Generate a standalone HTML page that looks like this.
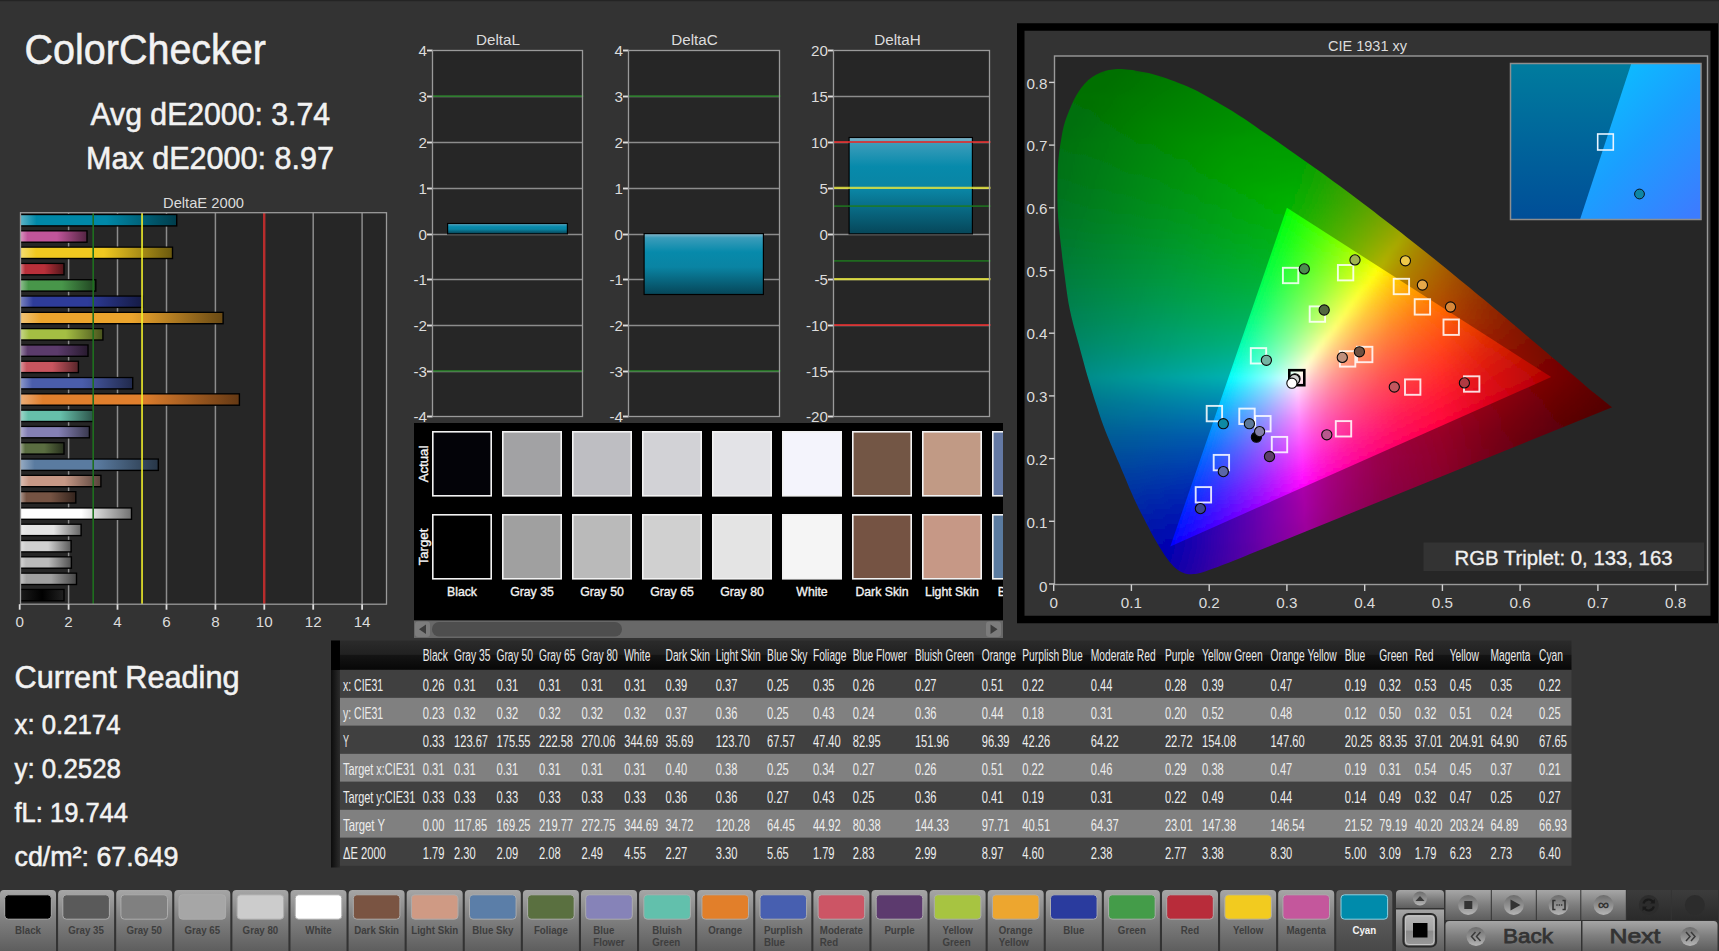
<!DOCTYPE html>
<html lang="en">
<head>
<meta charset="utf-8">
<title>ColorChecker</title>
<style>
html,body{margin:0;padding:0;background:#333333;overflow:hidden}
body{width:1719px;height:951px}
svg{display:block;font-family:'Liberation Sans', sans-serif}
</style>
</head>
<body>
<svg width="1719" height="951" viewBox="0 0 1719 951">
<defs>
<linearGradient id="bg0" x1="0" x2="1" y1="0" y2="0"><stop offset="0" stop-color="#1a1a1a"/><stop offset="0.5" stop-color="#000000"/><stop offset="1" stop-color="#202020"/></linearGradient>
<linearGradient id="bg1" x1="0" x2="1" y1="0" y2="0"><stop offset="0" stop-color="#c1c1c1"/><stop offset="0.1" stop-color="#a0a0a0"/><stop offset="0.55" stop-color="#a0a0a0"/><stop offset="1" stop-color="#484848"/></linearGradient>
<linearGradient id="bg2" x1="0" x2="1" y1="0" y2="0"><stop offset="0" stop-color="#d2d2d2"/><stop offset="0.1" stop-color="#bababa"/><stop offset="0.55" stop-color="#bababa"/><stop offset="1" stop-color="#545454"/></linearGradient>
<linearGradient id="bg3" x1="0" x2="1" y1="0" y2="0"><stop offset="0" stop-color="#e0e0e0"/><stop offset="0.1" stop-color="#d0d0d0"/><stop offset="0.55" stop-color="#d0d0d0"/><stop offset="1" stop-color="#5e5e5e"/></linearGradient>
<linearGradient id="bg4" x1="0" x2="1" y1="0" y2="0"><stop offset="0" stop-color="#ededed"/><stop offset="0.1" stop-color="#e4e4e4"/><stop offset="0.55" stop-color="#e4e4e4"/><stop offset="1" stop-color="#676767"/></linearGradient>
<linearGradient id="bg5" x1="0" x2="1" y1="0" y2="0"><stop offset="0" stop-color="#ffffff"/><stop offset="0.1" stop-color="#ffffff"/><stop offset="0.55" stop-color="#ffffff"/><stop offset="1" stop-color="#737373"/></linearGradient>
<linearGradient id="bg6" x1="0" x2="1" y1="0" y2="0"><stop offset="0" stop-color="#a58f85"/><stop offset="0.1" stop-color="#755343"/><stop offset="0.55" stop-color="#755343"/><stop offset="1" stop-color="#35251e"/></linearGradient>
<linearGradient id="bg7" x1="0" x2="1" y1="0" y2="0"><stop offset="0" stop-color="#dabcb0"/><stop offset="0.1" stop-color="#c69886"/><stop offset="0.55" stop-color="#c69886"/><stop offset="1" stop-color="#59443c"/></linearGradient>
<linearGradient id="bg8" x1="0" x2="1" y1="0" y2="0"><stop offset="0" stop-color="#94a9c1"/><stop offset="0.1" stop-color="#5a7ba0"/><stop offset="0.55" stop-color="#5a7ba0"/><stop offset="1" stop-color="#283748"/></linearGradient>
<linearGradient id="bg9" x1="0" x2="1" y1="0" y2="0"><stop offset="0" stop-color="#94a084"/><stop offset="0.1" stop-color="#5a6d41"/><stop offset="0.55" stop-color="#5a6d41"/><stop offset="1" stop-color="#28311d"/></linearGradient>
<linearGradient id="bg10" x1="0" x2="1" y1="0" y2="0"><stop offset="0" stop-color="#afacce"/><stop offset="0.1" stop-color="#8480b4"/><stop offset="0.55" stop-color="#8480b4"/><stop offset="1" stop-color="#3b3a51"/></linearGradient>
<linearGradient id="bg11" x1="0" x2="1" y1="0" y2="0"><stop offset="0" stop-color="#9cd5c8"/><stop offset="0.1" stop-color="#66bfaa"/><stop offset="0.55" stop-color="#66bfaa"/><stop offset="1" stop-color="#2e564c"/></linearGradient>
<linearGradient id="bg12" x1="0" x2="1" y1="0" y2="0"><stop offset="0" stop-color="#ebac76"/><stop offset="0.1" stop-color="#e07f2d"/><stop offset="0.55" stop-color="#e07f2d"/><stop offset="1" stop-color="#653914"/></linearGradient>
<linearGradient id="bg13" x1="0" x2="1" y1="0" y2="0"><stop offset="0" stop-color="#8996c8"/><stop offset="0.1" stop-color="#4a5dab"/><stop offset="0.55" stop-color="#4a5dab"/><stop offset="1" stop-color="#212a4d"/></linearGradient>
<linearGradient id="bg14" x1="0" x2="1" y1="0" y2="0"><stop offset="0" stop-color="#db9097"/><stop offset="0.1" stop-color="#c8555f"/><stop offset="0.55" stop-color="#c8555f"/><stop offset="1" stop-color="#5a262b"/></linearGradient>
<linearGradient id="bg15" x1="0" x2="1" y1="0" y2="0"><stop offset="0" stop-color="#94809f"/><stop offset="0.1" stop-color="#5b3b6b"/><stop offset="0.55" stop-color="#5b3b6b"/><stop offset="1" stop-color="#291b30"/></linearGradient>
<linearGradient id="bg16" x1="0" x2="1" y1="0" y2="0"><stop offset="0" stop-color="#c4d585"/><stop offset="0.1" stop-color="#a4be43"/><stop offset="0.55" stop-color="#a4be43"/><stop offset="1" stop-color="#4a551e"/></linearGradient>
<linearGradient id="bg17" x1="0" x2="1" y1="0" y2="0"><stop offset="0" stop-color="#f2c476"/><stop offset="0.1" stop-color="#eba42d"/><stop offset="0.55" stop-color="#eba42d"/><stop offset="1" stop-color="#6a4a14"/></linearGradient>
<linearGradient id="bg18" x1="0" x2="1" y1="0" y2="0"><stop offset="0" stop-color="#7780bd"/><stop offset="0.1" stop-color="#2e3c9a"/><stop offset="0.55" stop-color="#2e3c9a"/><stop offset="1" stop-color="#151b45"/></linearGradient>
<linearGradient id="bg19" x1="0" x2="1" y1="0" y2="0"><stop offset="0" stop-color="#88bb89"/><stop offset="0.1" stop-color="#48964a"/><stop offset="0.55" stop-color="#48964a"/><stop offset="1" stop-color="#204421"/></linearGradient>
<linearGradient id="bg20" x1="0" x2="1" y1="0" y2="0"><stop offset="0" stop-color="#d1787f"/><stop offset="0.1" stop-color="#b8303a"/><stop offset="0.55" stop-color="#b8303a"/><stop offset="1" stop-color="#53161a"/></linearGradient>
<linearGradient id="bg21" x1="0" x2="1" y1="0" y2="0"><stop offset="0" stop-color="#f5db6e"/><stop offset="0.1" stop-color="#f0c820"/><stop offset="0.55" stop-color="#f0c820"/><stop offset="1" stop-color="#6c5a0e"/></linearGradient>
<linearGradient id="bg22" x1="0" x2="1" y1="0" y2="0"><stop offset="0" stop-color="#d690bd"/><stop offset="0.1" stop-color="#c0559a"/><stop offset="0.55" stop-color="#c0559a"/><stop offset="1" stop-color="#562645"/></linearGradient>
<linearGradient id="bg23" x1="0" x2="1" y1="0" y2="0"><stop offset="0" stop-color="#59b2c6"/><stop offset="0.1" stop-color="#0088a8"/><stop offset="0.55" stop-color="#0088a8"/><stop offset="1" stop-color="#003d4c"/></linearGradient>
<linearGradient id="cyanbar" x1="0" x2="0" y1="0" y2="1"><stop offset="0" stop-color="#7fb4c8"/><stop offset="0.06" stop-color="#3a9cba"/><stop offset="0.3" stop-color="#078aab"/><stop offset="0.55" stop-color="#0a84a3"/><stop offset="1" stop-color="#06475a"/></linearGradient>
<clipPath id="hs"><path d="M1250.0 554.1 L1246.1 555.7 L1240.6 557.9 L1234.3 560.4 L1228.0 563.0 L1222.5 565.1 L1217.7 566.9 L1213.2 568.6 L1209.0 570.1 L1205.2 571.4 L1201.9 572.5 L1199.1 573.2 L1196.9 573.7 L1195.0 574.0 L1193.3 574.1 L1191.6 574.2 L1190.0 574.3 L1188.5 574.2 L1187.1 574.0 L1185.8 573.7 L1184.2 573.2 L1182.5 572.5 L1180.8 571.7 L1179.0 570.7 L1177.2 569.5 L1175.4 568.1 L1173.6 566.4 L1171.9 564.6 L1170.1 562.5 L1168.4 560.3 L1166.5 557.7 L1164.5 554.9 L1162.5 551.8 L1160.4 548.6 L1158.3 545.1 L1156.2 541.6 L1154.2 538.0 L1152.2 534.4 L1150.1 530.6 L1148.1 526.6 L1145.9 522.4 L1143.7 518.1 L1141.3 513.6 L1139.0 509.0 L1136.6 504.1 L1134.2 498.9 L1131.7 493.3 L1129.1 487.4 L1126.6 481.2 L1124.1 475.2 L1121.6 469.4 L1119.4 464.1 L1117.1 459.0 L1115.0 454.0 L1112.9 449.1 L1110.8 444.2 L1108.9 439.5 L1107.1 435.2 L1105.3 430.8 L1103.5 426.0 L1101.5 420.4 L1099.3 413.9 L1096.9 406.6 L1094.4 399.0 L1092.0 391.2 L1089.7 383.6 L1087.5 376.2 L1085.4 368.9 L1083.4 361.5 L1081.4 354.2 L1079.4 346.8 L1077.4 339.4 L1075.3 332.0 L1073.3 324.5 L1071.5 317.2 L1069.9 310.0 L1068.5 302.9 L1067.4 295.9 L1066.4 289.0 L1065.5 282.2 L1064.7 275.7 L1063.8 269.5 L1063.1 263.6 L1062.3 257.8 L1061.7 252.1 L1061.0 246.2 L1060.3 240.3 L1059.7 234.2 L1059.1 228.2 L1058.6 222.4 L1058.1 216.8 L1057.8 211.6 L1057.6 206.7 L1057.5 202.0 L1057.4 197.2 L1057.4 192.0 L1057.4 186.3 L1057.5 180.2 L1057.6 174.0 L1057.8 168.0 L1058.1 162.5 L1058.6 157.6 L1059.1 153.0 L1059.7 148.7 L1060.3 144.5 L1061.0 140.5 L1061.6 136.7 L1062.2 133.2 L1062.9 129.8 L1063.7 126.3 L1064.7 122.8 L1065.9 119.0 L1067.4 115.0 L1069.0 111.0 L1070.6 107.2 L1072.1 103.7 L1073.6 100.6 L1075.0 97.8 L1076.4 95.3 L1077.9 92.8 L1079.4 90.4 L1081.1 88.1 L1082.8 85.9 L1084.6 83.8 L1086.4 81.9 L1088.3 80.1 L1090.3 78.5 L1092.3 77.0 L1094.4 75.7 L1096.5 74.5 L1098.6 73.5 L1100.7 72.6 L1102.7 71.8 L1104.8 71.1 L1106.8 70.6 L1108.9 70.1 L1110.9 69.7 L1112.9 69.4 L1114.9 69.3 L1117.0 69.1 L1119.2 69.1 L1121.6 69.1 L1123.9 69.2 L1126.4 69.4 L1129.2 69.7 L1132.4 70.1 L1136.0 70.7 L1140.0 71.4 L1144.3 72.2 L1148.6 73.1 L1153.0 74.2 L1157.3 75.4 L1161.7 76.8 L1166.2 78.3 L1170.7 79.9 L1175.1 81.6 L1179.3 83.2 L1183.3 84.7 L1187.5 86.5 L1192.0 88.5 L1197.2 91.1 L1203.5 94.5 L1210.6 98.4 L1218.1 102.7 L1225.4 107.0 L1232.2 111.1 L1238.3 114.9 L1243.9 118.6 L1249.4 122.3 L1254.8 126.1 L1260.3 129.9 L1266.0 133.7 L1271.6 137.6 L1277.3 141.5 L1283.0 145.4 L1288.6 149.4 L1294.3 153.4 L1300.0 157.4 L1305.7 161.4 L1311.4 165.4 L1317.1 169.5 L1322.8 173.6 L1328.5 177.7 L1334.2 181.9 L1339.9 186.1 L1345.6 190.3 L1351.3 194.5 L1356.9 198.8 L1362.5 203.0 L1368.2 207.3 L1373.8 211.6 L1379.4 215.9 L1385.0 220.2 L1390.6 224.5 L1396.1 228.8 L1401.6 233.1 L1407.1 237.4 L1412.6 241.7 L1418.0 246.0 L1423.4 250.3 L1428.7 254.6 L1434.1 258.8 L1439.3 263.1 L1444.6 267.3 L1449.8 271.5 L1454.9 275.7 L1460.0 279.9 L1465.0 284.0 L1470.0 288.1 L1474.9 292.2 L1479.8 296.2 L1484.6 300.1 L1489.3 304.1 L1494.0 307.9 L1498.6 311.8 L1503.0 315.5 L1507.4 319.2 L1511.8 322.9 L1516.0 326.5 L1520.1 330.0 L1524.1 333.4 L1528.0 336.7 L1531.8 339.9 L1535.4 343.0 L1539.0 346.0 L1542.4 348.9 L1545.8 351.8 L1549.2 354.7 L1552.4 357.4 L1555.5 360.1 L1558.5 362.6 L1561.4 365.1 L1564.1 367.4 L1566.8 369.7 L1569.4 371.9 L1571.8 374.0 L1574.2 376.0 L1576.4 377.9 L1578.6 379.8 L1580.6 381.6 L1582.6 383.3 L1584.5 384.9 L1586.3 386.5 L1588.0 388.0 L1589.7 389.4 L1591.3 390.7 L1592.8 392.0 L1594.3 393.1 L1595.7 394.2 L1597.0 395.3 L1598.3 396.3 L1599.6 397.3 L1600.8 398.3 L1601.9 399.2 L1603.0 400.1 L1604.0 400.9 L1605.1 401.8 L1606.0 402.6 L1607.0 403.3 L1607.9 404.1 L1608.8 404.7 L1609.6 405.4 L1610.4 405.9 L1611.1 406.5 L1611.7 406.9 L1612.2 407.2 Z"/></clipPath>
<clipPath id="tri"><path d="M1551.2 377.1 L1286.9 207.8 L1170.3 546.4 Z"/></clipPath>
<filter id="vblur" x="-2%" y="-2%" width="104%" height="104%"><feGaussianBlur stdDeviation="0 2.6"/></filter>
<linearGradient id="ho0" gradientUnits="userSpaceOnUse" x1="1104.7" x2="1135.5" y1="0" y2="0"><stop offset="0.000" stop-color="#007000"/><stop offset="1.000" stop-color="#007100"/></linearGradient>
<linearGradient id="ho1" gradientUnits="userSpaceOnUse" x1="1104.7" x2="1135.5" y1="0" y2="0"><stop offset="0.000" stop-color="#007000"/><stop offset="1.000" stop-color="#007200"/></linearGradient>
<linearGradient id="ho2" gradientUnits="userSpaceOnUse" x1="1090.4" x2="1159.7" y1="0" y2="0"><stop offset="0.000" stop-color="#007000"/><stop offset="0.435" stop-color="#007000"/><stop offset="1.000" stop-color="#007800"/></linearGradient>
<linearGradient id="ho3" gradientUnits="userSpaceOnUse" x1="1082.5" x2="1175.4" y1="0" y2="0"><stop offset="0.000" stop-color="#007000"/><stop offset="0.333" stop-color="#007000"/><stop offset="1.000" stop-color="#007c00"/></linearGradient>
<linearGradient id="ho4" gradientUnits="userSpaceOnUse" x1="1077.3" x2="1188.7" y1="0" y2="0"><stop offset="0.000" stop-color="#007002"/><stop offset="0.270" stop-color="#007000"/><stop offset="1.000" stop-color="#007f00"/></linearGradient>
<linearGradient id="ho5" gradientUnits="userSpaceOnUse" x1="1073.4" x2="1200.2" y1="0" y2="0"><stop offset="0.000" stop-color="#007003"/><stop offset="0.238" stop-color="#007000"/><stop offset="1.000" stop-color="#008200"/></linearGradient>
<linearGradient id="ho6" gradientUnits="userSpaceOnUse" x1="1070.1" x2="1209.8" y1="0" y2="0"><stop offset="0.000" stop-color="#007005"/><stop offset="0.196" stop-color="#007001"/><stop offset="1.000" stop-color="#008500"/></linearGradient>
<linearGradient id="ho7" gradientUnits="userSpaceOnUse" x1="1067.3" x2="1218.8" y1="0" y2="0"><stop offset="0.000" stop-color="#007006"/><stop offset="0.300" stop-color="#007500"/><stop offset="1.000" stop-color="#008800"/></linearGradient>
<linearGradient id="ho8" gradientUnits="userSpaceOnUse" x1="1065.0" x2="1227.5" y1="0" y2="0"><stop offset="0.000" stop-color="#007007"/><stop offset="0.148" stop-color="#007005"/><stop offset="0.352" stop-color="#007800"/><stop offset="1.000" stop-color="#008a00"/></linearGradient>
<linearGradient id="ho9" gradientUnits="userSpaceOnUse" x1="1062.8" x2="1236.0" y1="0" y2="0"><stop offset="0.000" stop-color="#007009"/><stop offset="0.123" stop-color="#007006"/><stop offset="0.386" stop-color="#007a00"/><stop offset="1.000" stop-color="#008d00"/></linearGradient>
<linearGradient id="ho10" gradientUnits="userSpaceOnUse" x1="1060.7" x2="1244.0" y1="0" y2="0"><stop offset="0.000" stop-color="#00700a"/><stop offset="0.115" stop-color="#007008"/><stop offset="0.426" stop-color="#007d00"/><stop offset="1.000" stop-color="#008f00"/></linearGradient>
<linearGradient id="ho11" gradientUnits="userSpaceOnUse" x1="1058.9" x2="1251.6" y1="0" y2="0"><stop offset="0.000" stop-color="#00700b"/><stop offset="0.109" stop-color="#007109"/><stop offset="0.453" stop-color="#008000"/><stop offset="1.000" stop-color="#009100"/></linearGradient>
<linearGradient id="ho12" gradientUnits="userSpaceOnUse" x1="1057.3" x2="1259.0" y1="0" y2="0"><stop offset="0.000" stop-color="#00700c"/><stop offset="0.090" stop-color="#00700a"/><stop offset="0.478" stop-color="#008300"/><stop offset="1.000" stop-color="#009400"/></linearGradient>
<linearGradient id="ho13" gradientUnits="userSpaceOnUse" x1="1056.0" x2="1266.2" y1="0" y2="0"><stop offset="0.000" stop-color="#00700e"/><stop offset="0.071" stop-color="#00700c"/><stop offset="0.500" stop-color="#008600"/><stop offset="1.000" stop-color="#009600"/></linearGradient>
<linearGradient id="ho14" gradientUnits="userSpaceOnUse" x1="1055.1" x2="1273.6" y1="0" y2="0"><stop offset="0.000" stop-color="#00700f"/><stop offset="0.069" stop-color="#00710d"/><stop offset="0.514" stop-color="#008800"/><stop offset="1.000" stop-color="#009800"/></linearGradient>
<linearGradient id="ho15" gradientUnits="userSpaceOnUse" x1="1054.2" x2="1280.8" y1="0" y2="0"><stop offset="0.000" stop-color="#007010"/><stop offset="0.053" stop-color="#00700f"/><stop offset="0.533" stop-color="#008b00"/><stop offset="0.800" stop-color="#009600"/><stop offset="1.000" stop-color="#009a00"/></linearGradient>
<linearGradient id="ho16" gradientUnits="userSpaceOnUse" x1="1053.4" x2="1288.0" y1="0" y2="0"><stop offset="0.000" stop-color="#007011"/><stop offset="0.564" stop-color="#008e00"/><stop offset="0.808" stop-color="#009900"/><stop offset="1.000" stop-color="#009c00"/></linearGradient>
<linearGradient id="ho17" gradientUnits="userSpaceOnUse" x1="1052.6" x2="1295.2" y1="0" y2="0"><stop offset="0.000" stop-color="#007012"/><stop offset="0.325" stop-color="#00820b"/><stop offset="0.575" stop-color="#009100"/><stop offset="0.812" stop-color="#009b00"/><stop offset="1.000" stop-color="#009d00"/></linearGradient>
<linearGradient id="ho18" gradientUnits="userSpaceOnUse" x1="1052.0" x2="1302.4" y1="0" y2="0"><stop offset="0.000" stop-color="#007013"/><stop offset="0.337" stop-color="#00840b"/><stop offset="0.590" stop-color="#009300"/><stop offset="0.687" stop-color="#009800"/><stop offset="0.855" stop-color="#009e00"/><stop offset="1.000" stop-color="#009f00"/></linearGradient>
<linearGradient id="ho19" gradientUnits="userSpaceOnUse" x1="1051.4" x2="1309.5" y1="0" y2="0"><stop offset="0.000" stop-color="#007015"/><stop offset="0.337" stop-color="#00850d"/><stop offset="0.605" stop-color="#009600"/><stop offset="0.698" stop-color="#009b00"/><stop offset="0.977" stop-color="#00a000"/><stop offset="1.000" stop-color="#06a000"/></linearGradient>
<linearGradient id="ho20" gradientUnits="userSpaceOnUse" x1="1051.0" x2="1316.6" y1="0" y2="0"><stop offset="0.000" stop-color="#007016"/><stop offset="0.318" stop-color="#00850f"/><stop offset="0.670" stop-color="#009c00"/><stop offset="0.818" stop-color="#00a200"/><stop offset="0.943" stop-color="#00a200"/><stop offset="1.000" stop-color="#0ea100"/></linearGradient>
<linearGradient id="ho21" gradientUnits="userSpaceOnUse" x1="1050.8" x2="1323.6" y1="0" y2="0"><stop offset="0.000" stop-color="#007017"/><stop offset="0.344" stop-color="#00880f"/><stop offset="0.656" stop-color="#009d00"/><stop offset="0.911" stop-color="#00a400"/><stop offset="1.000" stop-color="#17a100"/></linearGradient>
<linearGradient id="ho22" gradientUnits="userSpaceOnUse" x1="1050.6" x2="1330.5" y1="0" y2="0"><stop offset="0.000" stop-color="#007018"/><stop offset="0.366" stop-color="#008b0f"/><stop offset="0.645" stop-color="#009f00"/><stop offset="0.882" stop-color="#00a600"/><stop offset="1.000" stop-color="#20a100"/></linearGradient>
<linearGradient id="ho23" gradientUnits="userSpaceOnUse" x1="1050.5" x2="1337.4" y1="0" y2="0"><stop offset="0.000" stop-color="#007019"/><stop offset="0.358" stop-color="#008c11"/><stop offset="0.642" stop-color="#00a001"/><stop offset="0.853" stop-color="#00a700"/><stop offset="1.000" stop-color="#29a100"/></linearGradient>
<linearGradient id="ho24" gradientUnits="userSpaceOnUse" x1="1050.5" x2="1344.2" y1="0" y2="0"><stop offset="0.000" stop-color="#00711b"/><stop offset="0.351" stop-color="#008c13"/><stop offset="0.639" stop-color="#00a203"/><stop offset="0.835" stop-color="#00a900"/><stop offset="1.000" stop-color="#32a100"/></linearGradient>
<linearGradient id="ho25" gradientUnits="userSpaceOnUse" x1="1050.4" x2="1351.0" y1="0" y2="0"><stop offset="0.000" stop-color="#00711c"/><stop offset="0.350" stop-color="#008d14"/><stop offset="0.640" stop-color="#00a404"/><stop offset="0.680" stop-color="#00a700"/><stop offset="0.810" stop-color="#00ab00"/><stop offset="1.000" stop-color="#3ca200"/></linearGradient>
<linearGradient id="ho26" gradientUnits="userSpaceOnUse" x1="1050.4" x2="1357.7" y1="0" y2="0"><stop offset="0.000" stop-color="#00711e"/><stop offset="0.343" stop-color="#008e16"/><stop offset="0.539" stop-color="#009e0c"/><stop offset="0.686" stop-color="#00a900"/><stop offset="0.784" stop-color="#00ad00"/><stop offset="1.000" stop-color="#46a200"/></linearGradient>
<linearGradient id="ho27" gradientUnits="userSpaceOnUse" x1="1050.4" x2="1364.3" y1="0" y2="0"><stop offset="0.000" stop-color="#00721f"/><stop offset="0.365" stop-color="#009117"/><stop offset="0.548" stop-color="#00a00d"/><stop offset="0.702" stop-color="#00ad00"/><stop offset="0.760" stop-color="#00af00"/><stop offset="1.000" stop-color="#50a200"/></linearGradient>
<linearGradient id="ho28" gradientUnits="userSpaceOnUse" x1="1050.5" x2="1370.9" y1="0" y2="0"><stop offset="0.000" stop-color="#007221"/><stop offset="0.387" stop-color="#009417"/><stop offset="0.745" stop-color="#00b000"/><stop offset="1.000" stop-color="#5ba200"/></linearGradient>
<linearGradient id="ho29" gradientUnits="userSpaceOnUse" x1="1050.6" x2="1377.5" y1="0" y2="0"><stop offset="0.000" stop-color="#007322"/><stop offset="0.407" stop-color="#009718"/><stop offset="0.574" stop-color="#00a50e"/><stop offset="0.722" stop-color="#00b200"/><stop offset="1.000" stop-color="#66a200"/></linearGradient>
<linearGradient id="ho30" gradientUnits="userSpaceOnUse" x1="1050.7" x2="1384.1" y1="0" y2="0"><stop offset="0.000" stop-color="#007324"/><stop offset="0.396" stop-color="#00971a"/><stop offset="0.568" stop-color="#00a610"/><stop offset="0.703" stop-color="#00b203"/><stop offset="0.730" stop-color="#0cb200"/><stop offset="1.000" stop-color="#72a300"/></linearGradient>
<linearGradient id="ho31" gradientUnits="userSpaceOnUse" x1="1051.0" x2="1390.6" y1="0" y2="0"><stop offset="0.000" stop-color="#007425"/><stop offset="0.381" stop-color="#00971d"/><stop offset="0.681" stop-color="#00b207"/><stop offset="0.735" stop-color="#16b200"/><stop offset="1.000" stop-color="#7ea300"/></linearGradient>
<linearGradient id="ho32" gradientUnits="userSpaceOnUse" x1="1051.3" x2="1397.1" y1="0" y2="0"><stop offset="0.000" stop-color="#007427"/><stop offset="0.374" stop-color="#00971f"/><stop offset="0.670" stop-color="#01b20a"/><stop offset="0.748" stop-color="#24b200"/><stop offset="1.000" stop-color="#8ca300"/></linearGradient>
<linearGradient id="ho33" gradientUnits="userSpaceOnUse" x1="1051.7" x2="1403.5" y1="0" y2="0"><stop offset="0.000" stop-color="#007529"/><stop offset="0.359" stop-color="#009722"/><stop offset="0.650" stop-color="#00b20e"/><stop offset="0.752" stop-color="#2fb200"/><stop offset="1.000" stop-color="#9aa300"/></linearGradient>
<linearGradient id="ho34" gradientUnits="userSpaceOnUse" x1="1052.2" x2="1409.9" y1="0" y2="0"><stop offset="0.000" stop-color="#00762a"/><stop offset="0.345" stop-color="#009724"/><stop offset="0.630" stop-color="#00b211"/><stop offset="0.765" stop-color="#3eb200"/><stop offset="0.983" stop-color="#a1a500"/><stop offset="1.000" stop-color="#a49f00"/></linearGradient>
<linearGradient id="ho35" gradientUnits="userSpaceOnUse" x1="1052.7" x2="1416.3" y1="0" y2="0"><stop offset="0.000" stop-color="#00762c"/><stop offset="0.339" stop-color="#009727"/><stop offset="0.612" stop-color="#00b215"/><stop offset="0.769" stop-color="#4ab200"/><stop offset="0.959" stop-color="#a4a600"/><stop offset="1.000" stop-color="#a49100"/></linearGradient>
<linearGradient id="ho36" gradientUnits="userSpaceOnUse" x1="1053.2" x2="1422.6" y1="0" y2="0"><stop offset="0.000" stop-color="#00772e"/><stop offset="0.333" stop-color="#009829"/><stop offset="0.602" stop-color="#00b218"/><stop offset="0.780" stop-color="#5bb200"/><stop offset="0.935" stop-color="#a8a800"/><stop offset="1.000" stop-color="#a48500"/></linearGradient>
<linearGradient id="ho37" gradientUnits="userSpaceOnUse" x1="1053.8" x2="1428.9" y1="0" y2="0"><stop offset="0.000" stop-color="#007730"/><stop offset="0.320" stop-color="#00982c"/><stop offset="0.584" stop-color="#00b21c"/><stop offset="0.784" stop-color="#68b200"/><stop offset="0.904" stop-color="#a7ab00"/><stop offset="0.912" stop-color="#aaa900"/><stop offset="0.952" stop-color="#a89100"/><stop offset="1.000" stop-color="#a47b00"/></linearGradient>
<linearGradient id="ho38" gradientUnits="userSpaceOnUse" x1="1054.3" x2="1435.2" y1="0" y2="0"><stop offset="0.000" stop-color="#007832"/><stop offset="0.310" stop-color="#00982f"/><stop offset="0.571" stop-color="#00b21f"/><stop offset="0.794" stop-color="#7ab200"/><stop offset="0.881" stop-color="#aaad00"/><stop offset="0.944" stop-color="#a88900"/><stop offset="1.000" stop-color="#a57100"/></linearGradient>
<linearGradient id="ho39" gradientUnits="userSpaceOnUse" x1="1054.9" x2="1441.4" y1="0" y2="0"><stop offset="0.000" stop-color="#007934"/><stop offset="0.305" stop-color="#009832"/><stop offset="0.555" stop-color="#00b223"/><stop offset="0.695" stop-color="#4db212"/><stop offset="0.797" stop-color="#89b200"/><stop offset="0.859" stop-color="#adae00"/><stop offset="0.930" stop-color="#aa8500"/><stop offset="1.000" stop-color="#a56800"/></linearGradient>
<linearGradient id="ho40" gradientUnits="userSpaceOnUse" x1="1055.5" x2="1447.6" y1="0" y2="0"><stop offset="0.000" stop-color="#007936"/><stop offset="0.292" stop-color="#009835"/><stop offset="0.538" stop-color="#00b227"/><stop offset="0.692" stop-color="#56b214"/><stop offset="0.808" stop-color="#9eb200"/><stop offset="0.838" stop-color="#b0b000"/><stop offset="0.908" stop-color="#ab8500"/><stop offset="1.000" stop-color="#a35e00"/></linearGradient>
<linearGradient id="ho41" gradientUnits="userSpaceOnUse" x1="1056.1" x2="1453.8" y1="0" y2="0"><stop offset="0.000" stop-color="#007a39"/><stop offset="0.288" stop-color="#009937"/><stop offset="0.530" stop-color="#01b22b"/><stop offset="0.705" stop-color="#69b214"/><stop offset="0.811" stop-color="#afb200"/><stop offset="0.818" stop-color="#b2b000"/><stop offset="0.856" stop-color="#af9600"/><stop offset="0.894" stop-color="#ad8100"/><stop offset="0.970" stop-color="#a86200"/><stop offset="1.000" stop-color="#a05500"/></linearGradient>
<linearGradient id="ho42" gradientUnits="userSpaceOnUse" x1="1056.8" x2="1459.9" y1="0" y2="0"><stop offset="0.000" stop-color="#007b3b"/><stop offset="0.284" stop-color="#00993a"/><stop offset="0.515" stop-color="#00b22f"/><stop offset="0.679" stop-color="#64b21a"/><stop offset="0.791" stop-color="#b1b206"/><stop offset="0.821" stop-color="#b29f00"/><stop offset="0.881" stop-color="#ae7d00"/><stop offset="0.955" stop-color="#a95f00"/><stop offset="1.000" stop-color="#9d4d00"/></linearGradient>
<linearGradient id="ho43" gradientUnits="userSpaceOnUse" x1="1057.4" x2="1466.0" y1="0" y2="0"><stop offset="0.000" stop-color="#007b3d"/><stop offset="0.272" stop-color="#00993e"/><stop offset="0.500" stop-color="#00b233"/><stop offset="0.654" stop-color="#60b220"/><stop offset="0.765" stop-color="#adb20e"/><stop offset="0.772" stop-color="#b2b20c"/><stop offset="0.824" stop-color="#b29100"/><stop offset="0.875" stop-color="#af7600"/><stop offset="0.941" stop-color="#aa5c00"/><stop offset="1.000" stop-color="#9b4600"/></linearGradient>
<linearGradient id="ho44" gradientUnits="userSpaceOnUse" x1="1058.1" x2="1472.1" y1="0" y2="0"><stop offset="0.000" stop-color="#007c40"/><stop offset="0.268" stop-color="#009a41"/><stop offset="0.493" stop-color="#01b237"/><stop offset="0.645" stop-color="#65b224"/><stop offset="0.746" stop-color="#afb213"/><stop offset="0.754" stop-color="#b2b012"/><stop offset="0.790" stop-color="#b29709"/><stop offset="0.833" stop-color="#b28000"/><stop offset="0.928" stop-color="#ac5900"/><stop offset="1.000" stop-color="#983f00"/></linearGradient>
<linearGradient id="ho45" gradientUnits="userSpaceOnUse" x1="1058.8" x2="1478.2" y1="0" y2="0"><stop offset="0.000" stop-color="#007d42"/><stop offset="0.259" stop-color="#009a44"/><stop offset="0.475" stop-color="#00b23c"/><stop offset="0.619" stop-color="#5eb22b"/><stop offset="0.727" stop-color="#afb219"/><stop offset="0.734" stop-color="#b2b018"/><stop offset="0.784" stop-color="#b28e0b"/><stop offset="0.835" stop-color="#b27501"/><stop offset="0.914" stop-color="#ad5600"/><stop offset="1.000" stop-color="#953800"/></linearGradient>
<linearGradient id="ho46" gradientUnits="userSpaceOnUse" x1="1059.4" x2="1484.3" y1="0" y2="0"><stop offset="0.000" stop-color="#007d45"/><stop offset="0.255" stop-color="#009a48"/><stop offset="0.468" stop-color="#01b240"/><stop offset="0.617" stop-color="#69b22e"/><stop offset="0.709" stop-color="#b1b21f"/><stop offset="0.752" stop-color="#b29413"/><stop offset="0.787" stop-color="#b2800b"/><stop offset="0.844" stop-color="#b26800"/><stop offset="0.901" stop-color="#ae5300"/><stop offset="1.000" stop-color="#933300"/></linearGradient>
<linearGradient id="ho47" gradientUnits="userSpaceOnUse" x1="1060.2" x2="1490.3" y1="0" y2="0"><stop offset="0.000" stop-color="#007e48"/><stop offset="0.245" stop-color="#009a4b"/><stop offset="0.455" stop-color="#00b245"/><stop offset="0.594" stop-color="#64b235"/><stop offset="0.685" stop-color="#adb227"/><stop offset="0.692" stop-color="#b2b225"/><stop offset="0.734" stop-color="#b29318"/><stop offset="0.776" stop-color="#b27b0e"/><stop offset="0.846" stop-color="#b25e01"/><stop offset="0.888" stop-color="#b05000"/><stop offset="1.000" stop-color="#902d00"/></linearGradient>
<linearGradient id="ho48" gradientUnits="userSpaceOnUse" x1="1060.9" x2="1496.4" y1="0" y2="0"><stop offset="0.000" stop-color="#007e4b"/><stop offset="0.241" stop-color="#009b4f"/><stop offset="0.441" stop-color="#00b24a"/><stop offset="0.572" stop-color="#5fb23b"/><stop offset="0.669" stop-color="#afb22d"/><stop offset="0.676" stop-color="#b2b02b"/><stop offset="0.717" stop-color="#b2911d"/><stop offset="0.759" stop-color="#b27912"/><stop offset="0.855" stop-color="#b25400"/><stop offset="0.876" stop-color="#b14d00"/><stop offset="0.931" stop-color="#a13a00"/><stop offset="1.000" stop-color="#8d2800"/></linearGradient>
<linearGradient id="ho49" gradientUnits="userSpaceOnUse" x1="1061.8" x2="1502.4" y1="0" y2="0"><stop offset="0.000" stop-color="#007f4e"/><stop offset="0.233" stop-color="#009b53"/><stop offset="0.432" stop-color="#00b24f"/><stop offset="0.562" stop-color="#63b241"/><stop offset="0.651" stop-color="#afb233"/><stop offset="0.658" stop-color="#b2b031"/><stop offset="0.705" stop-color="#b28b20"/><stop offset="0.747" stop-color="#b27516"/><stop offset="0.801" stop-color="#b25e0a"/><stop offset="0.863" stop-color="#b24b00"/><stop offset="0.925" stop-color="#a03600"/><stop offset="1.000" stop-color="#8b2400"/></linearGradient>
<linearGradient id="ho50" gradientUnits="userSpaceOnUse" x1="1062.7" x2="1508.4" y1="0" y2="0"><stop offset="0.000" stop-color="#008051"/><stop offset="0.230" stop-color="#009b57"/><stop offset="0.419" stop-color="#00b254"/><stop offset="0.541" stop-color="#5db247"/><stop offset="0.635" stop-color="#b1b23a"/><stop offset="0.696" stop-color="#b28523"/><stop offset="0.764" stop-color="#b26412"/><stop offset="0.851" stop-color="#b24703"/><stop offset="0.926" stop-color="#9d3000"/><stop offset="1.000" stop-color="#881f00"/></linearGradient>
<linearGradient id="ho51" gradientUnits="userSpaceOnUse" x1="1063.8" x2="1514.3" y1="0" y2="0"><stop offset="0.000" stop-color="#008154"/><stop offset="0.227" stop-color="#009c5b"/><stop offset="0.413" stop-color="#01b25a"/><stop offset="0.533" stop-color="#64b24d"/><stop offset="0.613" stop-color="#adb242"/><stop offset="0.620" stop-color="#b2b140"/><stop offset="0.660" stop-color="#b2902f"/><stop offset="0.713" stop-color="#b2711e"/><stop offset="0.773" stop-color="#b25811"/><stop offset="0.840" stop-color="#b24405"/><stop offset="0.873" stop-color="#ab3900"/><stop offset="1.000" stop-color="#851c00"/></linearGradient>
<linearGradient id="ho52" gradientUnits="userSpaceOnUse" x1="1065.0" x2="1520.2" y1="0" y2="0"><stop offset="0.000" stop-color="#008157"/><stop offset="0.219" stop-color="#009c5f"/><stop offset="0.397" stop-color="#00b25f"/><stop offset="0.404" stop-color="#03b25f"/><stop offset="0.510" stop-color="#5cb254"/><stop offset="0.596" stop-color="#adb249"/><stop offset="0.603" stop-color="#b2b148"/><stop offset="0.636" stop-color="#b29438"/><stop offset="0.669" stop-color="#b27e2b"/><stop offset="0.742" stop-color="#b25b17"/><stop offset="0.828" stop-color="#b24008"/><stop offset="0.881" stop-color="#a63100"/><stop offset="1.000" stop-color="#831800"/></linearGradient>
<linearGradient id="ho53" gradientUnits="userSpaceOnUse" x1="1066.2" x2="1526.1" y1="0" y2="0"><stop offset="0.000" stop-color="#00825b"/><stop offset="0.216" stop-color="#009d64"/><stop offset="0.392" stop-color="#01b265"/><stop offset="0.510" stop-color="#69b259"/><stop offset="0.582" stop-color="#afb250"/><stop offset="0.588" stop-color="#b2af4e"/><stop offset="0.614" stop-color="#b29740"/><stop offset="0.647" stop-color="#b28032"/><stop offset="0.725" stop-color="#b2591b"/><stop offset="0.817" stop-color="#b23d0a"/><stop offset="0.882" stop-color="#a32b00"/><stop offset="1.000" stop-color="#801500"/></linearGradient>
<linearGradient id="ho54" gradientUnits="userSpaceOnUse" x1="1067.6" x2="1532.0" y1="0" y2="0"><stop offset="0.000" stop-color="#00835e"/><stop offset="0.208" stop-color="#009d69"/><stop offset="0.377" stop-color="#00b26b"/><stop offset="0.383" stop-color="#03b26b"/><stop offset="0.481" stop-color="#5ab262"/><stop offset="0.565" stop-color="#afb258"/><stop offset="0.571" stop-color="#b2af55"/><stop offset="0.604" stop-color="#b29143"/><stop offset="0.636" stop-color="#b27a35"/><stop offset="0.714" stop-color="#b2551e"/><stop offset="0.812" stop-color="#b1380b"/><stop offset="0.890" stop-color="#9e2400"/><stop offset="1.000" stop-color="#7d1100"/></linearGradient>
<linearGradient id="ho55" gradientUnits="userSpaceOnUse" x1="1068.9" x2="1537.9" y1="0" y2="0"><stop offset="0.000" stop-color="#008462"/><stop offset="0.205" stop-color="#009e6e"/><stop offset="0.372" stop-color="#02b272"/><stop offset="0.481" stop-color="#68b268"/><stop offset="0.551" stop-color="#b2b260"/><stop offset="0.583" stop-color="#b2944c"/><stop offset="0.615" stop-color="#b27c3c"/><stop offset="0.654" stop-color="#b2662e"/><stop offset="0.705" stop-color="#b25120"/><stop offset="0.801" stop-color="#b1350d"/><stop offset="0.891" stop-color="#9b1f00"/><stop offset="1.000" stop-color="#7b0f00"/></linearGradient>
<linearGradient id="ho56" gradientUnits="userSpaceOnUse" x1="1070.3" x2="1543.8" y1="0" y2="0"><stop offset="0.000" stop-color="#008566"/><stop offset="0.357" stop-color="#00b278"/><stop offset="0.459" stop-color="#5fb270"/><stop offset="0.535" stop-color="#b2b269"/><stop offset="0.567" stop-color="#b29353"/><stop offset="0.605" stop-color="#b27740"/><stop offset="0.643" stop-color="#b26231"/><stop offset="0.694" stop-color="#b24d22"/><stop offset="0.790" stop-color="#b2320f"/><stop offset="0.898" stop-color="#971a00"/><stop offset="1.000" stop-color="#780c00"/></linearGradient>
<linearGradient id="ho57" gradientUnits="userSpaceOnUse" x1="1071.7" x2="1549.7" y1="0" y2="0"><stop offset="0.000" stop-color="#00866b"/><stop offset="0.346" stop-color="#00b27f"/><stop offset="0.352" stop-color="#02b27f"/><stop offset="0.434" stop-color="#54b279"/><stop offset="0.522" stop-color="#b2b06f"/><stop offset="0.553" stop-color="#b29058"/><stop offset="0.591" stop-color="#b27444"/><stop offset="0.629" stop-color="#b25f35"/><stop offset="0.679" stop-color="#b24b26"/><stop offset="0.780" stop-color="#b12f11"/><stop offset="0.906" stop-color="#921500"/><stop offset="1.000" stop-color="#750900"/></linearGradient>
<linearGradient id="ho58" gradientUnits="userSpaceOnUse" x1="1073.1" x2="1555.5" y1="0" y2="0"><stop offset="0.000" stop-color="#00866f"/><stop offset="0.337" stop-color="#00b286"/><stop offset="0.425" stop-color="#57b281"/><stop offset="0.506" stop-color="#b2b079"/><stop offset="0.537" stop-color="#b28f60"/><stop offset="0.575" stop-color="#b2734a"/><stop offset="0.619" stop-color="#b25b38"/><stop offset="0.669" stop-color="#b24729"/><stop offset="0.769" stop-color="#b22c13"/><stop offset="0.906" stop-color="#8f1100"/><stop offset="1.000" stop-color="#730700"/></linearGradient>
<linearGradient id="ho59" gradientUnits="userSpaceOnUse" x1="1074.4" x2="1561.4" y1="0" y2="0"><stop offset="0.000" stop-color="#008774"/><stop offset="0.327" stop-color="#00b28e"/><stop offset="0.333" stop-color="#03b28e"/><stop offset="0.414" stop-color="#58b289"/><stop offset="0.488" stop-color="#b0b284"/><stop offset="0.494" stop-color="#b2ad80"/><stop offset="0.525" stop-color="#b28c66"/><stop offset="0.562" stop-color="#b2704f"/><stop offset="0.605" stop-color="#b2593c"/><stop offset="0.660" stop-color="#b2432a"/><stop offset="0.759" stop-color="#b22915"/><stop offset="0.833" stop-color="#9f1909"/><stop offset="0.914" stop-color="#8a0d00"/><stop offset="1.000" stop-color="#700500"/></linearGradient>
<linearGradient id="ho60" gradientUnits="userSpaceOnUse" x1="1075.8" x2="1567.2" y1="0" y2="0"><stop offset="0.000" stop-color="#008879"/><stop offset="0.319" stop-color="#00b296"/><stop offset="0.405" stop-color="#5cb292"/><stop offset="0.472" stop-color="#b0b28f"/><stop offset="0.479" stop-color="#b2ad8a"/><stop offset="0.509" stop-color="#b28c6e"/><stop offset="0.552" stop-color="#b26b52"/><stop offset="0.595" stop-color="#b2543f"/><stop offset="0.650" stop-color="#b23f2d"/><stop offset="0.748" stop-color="#b22617"/><stop offset="0.822" stop-color="#9f170b"/><stop offset="0.914" stop-color="#880a00"/><stop offset="1.000" stop-color="#6f0200"/></linearGradient>
<linearGradient id="ho61" gradientUnits="userSpaceOnUse" x1="1077.1" x2="1573.1" y1="0" y2="0"><stop offset="0.000" stop-color="#00897e"/><stop offset="0.309" stop-color="#00b29e"/><stop offset="0.315" stop-color="#03b29e"/><stop offset="0.388" stop-color="#57b29c"/><stop offset="0.461" stop-color="#b2b198"/><stop offset="0.491" stop-color="#b28e79"/><stop offset="0.527" stop-color="#b2705e"/><stop offset="0.576" stop-color="#b25545"/><stop offset="0.630" stop-color="#b23f32"/><stop offset="0.739" stop-color="#b22319"/><stop offset="0.812" stop-color="#9f140c"/><stop offset="0.891" stop-color="#8b0a03"/><stop offset="1.000" stop-color="#6d0000"/></linearGradient>
<linearGradient id="ho62" gradientUnits="userSpaceOnUse" x1="1078.5" x2="1579.0" y1="0" y2="0"><stop offset="0.000" stop-color="#008a83"/><stop offset="0.301" stop-color="#00b2a7"/><stop offset="0.380" stop-color="#5bb2a6"/><stop offset="0.446" stop-color="#b2b2a3"/><stop offset="0.476" stop-color="#b28d81"/><stop offset="0.518" stop-color="#b26b61"/><stop offset="0.566" stop-color="#b25048"/><stop offset="0.620" stop-color="#b23b34"/><stop offset="0.729" stop-color="#b2201b"/><stop offset="0.880" stop-color="#8b0804"/><stop offset="0.928" stop-color="#7e0300"/><stop offset="1.000" stop-color="#6a0000"/></linearGradient>
<linearGradient id="ho63" gradientUnits="userSpaceOnUse" x1="1079.9" x2="1584.8" y1="0" y2="0"><stop offset="0.000" stop-color="#008b89"/><stop offset="0.292" stop-color="#00b2b0"/><stop offset="0.298" stop-color="#04b2b0"/><stop offset="0.363" stop-color="#55b2b0"/><stop offset="0.429" stop-color="#aeb2af"/><stop offset="0.435" stop-color="#b2adab"/><stop offset="0.464" stop-color="#b28987"/><stop offset="0.506" stop-color="#b16765"/><stop offset="0.554" stop-color="#b14d4b"/><stop offset="0.613" stop-color="#b03635"/><stop offset="0.720" stop-color="#b01d1c"/><stop offset="0.869" stop-color="#890606"/><stop offset="0.935" stop-color="#780000"/><stop offset="1.000" stop-color="#660000"/></linearGradient>
<linearGradient id="ho64" gradientUnits="userSpaceOnUse" x1="1081.4" x2="1590.6" y1="0" y2="0"><stop offset="0.000" stop-color="#00888b"/><stop offset="0.284" stop-color="#00abb2"/><stop offset="0.355" stop-color="#55aab2"/><stop offset="0.420" stop-color="#ada8b2"/><stop offset="0.426" stop-color="#b1a5ae"/><stop offset="0.456" stop-color="#b1828a"/><stop offset="0.497" stop-color="#b06168"/><stop offset="0.544" stop-color="#af484d"/><stop offset="0.604" stop-color="#ae3237"/><stop offset="0.710" stop-color="#ae1a1e"/><stop offset="0.787" stop-color="#9a0c10"/><stop offset="0.876" stop-color="#830205"/><stop offset="1.000" stop-color="#620000"/></linearGradient>
<linearGradient id="ho65" gradientUnits="userSpaceOnUse" x1="1082.8" x2="1596.4" y1="0" y2="0"><stop offset="0.000" stop-color="#00848c"/><stop offset="0.275" stop-color="#00a2b2"/><stop offset="0.351" stop-color="#59a0b2"/><stop offset="0.415" stop-color="#ae9db1"/><stop offset="0.421" stop-color="#b198ac"/><stop offset="0.450" stop-color="#b07889"/><stop offset="0.491" stop-color="#af5a68"/><stop offset="0.544" stop-color="#ae404b"/><stop offset="0.602" stop-color="#ac2c36"/><stop offset="0.702" stop-color="#ac171f"/><stop offset="0.778" stop-color="#980a11"/><stop offset="0.871" stop-color="#800006"/><stop offset="0.942" stop-color="#6c0000"/><stop offset="1.000" stop-color="#5e0000"/></linearGradient>
<linearGradient id="ho66" gradientUnits="userSpaceOnUse" x1="1084.4" x2="1602.5" y1="0" y2="0"><stop offset="0.000" stop-color="#00808d"/><stop offset="0.267" stop-color="#009ab2"/><stop offset="0.343" stop-color="#5897b2"/><stop offset="0.413" stop-color="#b190af"/><stop offset="0.448" stop-color="#af6c86"/><stop offset="0.488" stop-color="#ae5166"/><stop offset="0.535" stop-color="#ac3b4d"/><stop offset="0.593" stop-color="#aa2837"/><stop offset="0.692" stop-color="#aa1420"/><stop offset="0.837" stop-color="#840009"/><stop offset="0.913" stop-color="#6e0002"/><stop offset="1.000" stop-color="#5a0000"/></linearGradient>
<linearGradient id="ho67" gradientUnits="userSpaceOnUse" x1="1085.9" x2="1608.8" y1="0" y2="0"><stop offset="0.000" stop-color="#007b8e"/><stop offset="0.259" stop-color="#0092b2"/><stop offset="0.356" stop-color="#718cb2"/><stop offset="0.402" stop-color="#ac87b0"/><stop offset="0.408" stop-color="#b084ac"/><stop offset="0.443" stop-color="#ae6385"/><stop offset="0.483" stop-color="#ac4a66"/><stop offset="0.529" stop-color="#aa354d"/><stop offset="0.586" stop-color="#a82438"/><stop offset="0.684" stop-color="#a71021"/><stop offset="0.805" stop-color="#89000c"/><stop offset="0.902" stop-color="#6b0003"/><stop offset="1.000" stop-color="#560000"/></linearGradient>
<linearGradient id="ho68" gradientUnits="userSpaceOnUse" x1="1087.5" x2="1615.0" y1="0" y2="0"><stop offset="0.000" stop-color="#00778f"/><stop offset="0.251" stop-color="#008ab2"/><stop offset="0.331" stop-color="#5c85b2"/><stop offset="0.400" stop-color="#b07caf"/><stop offset="0.434" stop-color="#ae5d87"/><stop offset="0.474" stop-color="#ab4468"/><stop offset="0.526" stop-color="#a82f4c"/><stop offset="0.583" stop-color="#a61f37"/><stop offset="0.674" stop-color="#a60e22"/><stop offset="0.777" stop-color="#8b000f"/><stop offset="0.891" stop-color="#690004"/><stop offset="1.000" stop-color="#520000"/></linearGradient>
<linearGradient id="ho69" gradientUnits="userSpaceOnUse" x1="1089.1" x2="1618.4" y1="0" y2="0"><stop offset="0.000" stop-color="#007390"/><stop offset="0.244" stop-color="#0083b2"/><stop offset="0.347" stop-color="#747ab2"/><stop offset="0.398" stop-color="#af71ac"/><stop offset="0.432" stop-color="#ad5586"/><stop offset="0.472" stop-color="#aa3e67"/><stop offset="0.523" stop-color="#a72a4c"/><stop offset="0.580" stop-color="#a41b38"/><stop offset="0.670" stop-color="#a30b23"/><stop offset="0.750" stop-color="#8f0013"/><stop offset="0.824" stop-color="#78000a"/><stop offset="0.886" stop-color="#660004"/><stop offset="1.000" stop-color="#500000"/></linearGradient>
<linearGradient id="ho70" gradientUnits="userSpaceOnUse" x1="1090.7" x2="1614.4" y1="0" y2="0"><stop offset="0.000" stop-color="#007091"/><stop offset="0.241" stop-color="#017cb2"/><stop offset="0.345" stop-color="#7272b2"/><stop offset="0.397" stop-color="#ae6aaf"/><stop offset="0.402" stop-color="#ae65a8"/><stop offset="0.437" stop-color="#ac4c83"/><stop offset="0.477" stop-color="#a93766"/><stop offset="0.523" stop-color="#a5264e"/><stop offset="0.580" stop-color="#a21839"/><stop offset="0.672" stop-color="#a20824"/><stop offset="0.730" stop-color="#930018"/><stop offset="0.822" stop-color="#78000b"/><stop offset="0.897" stop-color="#630005"/><stop offset="1.000" stop-color="#4f0000"/></linearGradient>
<linearGradient id="ho71" gradientUnits="userSpaceOnUse" x1="1092.4" x2="1602.1" y1="0" y2="0"><stop offset="0.000" stop-color="#006c92"/><stop offset="0.237" stop-color="#0075b2"/><stop offset="0.243" stop-color="#0375b2"/><stop offset="0.349" stop-color="#716ab2"/><stop offset="0.402" stop-color="#aa61ae"/><stop offset="0.408" stop-color="#ae5fab"/><stop offset="0.438" stop-color="#ab4a8b"/><stop offset="0.479" stop-color="#a8356b"/><stop offset="0.527" stop-color="#a42452"/><stop offset="0.580" stop-color="#a0173d"/><stop offset="0.686" stop-color="#a00525"/><stop offset="0.728" stop-color="#96001d"/><stop offset="0.822" stop-color="#7a000e"/><stop offset="0.917" stop-color="#610005"/><stop offset="1.000" stop-color="#510001"/></linearGradient>
<linearGradient id="ho72" gradientUnits="userSpaceOnUse" x1="1094.1" x2="1589.8" y1="0" y2="0"><stop offset="0.000" stop-color="#006892"/><stop offset="0.242" stop-color="#026eb2"/><stop offset="0.358" stop-color="#7462b2"/><stop offset="0.412" stop-color="#ab59ae"/><stop offset="0.418" stop-color="#ad55a9"/><stop offset="0.455" stop-color="#aa3f85"/><stop offset="0.491" stop-color="#a72f6b"/><stop offset="0.539" stop-color="#a31f52"/><stop offset="0.594" stop-color="#9e133e"/><stop offset="0.703" stop-color="#9e0226"/><stop offset="0.836" stop-color="#79000f"/><stop offset="0.939" stop-color="#5e0006"/><stop offset="1.000" stop-color="#540003"/></linearGradient>
<linearGradient id="ho73" gradientUnits="userSpaceOnUse" x1="1095.8" x2="1577.5" y1="0" y2="0"><stop offset="0.000" stop-color="#006493"/><stop offset="0.238" stop-color="#0068b2"/><stop offset="0.362" stop-color="#735bb2"/><stop offset="0.425" stop-color="#ad4fab"/><stop offset="0.462" stop-color="#a93a86"/><stop offset="0.500" stop-color="#a62a6c"/><stop offset="0.550" stop-color="#a11c53"/><stop offset="0.606" stop-color="#9c103e"/><stop offset="0.719" stop-color="#9c0027"/><stop offset="0.844" stop-color="#7a0011"/><stop offset="1.000" stop-color="#560004"/></linearGradient>
<linearGradient id="ho74" gradientUnits="userSpaceOnUse" x1="1097.7" x2="1565.1" y1="0" y2="0"><stop offset="0.000" stop-color="#006094"/><stop offset="0.239" stop-color="#0062b2"/><stop offset="0.368" stop-color="#7254b2"/><stop offset="0.432" stop-color="#ac49ac"/><stop offset="0.471" stop-color="#a93588"/><stop offset="0.510" stop-color="#a5266e"/><stop offset="0.561" stop-color="#a01854"/><stop offset="0.619" stop-color="#9a0c3f"/><stop offset="0.710" stop-color="#9a002c"/><stop offset="0.735" stop-color="#980027"/><stop offset="0.852" stop-color="#7a0013"/><stop offset="1.000" stop-color="#580006"/></linearGradient>
<linearGradient id="ho75" gradientUnits="userSpaceOnUse" x1="1099.7" x2="1552.8" y1="0" y2="0"><stop offset="0.000" stop-color="#005c95"/><stop offset="0.238" stop-color="#005cb2"/><stop offset="0.377" stop-color="#754db2"/><stop offset="0.444" stop-color="#ac41ab"/><stop offset="0.483" stop-color="#a82e87"/><stop offset="0.523" stop-color="#a4216d"/><stop offset="0.576" stop-color="#9f1454"/><stop offset="0.636" stop-color="#990940"/><stop offset="0.702" stop-color="#990032"/><stop offset="0.755" stop-color="#960028"/><stop offset="0.868" stop-color="#7a0015"/><stop offset="1.000" stop-color="#5b0008"/></linearGradient>
<linearGradient id="ho76" gradientUnits="userSpaceOnUse" x1="1101.7" x2="1540.5" y1="0" y2="0"><stop offset="0.000" stop-color="#005996"/><stop offset="0.240" stop-color="#0157b2"/><stop offset="0.384" stop-color="#7446b2"/><stop offset="0.452" stop-color="#ab3aac"/><stop offset="0.493" stop-color="#a82989"/><stop offset="0.534" stop-color="#a41d6f"/><stop offset="0.582" stop-color="#a01159"/><stop offset="0.644" stop-color="#9a0743"/><stop offset="0.692" stop-color="#990038"/><stop offset="0.774" stop-color="#940029"/><stop offset="0.877" stop-color="#7c0017"/><stop offset="1.000" stop-color="#60000b"/></linearGradient>
<linearGradient id="ho77" gradientUnits="userSpaceOnUse" x1="1103.8" x2="1528.2" y1="0" y2="0"><stop offset="0.000" stop-color="#005597"/><stop offset="0.234" stop-color="#0052b2"/><stop offset="0.397" stop-color="#793fb2"/><stop offset="0.461" stop-color="#a934ac"/><stop offset="0.468" stop-color="#ac32a8"/><stop offset="0.504" stop-color="#a8248b"/><stop offset="0.546" stop-color="#a41871"/><stop offset="0.596" stop-color="#a00e5a"/><stop offset="0.652" stop-color="#9b0547"/><stop offset="0.688" stop-color="#99003e"/><stop offset="0.801" stop-color="#920028"/><stop offset="0.894" stop-color="#7c0019"/><stop offset="1.000" stop-color="#65000e"/></linearGradient>
<linearGradient id="ho78" gradientUnits="userSpaceOnUse" x1="1105.9" x2="1515.8" y1="0" y2="0"><stop offset="0.000" stop-color="#005198"/><stop offset="0.235" stop-color="#004cb2"/><stop offset="0.404" stop-color="#7839b2"/><stop offset="0.478" stop-color="#ac2caa"/><stop offset="0.515" stop-color="#a9208d"/><stop offset="0.559" stop-color="#a51473"/><stop offset="0.610" stop-color="#a00a5c"/><stop offset="0.662" stop-color="#9b024b"/><stop offset="0.728" stop-color="#96003a"/><stop offset="0.824" stop-color="#900029"/><stop offset="1.000" stop-color="#6a0011"/></linearGradient>
<linearGradient id="ho79" gradientUnits="userSpaceOnUse" x1="1108.0" x2="1503.5" y1="0" y2="0"><stop offset="0.000" stop-color="#004d99"/><stop offset="0.237" stop-color="#0147b2"/><stop offset="0.412" stop-color="#7833b2"/><stop offset="0.489" stop-color="#ac26ac"/><stop offset="0.534" stop-color="#a8198a"/><stop offset="0.580" stop-color="#a40e71"/><stop offset="0.664" stop-color="#9d0151"/><stop offset="0.695" stop-color="#990047"/><stop offset="0.847" stop-color="#8f002a"/><stop offset="1.000" stop-color="#6f0014"/></linearGradient>
<linearGradient id="ho80" gradientUnits="userSpaceOnUse" x1="1110.2" x2="1491.2" y1="0" y2="0"><stop offset="0.000" stop-color="#004a9b"/><stop offset="0.230" stop-color="#0043b2"/><stop offset="0.421" stop-color="#772db2"/><stop offset="0.500" stop-color="#aa20ac"/><stop offset="0.508" stop-color="#ab1ea8"/><stop offset="0.548" stop-color="#a8148c"/><stop offset="0.595" stop-color="#a40a73"/><stop offset="0.659" stop-color="#9f005a"/><stop offset="0.706" stop-color="#98004a"/><stop offset="0.778" stop-color="#93003a"/><stop offset="0.873" stop-color="#8e002a"/><stop offset="1.000" stop-color="#740018"/></linearGradient>
<linearGradient id="ho81" gradientUnits="userSpaceOnUse" x1="1112.4" x2="1478.8" y1="0" y2="0"><stop offset="0.000" stop-color="#00469c"/><stop offset="0.230" stop-color="#003eb2"/><stop offset="0.434" stop-color="#7a27b2"/><stop offset="0.516" stop-color="#ab1aac"/><stop offset="0.557" stop-color="#a91090"/><stop offset="0.598" stop-color="#a5087a"/><stop offset="0.648" stop-color="#a10066"/><stop offset="0.713" stop-color="#99004f"/><stop offset="0.787" stop-color="#92003d"/><stop offset="0.902" stop-color="#8c002b"/><stop offset="1.000" stop-color="#79001c"/></linearGradient>
<linearGradient id="ho82" gradientUnits="userSpaceOnUse" x1="1114.5" x2="1466.5" y1="0" y2="0"><stop offset="0.000" stop-color="#00429d"/><stop offset="0.231" stop-color="#0039b2"/><stop offset="0.444" stop-color="#7922b2"/><stop offset="0.530" stop-color="#aa14ac"/><stop offset="0.538" stop-color="#ab12a8"/><stop offset="0.615" stop-color="#a5047c"/><stop offset="0.641" stop-color="#a30071"/><stop offset="0.726" stop-color="#990052"/><stop offset="0.803" stop-color="#91003f"/><stop offset="0.932" stop-color="#8b002c"/><stop offset="1.000" stop-color="#7e0021"/></linearGradient>
<linearGradient id="ho83" gradientUnits="userSpaceOnUse" x1="1116.6" x2="1454.2" y1="0" y2="0"><stop offset="0.000" stop-color="#003e9e"/><stop offset="0.232" stop-color="#0135b2"/><stop offset="0.455" stop-color="#791cb2"/><stop offset="0.554" stop-color="#ab0daa"/><stop offset="0.625" stop-color="#a60082"/><stop offset="0.643" stop-color="#a40079"/><stop offset="0.741" stop-color="#980055"/><stop offset="0.830" stop-color="#900040"/><stop offset="0.964" stop-color="#8a002c"/><stop offset="1.000" stop-color="#830027"/></linearGradient>
<linearGradient id="ho84" gradientUnits="userSpaceOnUse" x1="1118.7" x2="1441.9" y1="0" y2="0"><stop offset="0.000" stop-color="#003b9f"/><stop offset="0.224" stop-color="#0031b2"/><stop offset="0.467" stop-color="#7817b2"/><stop offset="0.570" stop-color="#ac08ab"/><stop offset="0.607" stop-color="#a90196"/><stop offset="0.654" stop-color="#a4007e"/><stop offset="0.757" stop-color="#980058"/><stop offset="0.841" stop-color="#8f0044"/><stop offset="1.000" stop-color="#88002d"/></linearGradient>
<linearGradient id="ho85" gradientUnits="userSpaceOnUse" x1="1120.8" x2="1429.5" y1="0" y2="0"><stop offset="0.000" stop-color="#0037a0"/><stop offset="0.225" stop-color="#002cb2"/><stop offset="0.490" stop-color="#7d11b2"/><stop offset="0.588" stop-color="#aa02ac"/><stop offset="0.676" stop-color="#a2007e"/><stop offset="0.765" stop-color="#99005f"/><stop offset="0.863" stop-color="#8e0046"/><stop offset="1.000" stop-color="#880032"/></linearGradient>
<linearGradient id="ho86" gradientUnits="userSpaceOnUse" x1="1122.9" x2="1417.2" y1="0" y2="0"><stop offset="0.000" stop-color="#0033a1"/><stop offset="0.224" stop-color="#0028b2"/><stop offset="0.500" stop-color="#7a0cb2"/><stop offset="0.582" stop-color="#9d00ad"/><stop offset="0.612" stop-color="#aa00aa"/><stop offset="0.694" stop-color="#a20081"/><stop offset="0.786" stop-color="#980061"/><stop offset="0.898" stop-color="#8d0046"/><stop offset="1.000" stop-color="#880037"/></linearGradient>
<linearGradient id="ho87" gradientUnits="userSpaceOnUse" x1="1125.0" x2="1404.9" y1="0" y2="0"><stop offset="0.000" stop-color="#002fa2"/><stop offset="0.226" stop-color="#0124b2"/><stop offset="0.527" stop-color="#7e05b2"/><stop offset="0.570" stop-color="#8f00af"/><stop offset="0.634" stop-color="#a700a9"/><stop offset="0.720" stop-color="#a00082"/><stop offset="0.796" stop-color="#990068"/><stop offset="0.903" stop-color="#8e004d"/><stop offset="1.000" stop-color="#89003d"/></linearGradient>
<linearGradient id="ho88" gradientUnits="userSpaceOnUse" x1="1127.3" x2="1392.6" y1="0" y2="0"><stop offset="0.000" stop-color="#002ca3"/><stop offset="0.216" stop-color="#0021b2"/><stop offset="0.545" stop-color="#7d00b2"/><stop offset="0.670" stop-color="#a700a5"/><stop offset="0.739" stop-color="#a00086"/><stop offset="0.818" stop-color="#99006b"/><stop offset="0.909" stop-color="#900054"/><stop offset="1.000" stop-color="#890043"/></linearGradient>
<linearGradient id="ho89" gradientUnits="userSpaceOnUse" x1="1129.6" x2="1380.2" y1="0" y2="0"><stop offset="0.000" stop-color="#0028a4"/><stop offset="0.217" stop-color="#001db2"/><stop offset="0.518" stop-color="#6b00b2"/><stop offset="0.699" stop-color="#a500a4"/><stop offset="0.759" stop-color="#a0008b"/><stop offset="0.831" stop-color="#990072"/><stop offset="1.000" stop-color="#8a004b"/></linearGradient>
<linearGradient id="ho90" gradientUnits="userSpaceOnUse" x1="1132.1" x2="1367.9" y1="0" y2="0"><stop offset="0.000" stop-color="#0024a5"/><stop offset="0.218" stop-color="#0219b2"/><stop offset="0.500" stop-color="#5e00b2"/><stop offset="0.590" stop-color="#7b00af"/><stop offset="0.731" stop-color="#a300a4"/><stop offset="0.859" stop-color="#990076"/><stop offset="1.000" stop-color="#8d0054"/></linearGradient>
<linearGradient id="ho91" gradientUnits="userSpaceOnUse" x1="1134.6" x2="1355.6" y1="0" y2="0"><stop offset="0.000" stop-color="#0020a6"/><stop offset="0.205" stop-color="#0016b2"/><stop offset="0.466" stop-color="#4e00b2"/><stop offset="0.630" stop-color="#7e00ad"/><stop offset="0.767" stop-color="#a100a2"/><stop offset="0.877" stop-color="#9a007d"/><stop offset="1.000" stop-color="#90005f"/></linearGradient>
<linearGradient id="ho92" gradientUnits="userSpaceOnUse" x1="1137.2" x2="1343.2" y1="0" y2="0"><stop offset="0.000" stop-color="#001ca7"/><stop offset="0.206" stop-color="#0112b2"/><stop offset="0.441" stop-color="#4200b2"/><stop offset="0.662" stop-color="#7c00ac"/><stop offset="0.809" stop-color="#9f00a1"/><stop offset="0.912" stop-color="#990081"/><stop offset="1.000" stop-color="#93006b"/></linearGradient>
<linearGradient id="ho93" gradientUnits="userSpaceOnUse" x1="1139.8" x2="1330.9" y1="0" y2="0"><stop offset="0.000" stop-color="#0018a8"/><stop offset="0.190" stop-color="#000fb2"/><stop offset="0.397" stop-color="#3300b2"/><stop offset="0.683" stop-color="#7800ab"/><stop offset="0.873" stop-color="#9e009d"/><stop offset="1.000" stop-color="#960079"/></linearGradient>
<linearGradient id="ho94" gradientUnits="userSpaceOnUse" x1="1142.4" x2="1318.6" y1="0" y2="0"><stop offset="0.000" stop-color="#0014aa"/><stop offset="0.190" stop-color="#010bb2"/><stop offset="0.345" stop-color="#2500b2"/><stop offset="0.741" stop-color="#7a00a9"/><stop offset="0.931" stop-color="#9d009c"/><stop offset="1.000" stop-color="#990089"/></linearGradient>
<linearGradient id="ho95" gradientUnits="userSpaceOnUse" x1="1145.0" x2="1306.3" y1="0" y2="0"><stop offset="0.000" stop-color="#0010ab"/><stop offset="0.170" stop-color="#0008b2"/><stop offset="0.189" stop-color="#0307b2"/><stop offset="0.302" stop-color="#1b00b2"/><stop offset="0.774" stop-color="#7600a8"/><stop offset="1.000" stop-color="#9c009b"/></linearGradient>
<linearGradient id="ho96" gradientUnits="userSpaceOnUse" x1="1147.8" x2="1293.9" y1="0" y2="0"><stop offset="0.000" stop-color="#000bac"/><stop offset="0.167" stop-color="#0004b2"/><stop offset="0.229" stop-color="#0d00b2"/><stop offset="0.833" stop-color="#7500a7"/><stop offset="1.000" stop-color="#8e009e"/></linearGradient>
<linearGradient id="ho97" gradientUnits="userSpaceOnUse" x1="1150.7" x2="1281.6" y1="0" y2="0"><stop offset="0.000" stop-color="#0007ad"/><stop offset="0.163" stop-color="#0300b2"/><stop offset="1.000" stop-color="#8000a1"/></linearGradient>
<linearGradient id="ho98" gradientUnits="userSpaceOnUse" x1="1153.8" x2="1269.3" y1="0" y2="0"><stop offset="0.000" stop-color="#0002ae"/><stop offset="0.132" stop-color="#0100b1"/><stop offset="1.000" stop-color="#7300a4"/></linearGradient>
<linearGradient id="ho99" gradientUnits="userSpaceOnUse" x1="1157.0" x2="1257.0" y1="0" y2="0"><stop offset="0.000" stop-color="#0000ad"/><stop offset="0.091" stop-color="#0000af"/><stop offset="1.000" stop-color="#6500a4"/></linearGradient>
<linearGradient id="ho100" gradientUnits="userSpaceOnUse" x1="1160.5" x2="1244.6" y1="0" y2="0"><stop offset="0.000" stop-color="#0000ad"/><stop offset="0.071" stop-color="#0200ad"/><stop offset="1.000" stop-color="#5700a4"/></linearGradient>
<linearGradient id="ho101" gradientUnits="userSpaceOnUse" x1="1164.5" x2="1232.1" y1="0" y2="0"><stop offset="0.000" stop-color="#0200ab"/><stop offset="1.000" stop-color="#4a00a4"/></linearGradient>
<linearGradient id="ho102" gradientUnits="userSpaceOnUse" x1="1169.7" x2="1218.8" y1="0" y2="0"><stop offset="0.000" stop-color="#0a00aa"/><stop offset="1.000" stop-color="#3d00a4"/></linearGradient>
<linearGradient id="ho103" gradientUnits="userSpaceOnUse" x1="1178.9" x2="1203.5" y1="0" y2="0"><stop offset="0.000" stop-color="#1500a8"/><stop offset="1.000" stop-color="#2e00a5"/></linearGradient>
<linearGradient id="ho104" gradientUnits="userSpaceOnUse" x1="1178.9" x2="1203.5" y1="0" y2="0"><stop offset="0.000" stop-color="#1700a6"/><stop offset="1.000" stop-color="#2f00a3"/></linearGradient>
<linearGradient id="ho105" gradientUnits="userSpaceOnUse" x1="1178.9" x2="1203.5" y1="0" y2="0"><stop offset="0.000" stop-color="#1700a6"/><stop offset="1.000" stop-color="#2f00a3"/></linearGradient>
<linearGradient id="hi0" gradientUnits="userSpaceOnUse" x1="1279.7" x2="1294.7" y1="0" y2="0"><stop offset="0.000" stop-color="#00ff00"/><stop offset="0.500" stop-color="#00ff00"/><stop offset="1.000" stop-color="#0bff00"/></linearGradient>
<linearGradient id="hi1" gradientUnits="userSpaceOnUse" x1="1279.7" x2="1294.7" y1="0" y2="0"><stop offset="0.000" stop-color="#00ff02"/><stop offset="0.500" stop-color="#00ff00"/><stop offset="1.000" stop-color="#0eff00"/></linearGradient>
<linearGradient id="hi2" gradientUnits="userSpaceOnUse" x1="1278.5" x2="1300.2" y1="0" y2="0"><stop offset="0.000" stop-color="#00ff06"/><stop offset="0.429" stop-color="#04ff01"/><stop offset="1.000" stop-color="#1aff00"/></linearGradient>
<linearGradient id="hi3" gradientUnits="userSpaceOnUse" x1="1277.2" x2="1306.4" y1="0" y2="0"><stop offset="0.000" stop-color="#00ff0a"/><stop offset="0.222" stop-color="#00ff07"/><stop offset="0.667" stop-color="#17ff00"/><stop offset="1.000" stop-color="#28ff00"/></linearGradient>
<linearGradient id="hi4" gradientUnits="userSpaceOnUse" x1="1275.8" x2="1312.7" y1="0" y2="0"><stop offset="0.000" stop-color="#00ff0e"/><stop offset="0.250" stop-color="#04ff0a"/><stop offset="0.750" stop-color="#26ff00"/><stop offset="1.000" stop-color="#36ff00"/></linearGradient>
<linearGradient id="hi5" gradientUnits="userSpaceOnUse" x1="1274.4" x2="1318.9" y1="0" y2="0"><stop offset="0.000" stop-color="#00ff12"/><stop offset="0.214" stop-color="#04ff0e"/><stop offset="0.786" stop-color="#33ff00"/><stop offset="1.000" stop-color="#44ff00"/></linearGradient>
<linearGradient id="hi6" gradientUnits="userSpaceOnUse" x1="1273.0" x2="1325.1" y1="0" y2="0"><stop offset="0.000" stop-color="#00ff16"/><stop offset="0.176" stop-color="#04ff12"/><stop offset="0.824" stop-color="#42ff00"/><stop offset="1.000" stop-color="#53ff00"/></linearGradient>
<linearGradient id="hi7" gradientUnits="userSpaceOnUse" x1="1271.7" x2="1331.4" y1="0" y2="0"><stop offset="0.000" stop-color="#00ff1a"/><stop offset="0.158" stop-color="#04ff16"/><stop offset="0.842" stop-color="#50ff00"/><stop offset="1.000" stop-color="#62ff00"/></linearGradient>
<linearGradient id="hi8" gradientUnits="userSpaceOnUse" x1="1270.3" x2="1337.6" y1="0" y2="0"><stop offset="0.000" stop-color="#00ff1e"/><stop offset="0.136" stop-color="#04ff1a"/><stop offset="0.864" stop-color="#60ff00"/><stop offset="1.000" stop-color="#72ff00"/></linearGradient>
<linearGradient id="hi9" gradientUnits="userSpaceOnUse" x1="1268.9" x2="1343.9" y1="0" y2="0"><stop offset="0.000" stop-color="#00ff22"/><stop offset="0.125" stop-color="#04ff1e"/><stop offset="0.875" stop-color="#70ff00"/><stop offset="1.000" stop-color="#82ff00"/></linearGradient>
<linearGradient id="hi10" gradientUnits="userSpaceOnUse" x1="1267.5" x2="1350.1" y1="0" y2="0"><stop offset="0.000" stop-color="#00ff26"/><stop offset="0.111" stop-color="#04ff22"/><stop offset="0.889" stop-color="#81ff00"/><stop offset="1.000" stop-color="#94ff00"/></linearGradient>
<linearGradient id="hi11" gradientUnits="userSpaceOnUse" x1="1266.1" x2="1356.4" y1="0" y2="0"><stop offset="0.000" stop-color="#00ff2a"/><stop offset="0.100" stop-color="#03ff26"/><stop offset="0.900" stop-color="#93ff00"/><stop offset="1.000" stop-color="#a6ff00"/></linearGradient>
<linearGradient id="hi12" gradientUnits="userSpaceOnUse" x1="1264.8" x2="1362.6" y1="0" y2="0"><stop offset="0.000" stop-color="#00ff2e"/><stop offset="0.094" stop-color="#04ff2a"/><stop offset="0.906" stop-color="#a5ff00"/><stop offset="1.000" stop-color="#b9ff00"/></linearGradient>
<linearGradient id="hi13" gradientUnits="userSpaceOnUse" x1="1263.4" x2="1368.9" y1="0" y2="0"><stop offset="0.000" stop-color="#00ff32"/><stop offset="0.086" stop-color="#04ff2e"/><stop offset="0.543" stop-color="#65ff18"/><stop offset="0.914" stop-color="#b8ff00"/><stop offset="1.000" stop-color="#cdff00"/></linearGradient>
<linearGradient id="hi14" gradientUnits="userSpaceOnUse" x1="1262.0" x2="1375.1" y1="0" y2="0"><stop offset="0.000" stop-color="#00ff36"/><stop offset="0.081" stop-color="#04ff33"/><stop offset="0.649" stop-color="#88ff14"/><stop offset="0.919" stop-color="#cdff00"/><stop offset="1.000" stop-color="#e2ff00"/></linearGradient>
<linearGradient id="hi15" gradientUnits="userSpaceOnUse" x1="1260.6" x2="1381.4" y1="0" y2="0"><stop offset="0.000" stop-color="#00ff3b"/><stop offset="0.075" stop-color="#04ff37"/><stop offset="0.625" stop-color="#8fff18"/><stop offset="0.925" stop-color="#e2ff00"/><stop offset="1.000" stop-color="#f9ff00"/></linearGradient>
<linearGradient id="hi16" gradientUnits="userSpaceOnUse" x1="1259.3" x2="1387.6" y1="0" y2="0"><stop offset="0.000" stop-color="#00ff3f"/><stop offset="0.071" stop-color="#04ff3c"/><stop offset="0.595" stop-color="#93ff1c"/><stop offset="0.929" stop-color="#f9ff00"/><stop offset="0.952" stop-color="#fffd00"/><stop offset="1.000" stop-color="#ffee00"/></linearGradient>
<linearGradient id="hi17" gradientUnits="userSpaceOnUse" x1="1257.9" x2="1393.8" y1="0" y2="0"><stop offset="0.000" stop-color="#00ff44"/><stop offset="0.067" stop-color="#04ff40"/><stop offset="0.556" stop-color="#93ff22"/><stop offset="0.867" stop-color="#faff07"/><stop offset="0.889" stop-color="#fffc05"/><stop offset="1.000" stop-color="#ffda00"/></linearGradient>
<linearGradient id="hi18" gradientUnits="userSpaceOnUse" x1="1256.5" x2="1400.1" y1="0" y2="0"><stop offset="0.000" stop-color="#00ff49"/><stop offset="0.064" stop-color="#04ff45"/><stop offset="0.511" stop-color="#90ff28"/><stop offset="0.809" stop-color="#f9ff0e"/><stop offset="0.830" stop-color="#fffd0c"/><stop offset="0.936" stop-color="#ffd900"/><stop offset="1.000" stop-color="#ffc700"/></linearGradient>
<linearGradient id="hi19" gradientUnits="userSpaceOnUse" x1="1255.1" x2="1406.3" y1="0" y2="0"><stop offset="0.000" stop-color="#00ff4d"/><stop offset="0.060" stop-color="#04ff4a"/><stop offset="0.480" stop-color="#91ff2e"/><stop offset="0.760" stop-color="#faff15"/><stop offset="0.780" stop-color="#fffb13"/><stop offset="0.920" stop-color="#ffcc02"/><stop offset="1.000" stop-color="#ffb700"/></linearGradient>
<linearGradient id="hi20" gradientUnits="userSpaceOnUse" x1="1253.7" x2="1412.6" y1="0" y2="0"><stop offset="0.000" stop-color="#00ff52"/><stop offset="0.058" stop-color="#04ff4f"/><stop offset="0.442" stop-color="#8eff35"/><stop offset="0.731" stop-color="#fffc1a"/><stop offset="0.846" stop-color="#ffd10b"/><stop offset="0.942" stop-color="#ffb600"/><stop offset="1.000" stop-color="#ffa800"/></linearGradient>
<linearGradient id="hi21" gradientUnits="userSpaceOnUse" x1="1252.4" x2="1418.8" y1="0" y2="0"><stop offset="0.000" stop-color="#00ff57"/><stop offset="0.055" stop-color="#04ff54"/><stop offset="0.436" stop-color="#96ff39"/><stop offset="0.673" stop-color="#fbff23"/><stop offset="0.691" stop-color="#fffb20"/><stop offset="0.836" stop-color="#ffc40c"/><stop offset="0.945" stop-color="#ffa700"/><stop offset="1.000" stop-color="#ff9a00"/></linearGradient>
<linearGradient id="hi22" gradientUnits="userSpaceOnUse" x1="1251.0" x2="1425.1" y1="0" y2="0"><stop offset="0.000" stop-color="#00ff5c"/><stop offset="0.052" stop-color="#04ff59"/><stop offset="0.414" stop-color="#97ff3f"/><stop offset="0.638" stop-color="#fdff2a"/><stop offset="0.724" stop-color="#ffdb1b"/><stop offset="0.810" stop-color="#ffbd10"/><stop offset="0.931" stop-color="#ff9d01"/><stop offset="1.000" stop-color="#ff8e00"/></linearGradient>
<linearGradient id="hi23" gradientUnits="userSpaceOnUse" x1="1249.6" x2="1431.3" y1="0" y2="0"><stop offset="0.000" stop-color="#00ff62"/><stop offset="0.050" stop-color="#04ff5e"/><stop offset="0.383" stop-color="#93ff46"/><stop offset="0.600" stop-color="#fcff31"/><stop offset="0.700" stop-color="#ffd51f"/><stop offset="0.783" stop-color="#ffb713"/><stop offset="0.933" stop-color="#ff9001"/><stop offset="1.000" stop-color="#ff8200"/></linearGradient>
<linearGradient id="hi24" gradientUnits="userSpaceOnUse" x1="1248.2" x2="1437.6" y1="0" y2="0"><stop offset="0.000" stop-color="#00ff67"/><stop offset="0.048" stop-color="#04ff64"/><stop offset="0.365" stop-color="#94ff4c"/><stop offset="0.571" stop-color="#feff38"/><stop offset="0.667" stop-color="#ffd325"/><stop offset="0.762" stop-color="#ffb116"/><stop offset="0.937" stop-color="#ff8401"/><stop offset="1.000" stop-color="#ff7800"/></linearGradient>
<linearGradient id="hi25" gradientUnits="userSpaceOnUse" x1="1246.9" x2="1443.8" y1="0" y2="0"><stop offset="0.000" stop-color="#00ff6d"/><stop offset="0.046" stop-color="#04ff6a"/><stop offset="0.338" stop-color="#91ff53"/><stop offset="0.538" stop-color="#fdff40"/><stop offset="0.646" stop-color="#ffcc29"/><stop offset="0.738" stop-color="#ffab1a"/><stop offset="0.938" stop-color="#ff7901"/><stop offset="1.000" stop-color="#fe6d00"/></linearGradient>
<linearGradient id="hi26" gradientUnits="userSpaceOnUse" x1="1245.5" x2="1450.1" y1="0" y2="0"><stop offset="0.000" stop-color="#00ff72"/><stop offset="0.044" stop-color="#04ff6f"/><stop offset="0.324" stop-color="#92ff5a"/><stop offset="0.515" stop-color="#ffff47"/><stop offset="0.603" stop-color="#ffd031"/><stop offset="0.706" stop-color="#ffa91f"/><stop offset="0.809" stop-color="#ff8c11"/><stop offset="0.941" stop-color="#ff6f01"/><stop offset="1.000" stop-color="#f96200"/></linearGradient>
<linearGradient id="hi27" gradientUnits="userSpaceOnUse" x1="1244.1" x2="1456.3" y1="0" y2="0"><stop offset="0.000" stop-color="#00ff78"/><stop offset="0.043" stop-color="#04ff75"/><stop offset="0.314" stop-color="#96ff60"/><stop offset="0.486" stop-color="#fdff4f"/><stop offset="0.586" stop-color="#ffca35"/><stop offset="0.686" stop-color="#ffa422"/><stop offset="0.800" stop-color="#ff8312"/><stop offset="0.929" stop-color="#ff6803"/><stop offset="1.000" stop-color="#f55800"/></linearGradient>
<linearGradient id="hi28" gradientUnits="userSpaceOnUse" x1="1242.7" x2="1462.5" y1="0" y2="0"><stop offset="0.000" stop-color="#00ff7e"/><stop offset="0.041" stop-color="#04ff7b"/><stop offset="0.288" stop-color="#8fff68"/><stop offset="0.466" stop-color="#fffe56"/><stop offset="0.562" stop-color="#ffc83b"/><stop offset="0.671" stop-color="#ff9d25"/><stop offset="0.781" stop-color="#ff7e14"/><stop offset="0.904" stop-color="#ff6406"/><stop offset="1.000" stop-color="#f04f00"/></linearGradient>
<linearGradient id="hi29" gradientUnits="userSpaceOnUse" x1="1241.3" x2="1468.8" y1="0" y2="0"><stop offset="0.000" stop-color="#00ff84"/><stop offset="0.027" stop-color="#00ff83"/><stop offset="0.040" stop-color="#05ff82"/><stop offset="0.280" stop-color="#93ff6f"/><stop offset="0.440" stop-color="#feff5f"/><stop offset="0.533" stop-color="#ffc842"/><stop offset="0.653" stop-color="#ff9828"/><stop offset="0.760" stop-color="#ff7a17"/><stop offset="0.880" stop-color="#ff6009"/><stop offset="1.000" stop-color="#eb4700"/></linearGradient>
<linearGradient id="hi30" gradientUnits="userSpaceOnUse" x1="1240.0" x2="1475.0" y1="0" y2="0"><stop offset="0.000" stop-color="#00ff8b"/><stop offset="0.038" stop-color="#04ff88"/><stop offset="0.256" stop-color="#8cff78"/><stop offset="0.423" stop-color="#fffd66"/><stop offset="0.474" stop-color="#ffdb53"/><stop offset="0.526" stop-color="#ffbf44"/><stop offset="0.641" stop-color="#ff912a"/><stop offset="0.744" stop-color="#ff741a"/><stop offset="0.859" stop-color="#ff5c0b"/><stop offset="0.949" stop-color="#f04801"/><stop offset="1.000" stop-color="#e73f00"/></linearGradient>
<linearGradient id="hi31" gradientUnits="userSpaceOnUse" x1="1238.6" x2="1481.3" y1="0" y2="0"><stop offset="0.000" stop-color="#00ff91"/><stop offset="0.025" stop-color="#00ff90"/><stop offset="0.037" stop-color="#05ff8f"/><stop offset="0.250" stop-color="#90ff7f"/><stop offset="0.400" stop-color="#ffff70"/><stop offset="0.450" stop-color="#ffdc5c"/><stop offset="0.500" stop-color="#ffbf4b"/><stop offset="0.625" stop-color="#ff8c2e"/><stop offset="0.725" stop-color="#ff701d"/><stop offset="0.838" stop-color="#ff580e"/><stop offset="0.950" stop-color="#eb4001"/><stop offset="1.000" stop-color="#e23700"/></linearGradient>
<linearGradient id="hi32" gradientUnits="userSpaceOnUse" x1="1237.2" x2="1487.5" y1="0" y2="0"><stop offset="0.000" stop-color="#00ff98"/><stop offset="0.024" stop-color="#00ff97"/><stop offset="0.036" stop-color="#05ff96"/><stop offset="0.229" stop-color="#89ff88"/><stop offset="0.386" stop-color="#fffc77"/><stop offset="0.434" stop-color="#ffd962"/><stop offset="0.482" stop-color="#ffbd51"/><stop offset="0.602" stop-color="#ff8a32"/><stop offset="0.699" stop-color="#ff6e21"/><stop offset="0.819" stop-color="#ff5410"/><stop offset="0.952" stop-color="#e63901"/><stop offset="1.000" stop-color="#dd3100"/></linearGradient>
<linearGradient id="hi33" gradientUnits="userSpaceOnUse" x1="1235.8" x2="1493.8" y1="0" y2="0"><stop offset="0.000" stop-color="#00ff9f"/><stop offset="0.024" stop-color="#00ff9e"/><stop offset="0.035" stop-color="#05ff9d"/><stop offset="0.235" stop-color="#96ff8e"/><stop offset="0.365" stop-color="#fffe82"/><stop offset="0.412" stop-color="#ffda6b"/><stop offset="0.459" stop-color="#ffbd59"/><stop offset="0.518" stop-color="#ffa047"/><stop offset="0.588" stop-color="#ff8535"/><stop offset="0.682" stop-color="#ff6a23"/><stop offset="0.800" stop-color="#ff5013"/><stop offset="0.953" stop-color="#e23201"/><stop offset="1.000" stop-color="#d92b00"/></linearGradient>
<linearGradient id="hi34" gradientUnits="userSpaceOnUse" x1="1234.5" x2="1500.0" y1="0" y2="0"><stop offset="0.000" stop-color="#00ffa6"/><stop offset="0.023" stop-color="#00ffa5"/><stop offset="0.034" stop-color="#05ffa4"/><stop offset="0.205" stop-color="#86ff98"/><stop offset="0.341" stop-color="#f9ff8d"/><stop offset="0.352" stop-color="#fffb89"/><stop offset="0.398" stop-color="#ffd771"/><stop offset="0.455" stop-color="#ffb45a"/><stop offset="0.511" stop-color="#ff9948"/><stop offset="0.580" stop-color="#ff7f37"/><stop offset="0.670" stop-color="#ff6526"/><stop offset="0.784" stop-color="#ff4c15"/><stop offset="0.955" stop-color="#dd2b01"/><stop offset="1.000" stop-color="#d42500"/></linearGradient>
<linearGradient id="hi35" gradientUnits="userSpaceOnUse" x1="1233.1" x2="1506.3" y1="0" y2="0"><stop offset="0.000" stop-color="#00ffae"/><stop offset="0.022" stop-color="#00ffac"/><stop offset="0.033" stop-color="#05ffac"/><stop offset="0.209" stop-color="#91ffa0"/><stop offset="0.330" stop-color="#fdff96"/><stop offset="0.385" stop-color="#ffd378"/><stop offset="0.429" stop-color="#ffb764"/><stop offset="0.495" stop-color="#ff964d"/><stop offset="0.560" stop-color="#ff7d3c"/><stop offset="0.659" stop-color="#ff6028"/><stop offset="0.769" stop-color="#fe4817"/><stop offset="0.923" stop-color="#df2a04"/><stop offset="1.000" stop-color="#d02000"/></linearGradient>
<linearGradient id="hi36" gradientUnits="userSpaceOnUse" x1="1231.7" x2="1512.5" y1="0" y2="0"><stop offset="0.000" stop-color="#00ffb5"/><stop offset="0.022" stop-color="#00ffb4"/><stop offset="0.032" stop-color="#05ffb4"/><stop offset="0.204" stop-color="#95ffa9"/><stop offset="0.312" stop-color="#faffa0"/><stop offset="0.323" stop-color="#fffa9c"/><stop offset="0.366" stop-color="#ffd481"/><stop offset="0.419" stop-color="#ffb168"/><stop offset="0.484" stop-color="#ff9151"/><stop offset="0.559" stop-color="#ff743c"/><stop offset="0.645" stop-color="#ff5c2a"/><stop offset="0.753" stop-color="#ff4519"/><stop offset="0.903" stop-color="#df2806"/><stop offset="1.000" stop-color="#cb1b00"/></linearGradient>
<linearGradient id="hi37" gradientUnits="userSpaceOnUse" x1="1230.3" x2="1518.8" y1="0" y2="0"><stop offset="0.000" stop-color="#00ffbd"/><stop offset="0.021" stop-color="#00ffbc"/><stop offset="0.031" stop-color="#05ffbc"/><stop offset="0.198" stop-color="#97ffb2"/><stop offset="0.302" stop-color="#feffaa"/><stop offset="0.354" stop-color="#ffd188"/><stop offset="0.406" stop-color="#ffae6d"/><stop offset="0.469" stop-color="#ff8e56"/><stop offset="0.542" stop-color="#ff7240"/><stop offset="0.635" stop-color="#ff572c"/><stop offset="0.740" stop-color="#fe411b"/><stop offset="0.865" stop-color="#e3280a"/><stop offset="1.000" stop-color="#c61600"/></linearGradient>
<linearGradient id="hi38" gradientUnits="userSpaceOnUse" x1="1228.9" x2="1525.0" y1="0" y2="0"><stop offset="0.000" stop-color="#00ffc6"/><stop offset="0.020" stop-color="#00ffc5"/><stop offset="0.031" stop-color="#05ffc4"/><stop offset="0.184" stop-color="#91ffbc"/><stop offset="0.286" stop-color="#faffb5"/><stop offset="0.296" stop-color="#fff8b0"/><stop offset="0.347" stop-color="#ffca8c"/><stop offset="0.398" stop-color="#ffa871"/><stop offset="0.459" stop-color="#ff8959"/><stop offset="0.531" stop-color="#ff6d43"/><stop offset="0.622" stop-color="#ff532f"/><stop offset="0.724" stop-color="#fe3d1d"/><stop offset="0.847" stop-color="#e3260c"/><stop offset="1.000" stop-color="#c21200"/></linearGradient>
<linearGradient id="hi39" gradientUnits="userSpaceOnUse" x1="1227.6" x2="1531.2" y1="0" y2="0"><stop offset="0.000" stop-color="#00ffce"/><stop offset="0.020" stop-color="#00ffce"/><stop offset="0.030" stop-color="#05ffcd"/><stop offset="0.178" stop-color="#94ffc6"/><stop offset="0.277" stop-color="#ffffc0"/><stop offset="0.327" stop-color="#ffce99"/><stop offset="0.376" stop-color="#ffaa7c"/><stop offset="0.436" stop-color="#ff8a61"/><stop offset="0.515" stop-color="#ff6b48"/><stop offset="0.604" stop-color="#ff5132"/><stop offset="0.713" stop-color="#fe391f"/><stop offset="0.842" stop-color="#e1210c"/><stop offset="1.000" stop-color="#bd0e00"/></linearGradient>
<linearGradient id="hi40" gradientUnits="userSpaceOnUse" x1="1226.2" x2="1537.5" y1="0" y2="0"><stop offset="0.000" stop-color="#00ffd7"/><stop offset="0.019" stop-color="#00ffd7"/><stop offset="0.029" stop-color="#05ffd6"/><stop offset="0.165" stop-color="#8effd1"/><stop offset="0.262" stop-color="#fbffcc"/><stop offset="0.272" stop-color="#fff7c5"/><stop offset="0.320" stop-color="#ffc79d"/><stop offset="0.369" stop-color="#ffa47f"/><stop offset="0.437" stop-color="#ff8161"/><stop offset="0.515" stop-color="#ff6348"/><stop offset="0.602" stop-color="#ff4b33"/><stop offset="0.699" stop-color="#fe3621"/><stop offset="0.835" stop-color="#df1d0d"/><stop offset="1.000" stop-color="#b80b00"/></linearGradient>
<linearGradient id="hi41" gradientUnits="userSpaceOnUse" x1="1224.8" x2="1543.7" y1="0" y2="0"><stop offset="0.000" stop-color="#00ffe1"/><stop offset="0.019" stop-color="#00ffe0"/><stop offset="0.028" stop-color="#05ffe0"/><stop offset="0.160" stop-color="#90ffdc"/><stop offset="0.255" stop-color="#fffed7"/><stop offset="0.302" stop-color="#ffcbab"/><stop offset="0.358" stop-color="#ffa185"/><stop offset="0.425" stop-color="#ff7d66"/><stop offset="0.500" stop-color="#ff604c"/><stop offset="0.585" stop-color="#ff4836"/><stop offset="0.679" stop-color="#ff3425"/><stop offset="0.840" stop-color="#da180c"/><stop offset="1.000" stop-color="#b40700"/></linearGradient>
<linearGradient id="hi42" gradientUnits="userSpaceOnUse" x1="1223.4" x2="1550.0" y1="0" y2="0"><stop offset="0.000" stop-color="#00ffea"/><stop offset="0.019" stop-color="#00ffea"/><stop offset="0.028" stop-color="#06ffea"/><stop offset="0.157" stop-color="#95ffe7"/><stop offset="0.241" stop-color="#fcffe5"/><stop offset="0.250" stop-color="#fff6dc"/><stop offset="0.296" stop-color="#ffc5af"/><stop offset="0.352" stop-color="#ff9b89"/><stop offset="0.417" stop-color="#ff7869"/><stop offset="0.491" stop-color="#ff5c4f"/><stop offset="0.574" stop-color="#ff4539"/><stop offset="0.676" stop-color="#fe2f25"/><stop offset="0.833" stop-color="#d7140d"/><stop offset="1.000" stop-color="#af0400"/></linearGradient>
<linearGradient id="hi43" gradientUnits="userSpaceOnUse" x1="1222.1" x2="1556.2" y1="0" y2="0"><stop offset="0.000" stop-color="#00fff4"/><stop offset="0.018" stop-color="#00fff4"/><stop offset="0.027" stop-color="#06fff4"/><stop offset="0.144" stop-color="#8dfff3"/><stop offset="0.234" stop-color="#fffdef"/><stop offset="0.279" stop-color="#ffc9be"/><stop offset="0.333" stop-color="#ff9d94"/><stop offset="0.396" stop-color="#ff7972"/><stop offset="0.477" stop-color="#ff5953"/><stop offset="0.559" stop-color="#ff423d"/><stop offset="0.658" stop-color="#ff2d28"/><stop offset="0.820" stop-color="#d7120e"/><stop offset="1.000" stop-color="#aa0100"/></linearGradient>
<linearGradient id="hi44" gradientUnits="userSpaceOnUse" x1="1220.7" x2="1556.6" y1="0" y2="0"><stop offset="0.000" stop-color="#00ffff"/><stop offset="0.018" stop-color="#00ffff"/><stop offset="0.027" stop-color="#06ffff"/><stop offset="0.144" stop-color="#91ffff"/><stop offset="0.225" stop-color="#fdffff"/><stop offset="0.234" stop-color="#fff4f4"/><stop offset="0.279" stop-color="#ffc1c2"/><stop offset="0.333" stop-color="#ff9798"/><stop offset="0.396" stop-color="#ff7475"/><stop offset="0.477" stop-color="#ff5555"/><stop offset="0.559" stop-color="#ff3e3f"/><stop offset="0.658" stop-color="#ff2a2a"/><stop offset="0.820" stop-color="#d70f10"/><stop offset="1.000" stop-color="#aa0000"/></linearGradient>
<linearGradient id="hi45" gradientUnits="userSpaceOnUse" x1="1219.3" x2="1552.1" y1="0" y2="0"><stop offset="0.000" stop-color="#00f5ff"/><stop offset="0.018" stop-color="#00f5ff"/><stop offset="0.027" stop-color="#06f4ff"/><stop offset="0.145" stop-color="#8df3ff"/><stop offset="0.227" stop-color="#f6f1ff"/><stop offset="0.236" stop-color="#ffedfb"/><stop offset="0.282" stop-color="#ffbcc8"/><stop offset="0.336" stop-color="#ff929c"/><stop offset="0.400" stop-color="#ff7079"/><stop offset="0.482" stop-color="#ff5159"/><stop offset="0.573" stop-color="#ff3940"/><stop offset="0.673" stop-color="#fe262b"/><stop offset="0.836" stop-color="#d60c11"/><stop offset="1.000" stop-color="#ad0001"/></linearGradient>
<linearGradient id="hi46" gradientUnits="userSpaceOnUse" x1="1217.9" x2="1543.1" y1="0" y2="0"><stop offset="0.000" stop-color="#00ebff"/><stop offset="0.019" stop-color="#00eaff"/><stop offset="0.028" stop-color="#06eaff"/><stop offset="0.157" stop-color="#94e7ff"/><stop offset="0.241" stop-color="#fbe4ff"/><stop offset="0.250" stop-color="#ffddf7"/><stop offset="0.296" stop-color="#ffafc6"/><stop offset="0.352" stop-color="#ff899c"/><stop offset="0.417" stop-color="#ff697a"/><stop offset="0.491" stop-color="#ff4f5d"/><stop offset="0.583" stop-color="#ff3743"/><stop offset="0.694" stop-color="#fe222d"/><stop offset="0.852" stop-color="#d80b13"/><stop offset="1.000" stop-color="#b40005"/></linearGradient>
<linearGradient id="hi47" gradientUnits="userSpaceOnUse" x1="1216.5" x2="1534.1" y1="0" y2="0"><stop offset="0.000" stop-color="#00e1ff"/><stop offset="0.019" stop-color="#00e0ff"/><stop offset="0.029" stop-color="#06e0ff"/><stop offset="0.162" stop-color="#91dbff"/><stop offset="0.257" stop-color="#ffd5fc"/><stop offset="0.305" stop-color="#ffa9ca"/><stop offset="0.362" stop-color="#ff83a0"/><stop offset="0.429" stop-color="#ff647d"/><stop offset="0.505" stop-color="#ff4a60"/><stop offset="0.600" stop-color="#ff3346"/><stop offset="0.714" stop-color="#fe1f2f"/><stop offset="0.867" stop-color="#da0916"/><stop offset="1.000" stop-color="#bb0008"/></linearGradient>
<linearGradient id="hi48" gradientUnits="userSpaceOnUse" x1="1215.2" x2="1525.1" y1="0" y2="0"><stop offset="0.000" stop-color="#00d8ff"/><stop offset="0.019" stop-color="#00d7ff"/><stop offset="0.029" stop-color="#05d7ff"/><stop offset="0.165" stop-color="#8dd1ff"/><stop offset="0.262" stop-color="#faccff"/><stop offset="0.272" stop-color="#ffc6f9"/><stop offset="0.320" stop-color="#ff9dc9"/><stop offset="0.369" stop-color="#ff80a6"/><stop offset="0.437" stop-color="#ff6182"/><stop offset="0.515" stop-color="#ff4864"/><stop offset="0.612" stop-color="#ff3149"/><stop offset="0.738" stop-color="#fe1b30"/><stop offset="0.883" stop-color="#dc0818"/><stop offset="1.000" stop-color="#c1000c"/></linearGradient>
<linearGradient id="hi49" gradientUnits="userSpaceOnUse" x1="1213.8" x2="1516.1" y1="0" y2="0"><stop offset="0.000" stop-color="#00cfff"/><stop offset="0.020" stop-color="#00ceff"/><stop offset="0.030" stop-color="#05cdff"/><stop offset="0.170" stop-color="#8bc6ff"/><stop offset="0.280" stop-color="#ffbefd"/><stop offset="0.330" stop-color="#ff97cd"/><stop offset="0.380" stop-color="#ff7aa9"/><stop offset="0.440" stop-color="#ff6089"/><stop offset="0.520" stop-color="#ff466a"/><stop offset="0.630" stop-color="#ff2d4c"/><stop offset="0.760" stop-color="#fe1832"/><stop offset="0.910" stop-color="#dc051a"/><stop offset="1.000" stop-color="#c80010"/></linearGradient>
<linearGradient id="hi50" gradientUnits="userSpaceOnUse" x1="1212.4" x2="1507.1" y1="0" y2="0"><stop offset="0.000" stop-color="#00c6ff"/><stop offset="0.020" stop-color="#00c5ff"/><stop offset="0.031" stop-color="#05c5ff"/><stop offset="0.184" stop-color="#91bcff"/><stop offset="0.286" stop-color="#f9b5ff"/><stop offset="0.296" stop-color="#ffb0fa"/><stop offset="0.347" stop-color="#ff8ccb"/><stop offset="0.398" stop-color="#ff71a9"/><stop offset="0.459" stop-color="#ff598a"/><stop offset="0.541" stop-color="#ff416b"/><stop offset="0.643" stop-color="#ff2b4f"/><stop offset="0.776" stop-color="#ff1636"/><stop offset="0.959" stop-color="#d80019"/><stop offset="1.000" stop-color="#cf0014"/></linearGradient>
<linearGradient id="hi51" gradientUnits="userSpaceOnUse" x1="1211.0" x2="1498.1" y1="0" y2="0"><stop offset="0.000" stop-color="#00beff"/><stop offset="0.021" stop-color="#00bdff"/><stop offset="0.032" stop-color="#05bcff"/><stop offset="0.189" stop-color="#8fb2ff"/><stop offset="0.305" stop-color="#ffa9fe"/><stop offset="0.358" stop-color="#ff86cf"/><stop offset="0.411" stop-color="#ff6cac"/><stop offset="0.474" stop-color="#ff548d"/><stop offset="0.547" stop-color="#ff3f71"/><stop offset="0.663" stop-color="#ff2752"/><stop offset="0.800" stop-color="#ff1338"/><stop offset="0.958" stop-color="#df001e"/><stop offset="1.000" stop-color="#d60019"/></linearGradient>
<linearGradient id="hi52" gradientUnits="userSpaceOnUse" x1="1209.7" x2="1489.1" y1="0" y2="0"><stop offset="0.000" stop-color="#00b6ff"/><stop offset="0.022" stop-color="#00b4ff"/><stop offset="0.032" stop-color="#05b4ff"/><stop offset="0.194" stop-color="#8ba9ff"/><stop offset="0.312" stop-color="#f8a0ff"/><stop offset="0.323" stop-color="#ff9cfb"/><stop offset="0.366" stop-color="#ff81d6"/><stop offset="0.419" stop-color="#ff68b2"/><stop offset="0.484" stop-color="#ff5192"/><stop offset="0.559" stop-color="#ff3c75"/><stop offset="0.677" stop-color="#ff2455"/><stop offset="0.828" stop-color="#ff0f39"/><stop offset="0.957" stop-color="#e50024"/><stop offset="1.000" stop-color="#dc001e"/></linearGradient>
<linearGradient id="hi53" gradientUnits="userSpaceOnUse" x1="1208.3" x2="1480.1" y1="0" y2="0"><stop offset="0.000" stop-color="#00aeff"/><stop offset="0.022" stop-color="#00adff"/><stop offset="0.033" stop-color="#05acff"/><stop offset="0.211" stop-color="#92a0ff"/><stop offset="0.333" stop-color="#ff95ff"/><stop offset="0.378" stop-color="#ff7bd9"/><stop offset="0.433" stop-color="#ff62b5"/><stop offset="0.500" stop-color="#ff4c95"/><stop offset="0.567" stop-color="#ff3a7c"/><stop offset="0.700" stop-color="#ff2057"/><stop offset="0.856" stop-color="#ff0c3b"/><stop offset="0.956" stop-color="#ec002a"/><stop offset="1.000" stop-color="#e30024"/></linearGradient>
<linearGradient id="hi54" gradientUnits="userSpaceOnUse" x1="1206.9" x2="1471.1" y1="0" y2="0"><stop offset="0.000" stop-color="#00a6ff"/><stop offset="0.023" stop-color="#00a5ff"/><stop offset="0.034" stop-color="#05a4ff"/><stop offset="0.216" stop-color="#8e97ff"/><stop offset="0.352" stop-color="#ff89fc"/><stop offset="0.398" stop-color="#ff71d8"/><stop offset="0.455" stop-color="#ff5ab5"/><stop offset="0.523" stop-color="#ff4595"/><stop offset="0.591" stop-color="#ff357c"/><stop offset="0.727" stop-color="#ff1c59"/><stop offset="0.886" stop-color="#ff083c"/><stop offset="1.000" stop-color="#ea002a"/></linearGradient>
<linearGradient id="hi55" gradientUnits="userSpaceOnUse" x1="1205.5" x2="1462.1" y1="0" y2="0"><stop offset="0.000" stop-color="#009fff"/><stop offset="0.024" stop-color="#009eff"/><stop offset="0.035" stop-color="#059dff"/><stop offset="0.235" stop-color="#958eff"/><stop offset="0.365" stop-color="#fe82ff"/><stop offset="0.412" stop-color="#ff6bdb"/><stop offset="0.471" stop-color="#ff55b8"/><stop offset="0.529" stop-color="#ff439d"/><stop offset="0.600" stop-color="#ff3383"/><stop offset="0.741" stop-color="#ff1a5d"/><stop offset="0.918" stop-color="#ff043e"/><stop offset="1.000" stop-color="#f00030"/></linearGradient>
<linearGradient id="hi56" gradientUnits="userSpaceOnUse" x1="1204.2" x2="1453.1" y1="0" y2="0"><stop offset="0.000" stop-color="#0098ff"/><stop offset="0.024" stop-color="#0097ff"/><stop offset="0.037" stop-color="#0596ff"/><stop offset="0.244" stop-color="#9386ff"/><stop offset="0.378" stop-color="#fb79ff"/><stop offset="0.390" stop-color="#ff75f9"/><stop offset="0.439" stop-color="#ff60d7"/><stop offset="0.488" stop-color="#ff4fbb"/><stop offset="0.549" stop-color="#ff3e9f"/><stop offset="0.622" stop-color="#ff2e85"/><stop offset="0.780" stop-color="#ff155d"/><stop offset="0.951" stop-color="#ff0040"/><stop offset="1.000" stop-color="#f70037"/></linearGradient>
<linearGradient id="hi57" gradientUnits="userSpaceOnUse" x1="1202.8" x2="1444.1" y1="0" y2="0"><stop offset="0.000" stop-color="#0091ff"/><stop offset="0.025" stop-color="#0090ff"/><stop offset="0.038" stop-color="#058fff"/><stop offset="0.262" stop-color="#987dff"/><stop offset="0.400" stop-color="#fd70ff"/><stop offset="0.463" stop-color="#ff57d5"/><stop offset="0.513" stop-color="#ff48bb"/><stop offset="0.637" stop-color="#ff2b8a"/><stop offset="0.800" stop-color="#ff1261"/><stop offset="0.950" stop-color="#ff0047"/><stop offset="1.000" stop-color="#fe003f"/></linearGradient>
<linearGradient id="hi58" gradientUnits="userSpaceOnUse" x1="1201.4" x2="1435.1" y1="0" y2="0"><stop offset="0.000" stop-color="#008bff"/><stop offset="0.026" stop-color="#0089ff"/><stop offset="0.039" stop-color="#0588ff"/><stop offset="0.247" stop-color="#8578ff"/><stop offset="0.416" stop-color="#fa67ff"/><stop offset="0.429" stop-color="#ff64fa"/><stop offset="0.481" stop-color="#ff51d8"/><stop offset="0.532" stop-color="#ff42bd"/><stop offset="0.649" stop-color="#ff2990"/><stop offset="0.805" stop-color="#ff1168"/><stop offset="0.948" stop-color="#ff004e"/><stop offset="1.000" stop-color="#ff0046"/></linearGradient>
<linearGradient id="hi59" gradientUnits="userSpaceOnUse" x1="1200.0" x2="1426.1" y1="0" y2="0"><stop offset="0.000" stop-color="#0084ff"/><stop offset="0.040" stop-color="#0482ff"/><stop offset="0.280" stop-color="#926fff"/><stop offset="0.440" stop-color="#fc5eff"/><stop offset="0.547" stop-color="#ff3ec3"/><stop offset="0.667" stop-color="#ff2595"/><stop offset="0.813" stop-color="#ff106e"/><stop offset="0.947" stop-color="#ff0056"/><stop offset="1.000" stop-color="#ff004d"/></linearGradient>
<linearGradient id="hi60" gradientUnits="userSpaceOnUse" x1="1198.6" x2="1417.1" y1="0" y2="0"><stop offset="0.000" stop-color="#007eff"/><stop offset="0.028" stop-color="#007cff"/><stop offset="0.042" stop-color="#057bff"/><stop offset="0.278" stop-color="#8969ff"/><stop offset="0.458" stop-color="#fa57ff"/><stop offset="0.472" stop-color="#ff54fb"/><stop offset="0.569" stop-color="#ff39c6"/><stop offset="0.681" stop-color="#ff239b"/><stop offset="0.819" stop-color="#ff0f76"/><stop offset="0.944" stop-color="#ff005e"/><stop offset="1.000" stop-color="#ff0055"/></linearGradient>
<linearGradient id="hi61" gradientUnits="userSpaceOnUse" x1="1197.3" x2="1408.1" y1="0" y2="0"><stop offset="0.000" stop-color="#0078ff"/><stop offset="0.043" stop-color="#0475ff"/><stop offset="0.314" stop-color="#9560ff"/><stop offset="0.486" stop-color="#fc4eff"/><stop offset="0.600" stop-color="#ff32c5"/><stop offset="0.700" stop-color="#ff1fa0"/><stop offset="0.843" stop-color="#ff0c7b"/><stop offset="0.943" stop-color="#ff0067"/><stop offset="1.000" stop-color="#ff005d"/></linearGradient>
<linearGradient id="hi62" gradientUnits="userSpaceOnUse" x1="1195.9" x2="1399.1" y1="0" y2="0"><stop offset="0.000" stop-color="#0072ff"/><stop offset="0.045" stop-color="#046fff"/><stop offset="0.313" stop-color="#8c5aff"/><stop offset="0.522" stop-color="#ff44fc"/><stop offset="0.612" stop-color="#ff2fce"/><stop offset="0.716" stop-color="#ff1da7"/><stop offset="0.821" stop-color="#ff0e8a"/><stop offset="0.940" stop-color="#ff0070"/><stop offset="1.000" stop-color="#ff0066"/></linearGradient>
<linearGradient id="hi63" gradientUnits="userSpaceOnUse" x1="1194.5" x2="1390.1" y1="0" y2="0"><stop offset="0.000" stop-color="#006cff"/><stop offset="0.046" stop-color="#0469ff"/><stop offset="0.323" stop-color="#8854ff"/><stop offset="0.538" stop-color="#fb3fff"/><stop offset="0.554" stop-color="#ff3cfa"/><stop offset="0.646" stop-color="#ff28ce"/><stop offset="0.738" stop-color="#ff19ac"/><stop offset="0.938" stop-color="#ff007a"/><stop offset="1.000" stop-color="#ff006f"/></linearGradient>
<linearGradient id="hi64" gradientUnits="userSpaceOnUse" x1="1193.1" x2="1381.1" y1="0" y2="0"><stop offset="0.000" stop-color="#0067ff"/><stop offset="0.048" stop-color="#0464ff"/><stop offset="0.355" stop-color="#8f4cff"/><stop offset="0.581" stop-color="#ff35fd"/><stop offset="0.661" stop-color="#ff25d6"/><stop offset="0.758" stop-color="#ff16b3"/><stop offset="0.935" stop-color="#ff0086"/><stop offset="1.000" stop-color="#ff0079"/></linearGradient>
<linearGradient id="hi65" gradientUnits="userSpaceOnUse" x1="1191.8" x2="1372.1" y1="0" y2="0"><stop offset="0.000" stop-color="#0061ff"/><stop offset="0.050" stop-color="#045eff"/><stop offset="0.367" stop-color="#8b47ff"/><stop offset="0.600" stop-color="#fa30ff"/><stop offset="0.617" stop-color="#ff2efb"/><stop offset="0.700" stop-color="#ff1fd6"/><stop offset="0.783" stop-color="#ff13b9"/><stop offset="0.933" stop-color="#ff0091"/><stop offset="1.000" stop-color="#ff0084"/></linearGradient>
<linearGradient id="hi66" gradientUnits="userSpaceOnUse" x1="1190.4" x2="1363.1" y1="0" y2="0"><stop offset="0.000" stop-color="#005cff"/><stop offset="0.053" stop-color="#0459ff"/><stop offset="0.404" stop-color="#913fff"/><stop offset="0.649" stop-color="#ff27fd"/><stop offset="0.719" stop-color="#ff1bdf"/><stop offset="0.807" stop-color="#ff0fc0"/><stop offset="0.930" stop-color="#ff019f"/><stop offset="1.000" stop-color="#ff008f"/></linearGradient>
<linearGradient id="hi67" gradientUnits="userSpaceOnUse" x1="1189.0" x2="1354.1" y1="0" y2="0"><stop offset="0.000" stop-color="#0057ff"/><stop offset="0.055" stop-color="#0454ff"/><stop offset="0.418" stop-color="#8d3aff"/><stop offset="0.691" stop-color="#ff20fc"/><stop offset="0.836" stop-color="#ff0bc6"/><stop offset="0.927" stop-color="#ff00ad"/><stop offset="1.000" stop-color="#ff009c"/></linearGradient>
<linearGradient id="hi68" gradientUnits="userSpaceOnUse" x1="1187.6" x2="1345.1" y1="0" y2="0"><stop offset="0.000" stop-color="#0052ff"/><stop offset="0.058" stop-color="#044eff"/><stop offset="0.462" stop-color="#9432ff"/><stop offset="0.731" stop-color="#ff19fe"/><stop offset="0.827" stop-color="#ff0cda"/><stop offset="0.923" stop-color="#ff01bd"/><stop offset="1.000" stop-color="#ff00aa"/></linearGradient>
<linearGradient id="hi69" gradientUnits="userSpaceOnUse" x1="1186.2" x2="1336.1" y1="0" y2="0"><stop offset="0.000" stop-color="#004dff"/><stop offset="0.061" stop-color="#0449ff"/><stop offset="0.490" stop-color="#932cff"/><stop offset="0.776" stop-color="#ff12ff"/><stop offset="0.918" stop-color="#ff01ce"/><stop offset="1.000" stop-color="#ff00b9"/></linearGradient>
<linearGradient id="hi70" gradientUnits="userSpaceOnUse" x1="1184.9" x2="1327.1" y1="0" y2="0"><stop offset="0.000" stop-color="#0048ff"/><stop offset="0.064" stop-color="#0445ff"/><stop offset="0.532" stop-color="#9626ff"/><stop offset="0.830" stop-color="#ff0bff"/><stop offset="0.915" stop-color="#ff01e2"/><stop offset="1.000" stop-color="#ff00c9"/></linearGradient>
<linearGradient id="hi71" gradientUnits="userSpaceOnUse" x1="1183.5" x2="1318.1" y1="0" y2="0"><stop offset="0.000" stop-color="#0043ff"/><stop offset="0.068" stop-color="#0440ff"/><stop offset="0.568" stop-color="#9620ff"/><stop offset="0.886" stop-color="#fe04ff"/><stop offset="1.000" stop-color="#ff00dc"/></linearGradient>
<linearGradient id="hi72" gradientUnits="userSpaceOnUse" x1="1182.1" x2="1309.1" y1="0" y2="0"><stop offset="0.000" stop-color="#003fff"/><stop offset="0.071" stop-color="#043bff"/><stop offset="0.595" stop-color="#921bff"/><stop offset="0.952" stop-color="#fe00ff"/><stop offset="1.000" stop-color="#ff00f1"/></linearGradient>
<linearGradient id="hi73" gradientUnits="userSpaceOnUse" x1="1180.7" x2="1300.1" y1="0" y2="0"><stop offset="0.000" stop-color="#003aff"/><stop offset="0.077" stop-color="#0437ff"/><stop offset="0.641" stop-color="#9216ff"/><stop offset="0.897" stop-color="#d801ff"/><stop offset="1.000" stop-color="#f600ff"/></linearGradient>
<linearGradient id="hi74" gradientUnits="userSpaceOnUse" x1="1179.4" x2="1291.1" y1="0" y2="0"><stop offset="0.000" stop-color="#0036ff"/><stop offset="0.081" stop-color="#0432ff"/><stop offset="0.541" stop-color="#6d1aff"/><stop offset="0.892" stop-color="#c301ff"/><stop offset="1.000" stop-color="#e000ff"/></linearGradient>
<linearGradient id="hi75" gradientUnits="userSpaceOnUse" x1="1178.0" x2="1282.1" y1="0" y2="0"><stop offset="0.000" stop-color="#0031ff"/><stop offset="0.088" stop-color="#042eff"/><stop offset="0.559" stop-color="#6716ff"/><stop offset="0.882" stop-color="#af01ff"/><stop offset="1.000" stop-color="#cb00ff"/></linearGradient>
<linearGradient id="hi76" gradientUnits="userSpaceOnUse" x1="1176.6" x2="1273.1" y1="0" y2="0"><stop offset="0.000" stop-color="#002dff"/><stop offset="0.094" stop-color="#0429ff"/><stop offset="0.875" stop-color="#9c01ff"/><stop offset="1.000" stop-color="#b700ff"/></linearGradient>
<linearGradient id="hi77" gradientUnits="userSpaceOnUse" x1="1175.2" x2="1264.1" y1="0" y2="0"><stop offset="0.000" stop-color="#0029ff"/><stop offset="0.103" stop-color="#0425ff"/><stop offset="0.862" stop-color="#8a01ff"/><stop offset="1.000" stop-color="#a400ff"/></linearGradient>
<linearGradient id="hi78" gradientUnits="userSpaceOnUse" x1="1173.8" x2="1255.1" y1="0" y2="0"><stop offset="0.000" stop-color="#0025ff"/><stop offset="0.111" stop-color="#0321ff"/><stop offset="0.852" stop-color="#7900ff"/><stop offset="1.000" stop-color="#9100ff"/></linearGradient>
<linearGradient id="hi79" gradientUnits="userSpaceOnUse" x1="1172.5" x2="1246.1" y1="0" y2="0"><stop offset="0.000" stop-color="#0021ff"/><stop offset="0.125" stop-color="#041dff"/><stop offset="0.833" stop-color="#6801ff"/><stop offset="1.000" stop-color="#8000ff"/></linearGradient>
<linearGradient id="hi80" gradientUnits="userSpaceOnUse" x1="1171.1" x2="1237.1" y1="0" y2="0"><stop offset="0.000" stop-color="#001dff"/><stop offset="0.136" stop-color="#0319ff"/><stop offset="0.818" stop-color="#5900ff"/><stop offset="1.000" stop-color="#7000ff"/></linearGradient>
<linearGradient id="hi81" gradientUnits="userSpaceOnUse" x1="1169.7" x2="1228.1" y1="0" y2="0"><stop offset="0.000" stop-color="#0019ff"/><stop offset="0.158" stop-color="#0415ff"/><stop offset="0.789" stop-color="#4901ff"/><stop offset="1.000" stop-color="#6000ff"/></linearGradient>
<linearGradient id="hi82" gradientUnits="userSpaceOnUse" x1="1168.3" x2="1219.1" y1="0" y2="0"><stop offset="0.000" stop-color="#0015ff"/><stop offset="0.187" stop-color="#0410ff"/><stop offset="0.750" stop-color="#3a01ff"/><stop offset="1.000" stop-color="#5100ff"/></linearGradient>
<linearGradient id="hi83" gradientUnits="userSpaceOnUse" x1="1167.0" x2="1210.1" y1="0" y2="0"><stop offset="0.000" stop-color="#0011ff"/><stop offset="0.214" stop-color="#040dff"/><stop offset="0.714" stop-color="#2c01ff"/><stop offset="1.000" stop-color="#4200ff"/></linearGradient>
<linearGradient id="hi84" gradientUnits="userSpaceOnUse" x1="1165.6" x2="1201.1" y1="0" y2="0"><stop offset="0.000" stop-color="#000dff"/><stop offset="0.182" stop-color="#000aff"/><stop offset="0.273" stop-color="#0508ff"/><stop offset="0.636" stop-color="#1d01ff"/><stop offset="1.000" stop-color="#3400ff"/></linearGradient>
<linearGradient id="hi85" gradientUnits="userSpaceOnUse" x1="1164.2" x2="1192.1" y1="0" y2="0"><stop offset="0.000" stop-color="#0009ff"/><stop offset="0.333" stop-color="#0404ff"/><stop offset="1.000" stop-color="#2600ff"/></linearGradient>
<linearGradient id="hi86" gradientUnits="userSpaceOnUse" x1="1163.5" x2="1183.1" y1="0" y2="0"><stop offset="0.000" stop-color="#0005ff"/><stop offset="0.333" stop-color="#0001ff"/><stop offset="1.000" stop-color="#1800ff"/></linearGradient>
<linearGradient id="hi87" gradientUnits="userSpaceOnUse" x1="1163.5" x2="1178.4" y1="0" y2="0"><stop offset="0.000" stop-color="#0000ff"/><stop offset="0.500" stop-color="#0400ff"/><stop offset="1.000" stop-color="#1200ff"/></linearGradient>
<linearGradient id="hi88" gradientUnits="userSpaceOnUse" x1="1163.5" x2="1178.4" y1="0" y2="0"><stop offset="0.000" stop-color="#0000ff"/><stop offset="0.250" stop-color="#0000ff"/><stop offset="1.000" stop-color="#1400ff"/></linearGradient>
<linearGradient id="insd" x1="0" x2="0" y1="0" y2="1"><stop offset="0" stop-color="#007c9e"/><stop offset="1" stop-color="#004e98"/></linearGradient>
<linearGradient id="insb" x1="0.1" x2="0.9" y1="0" y2="1"><stop offset="0" stop-color="#08c6ff"/><stop offset="0.5" stop-color="#1a9fff"/><stop offset="1" stop-color="#3c7cff"/></linearGradient>
<linearGradient id="thead" x1="0" x2="0" y1="0" y2="1"><stop offset="0" stop-color="#2b2b2b"/><stop offset="0.47" stop-color="#212121"/><stop offset="0.5" stop-color="#141414"/><stop offset="1" stop-color="#070707"/></linearGradient>
<linearGradient id="tstrip" x1="0" x2="1" y1="0" y2="0"><stop offset="0" stop-color="#0c0c0c"/><stop offset="1" stop-color="#2c2c2c"/></linearGradient>
<linearGradient id="btn" x1="0" x2="0" y1="0" y2="1"><stop offset="0" stop-color="#a6a6a6"/><stop offset="0.5" stop-color="#7e7e7e"/><stop offset="1" stop-color="#5e5e5e"/></linearGradient>
<linearGradient id="btnsel" x1="0" x2="0" y1="0" y2="1"><stop offset="0" stop-color="#6a6a6a"/><stop offset="1" stop-color="#484848"/></linearGradient>
<linearGradient id="btndark" x1="0" x2="0" y1="0" y2="1"><stop offset="0" stop-color="#3c3c3c"/><stop offset="1" stop-color="#2a2a2a"/></linearGradient>
<linearGradient id="knob" x1="0" x2="0" y1="0" y2="1"><stop offset="0" stop-color="#6c6c6c"/><stop offset="0.55" stop-color="#929292"/><stop offset="1" stop-color="#b6b6b6"/></linearGradient>
<linearGradient id="sqic" x1="0" x2="0" y1="0" y2="1"><stop offset="0" stop-color="#b8b8b8"/><stop offset="0.5" stop-color="#a4a4a4"/><stop offset="0.52" stop-color="#8a8a8a"/><stop offset="1" stop-color="#9a9a9a"/></linearGradient>
</defs>
<rect x="0" y="0" width="1719" height="951" fill="#333333" />
<rect x="0" y="0" width="1719" height="1.2" fill="#242424" />
<g id="titles">
<text x="24.5" y="63.5" font-size="42.5" fill="#f2f2f2" textLength="241.5" lengthAdjust="spacingAndGlyphs" stroke="#f2f2f2" stroke-width="0.55">ColorChecker</text>
<text x="90.5" y="124.5" font-size="31" fill="#f2f2f2" textLength="239.5" lengthAdjust="spacingAndGlyphs" stroke="#f2f2f2" stroke-width="0.55">Avg dE2000: 3.74</text>
<text x="86" y="168.5" font-size="31" fill="#f2f2f2" textLength="248" lengthAdjust="spacingAndGlyphs" stroke="#f2f2f2" stroke-width="0.55">Max dE2000: 8.97</text>
</g>
<g id="deltaE">
<text x="203.5" y="207.5" font-size="15" fill="#dcdcdc" text-anchor="middle" textLength="81" lengthAdjust="spacingAndGlyphs" >DeltaE 2000</text>
<rect x="20.5" y="212.7" width="366.0" height="391.50000000000006" fill="#262626" />
<line x1="68.6" y1="212.7" x2="68.6" y2="604.2" stroke="#8c8c8c" stroke-width="1.5" />
<line x1="117.5" y1="212.7" x2="117.5" y2="604.2" stroke="#8c8c8c" stroke-width="1.5" />
<line x1="166.5" y1="212.7" x2="166.5" y2="604.2" stroke="#8c8c8c" stroke-width="1.5" />
<line x1="215.4" y1="212.7" x2="215.4" y2="604.2" stroke="#8c8c8c" stroke-width="1.5" />
<line x1="264.3" y1="212.7" x2="264.3" y2="604.2" stroke="#8c8c8c" stroke-width="1.5" />
<line x1="313.2" y1="212.7" x2="313.2" y2="604.2" stroke="#8c8c8c" stroke-width="1.5" />
<line x1="362.1" y1="212.7" x2="362.1" y2="604.2" stroke="#8c8c8c" stroke-width="1.5" />
<rect x="21.0" y="588.8" width="43.7" height="12.7" fill="#000000" />
<rect x="21.0" y="590.1" width="42.3" height="10" fill="url(#bg0)" />
<rect x="21.0" y="572.5" width="56.2" height="12.7" fill="#000000" />
<rect x="21.0" y="573.8" width="54.8" height="10" fill="url(#bg1)" />
<rect x="21.0" y="556.2" width="51.1" height="12.7" fill="#000000" />
<rect x="21.0" y="557.5" width="49.7" height="10" fill="url(#bg2)" />
<rect x="21.0" y="539.9" width="50.8" height="12.7" fill="#000000" />
<rect x="21.0" y="541.2" width="49.4" height="10" fill="url(#bg3)" />
<rect x="21.0" y="523.6" width="60.8" height="12.7" fill="#000000" />
<rect x="21.0" y="524.9" width="59.4" height="10" fill="url(#bg4)" />
<rect x="21.0" y="507.3" width="111.2" height="12.7" fill="#000000" />
<rect x="21.0" y="508.6" width="109.8" height="10" fill="url(#bg5)" />
<rect x="21.0" y="491.0" width="55.5" height="12.7" fill="#000000" />
<rect x="21.0" y="492.3" width="54.1" height="10" fill="url(#bg6)" />
<rect x="21.0" y="474.7" width="80.6" height="12.7" fill="#000000" />
<rect x="21.0" y="476.0" width="79.2" height="10" fill="url(#bg7)" />
<rect x="21.0" y="458.4" width="138.0" height="12.7" fill="#000000" />
<rect x="21.0" y="459.7" width="136.6" height="10" fill="url(#bg8)" />
<rect x="21.0" y="442.1" width="43.7" height="12.7" fill="#000000" />
<rect x="21.0" y="443.4" width="42.3" height="10" fill="url(#bg9)" />
<rect x="21.0" y="425.8" width="69.1" height="12.7" fill="#000000" />
<rect x="21.0" y="427.1" width="67.7" height="10" fill="url(#bg10)" />
<rect x="21.0" y="409.5" width="73.0" height="12.7" fill="#000000" />
<rect x="21.0" y="410.8" width="71.6" height="10" fill="url(#bg11)" />
<rect x="21.0" y="393.2" width="219.1" height="12.7" fill="#000000" />
<rect x="21.0" y="394.5" width="217.7" height="10" fill="url(#bg12)" />
<rect x="21.0" y="376.9" width="112.4" height="12.7" fill="#000000" />
<rect x="21.0" y="378.2" width="111.0" height="10" fill="url(#bg13)" />
<rect x="21.0" y="360.6" width="58.1" height="12.7" fill="#000000" />
<rect x="21.0" y="361.9" width="56.7" height="10" fill="url(#bg14)" />
<rect x="21.0" y="344.3" width="67.7" height="12.7" fill="#000000" />
<rect x="21.0" y="345.6" width="66.3" height="10" fill="url(#bg15)" />
<rect x="21.0" y="328.0" width="82.6" height="12.7" fill="#000000" />
<rect x="21.0" y="329.3" width="81.2" height="10" fill="url(#bg16)" />
<rect x="21.0" y="311.7" width="202.8" height="12.7" fill="#000000" />
<rect x="21.0" y="313.0" width="201.4" height="10" fill="url(#bg17)" />
<rect x="21.0" y="295.4" width="122.2" height="12.7" fill="#000000" />
<rect x="21.0" y="296.7" width="120.8" height="10" fill="url(#bg18)" />
<rect x="21.0" y="279.1" width="75.5" height="12.7" fill="#000000" />
<rect x="21.0" y="280.4" width="74.1" height="10" fill="url(#bg19)" />
<rect x="21.0" y="262.8" width="43.7" height="12.7" fill="#000000" />
<rect x="21.0" y="264.1" width="42.3" height="10" fill="url(#bg20)" />
<rect x="21.0" y="246.5" width="152.2" height="12.7" fill="#000000" />
<rect x="21.0" y="247.8" width="150.8" height="10" fill="url(#bg21)" />
<rect x="21.0" y="230.2" width="66.7" height="12.7" fill="#000000" />
<rect x="21.0" y="231.5" width="65.3" height="10" fill="url(#bg22)" />
<rect x="21.0" y="213.9" width="156.4" height="12.7" fill="#000000" />
<rect x="21.0" y="215.2" width="155.0" height="10" fill="url(#bg23)" />
<line x1="93.19" y1="212.7" x2="93.19" y2="604.2" stroke="#1f701f" stroke-width="1.6" />
<line x1="142.05" y1="212.7" x2="142.05" y2="604.2" stroke="#f2f02a" stroke-width="1.6" />
<line x1="264.2" y1="212.7" x2="264.2" y2="604.2" stroke="#b82c2c" stroke-width="2.4" />
<rect x="20.5" y="212.7" width="366.0" height="391.50000000000006" fill="none" stroke="#9a9a9a" stroke-width="1.3"/>
<line x1="19.7" y1="604.2" x2="19.7" y2="609.7" stroke="#dddddd" stroke-width="1.8" />
<text x="19.7" y="627.3" font-size="15.2" fill="#dcdcdc" text-anchor="middle" >0</text>
<line x1="68.6" y1="604.2" x2="68.6" y2="609.7" stroke="#dddddd" stroke-width="1.8" />
<text x="68.6" y="627.3" font-size="15.2" fill="#dcdcdc" text-anchor="middle" >2</text>
<line x1="117.5" y1="604.2" x2="117.5" y2="609.7" stroke="#dddddd" stroke-width="1.8" />
<text x="117.5" y="627.3" font-size="15.2" fill="#dcdcdc" text-anchor="middle" >4</text>
<line x1="166.5" y1="604.2" x2="166.5" y2="609.7" stroke="#dddddd" stroke-width="1.8" />
<text x="166.5" y="627.3" font-size="15.2" fill="#dcdcdc" text-anchor="middle" >6</text>
<line x1="215.4" y1="604.2" x2="215.4" y2="609.7" stroke="#dddddd" stroke-width="1.8" />
<text x="215.4" y="627.3" font-size="15.2" fill="#dcdcdc" text-anchor="middle" >8</text>
<line x1="264.3" y1="604.2" x2="264.3" y2="609.7" stroke="#dddddd" stroke-width="1.8" />
<text x="264.3" y="627.3" font-size="15.2" fill="#dcdcdc" text-anchor="middle" >10</text>
<line x1="313.2" y1="604.2" x2="313.2" y2="609.7" stroke="#dddddd" stroke-width="1.8" />
<text x="313.2" y="627.3" font-size="15.2" fill="#dcdcdc" text-anchor="middle" >12</text>
<line x1="362.1" y1="604.2" x2="362.1" y2="609.7" stroke="#dddddd" stroke-width="1.8" />
<text x="362.1" y="627.3" font-size="15.2" fill="#dcdcdc" text-anchor="middle" >14</text>
</g>
<g id="deltaL">
<text x="498" y="45.3" font-size="15.2" fill="#dcdcdc" text-anchor="middle" >DeltaL</text>
<rect x="432.5" y="50.5" width="150.0" height="366.0" fill="#262626" />
<line x1="427.0" y1="416.5" x2="432.5" y2="416.5" stroke="#e0e0e0" stroke-width="1.9" />
<text x="427" y="421.8" font-size="15.2" fill="#dcdcdc" text-anchor="end" >-4</text>
<line x1="432.5" y1="371.5" x2="582.5" y2="371.5" stroke="#8c8c8c" stroke-width="1.3" />
<line x1="427.0" y1="371.5" x2="432.5" y2="371.5" stroke="#e0e0e0" stroke-width="1.9" />
<text x="427" y="376.8" font-size="15.2" fill="#dcdcdc" text-anchor="end" >-3</text>
<line x1="432.5" y1="325.5" x2="582.5" y2="325.5" stroke="#8c8c8c" stroke-width="1.3" />
<line x1="427.0" y1="325.5" x2="432.5" y2="325.5" stroke="#e0e0e0" stroke-width="1.9" />
<text x="427" y="330.8" font-size="15.2" fill="#dcdcdc" text-anchor="end" >-2</text>
<line x1="432.5" y1="279.5" x2="582.5" y2="279.5" stroke="#8c8c8c" stroke-width="1.3" />
<line x1="427.0" y1="279.5" x2="432.5" y2="279.5" stroke="#e0e0e0" stroke-width="1.9" />
<text x="427" y="284.8" font-size="15.2" fill="#dcdcdc" text-anchor="end" >-1</text>
<line x1="432.5" y1="234.5" x2="582.5" y2="234.5" stroke="#8c8c8c" stroke-width="1.3" />
<line x1="427.0" y1="234.5" x2="432.5" y2="234.5" stroke="#e0e0e0" stroke-width="1.9" />
<text x="427" y="239.8" font-size="15.2" fill="#dcdcdc" text-anchor="end" >0</text>
<line x1="432.5" y1="188.5" x2="582.5" y2="188.5" stroke="#8c8c8c" stroke-width="1.3" />
<line x1="427.0" y1="188.5" x2="432.5" y2="188.5" stroke="#e0e0e0" stroke-width="1.9" />
<text x="427" y="193.8" font-size="15.2" fill="#dcdcdc" text-anchor="end" >1</text>
<line x1="432.5" y1="142.5" x2="582.5" y2="142.5" stroke="#8c8c8c" stroke-width="1.3" />
<line x1="427.0" y1="142.5" x2="432.5" y2="142.5" stroke="#e0e0e0" stroke-width="1.9" />
<text x="427" y="147.8" font-size="15.2" fill="#dcdcdc" text-anchor="end" >2</text>
<line x1="432.5" y1="96.5" x2="582.5" y2="96.5" stroke="#8c8c8c" stroke-width="1.3" />
<line x1="427.0" y1="96.5" x2="432.5" y2="96.5" stroke="#e0e0e0" stroke-width="1.9" />
<text x="427" y="101.8" font-size="15.2" fill="#dcdcdc" text-anchor="end" >3</text>
<line x1="427.0" y1="50.5" x2="432.5" y2="50.5" stroke="#e0e0e0" stroke-width="1.9" />
<text x="427" y="55.8" font-size="15.2" fill="#dcdcdc" text-anchor="end" >4</text>
<rect x="447" y="222.9" width="121" height="11.6" fill="#000000" />
<rect x="448.2" y="224.1" width="118.6" height="9.2" fill="url(#cyanbar)" />
<line x1="432.5" y1="96.2" x2="583.5" y2="96.2" stroke="#1f7a1f" stroke-width="1.8" stroke-opacity="0.82"/>
<line x1="432.5" y1="370.8" x2="583.5" y2="370.8" stroke="#1f7a1f" stroke-width="1.8" stroke-opacity="0.82"/>
<rect x="432.5" y="50.5" width="150.0" height="366.0" fill="none" stroke="#9a9a9a" stroke-width="1.3"/>
</g>
<g id="deltaC">
<text x="694.5" y="45.3" font-size="15.2" fill="#dcdcdc" text-anchor="middle" >DeltaC</text>
<rect x="628.5" y="50.5" width="151.0" height="366.0" fill="#262626" />
<line x1="623.0" y1="416.5" x2="628.5" y2="416.5" stroke="#e0e0e0" stroke-width="1.9" />
<text x="623" y="421.8" font-size="15.2" fill="#dcdcdc" text-anchor="end" >-4</text>
<line x1="628.5" y1="371.5" x2="779.5" y2="371.5" stroke="#8c8c8c" stroke-width="1.3" />
<line x1="623.0" y1="371.5" x2="628.5" y2="371.5" stroke="#e0e0e0" stroke-width="1.9" />
<text x="623" y="376.8" font-size="15.2" fill="#dcdcdc" text-anchor="end" >-3</text>
<line x1="628.5" y1="325.5" x2="779.5" y2="325.5" stroke="#8c8c8c" stroke-width="1.3" />
<line x1="623.0" y1="325.5" x2="628.5" y2="325.5" stroke="#e0e0e0" stroke-width="1.9" />
<text x="623" y="330.8" font-size="15.2" fill="#dcdcdc" text-anchor="end" >-2</text>
<line x1="628.5" y1="279.5" x2="779.5" y2="279.5" stroke="#8c8c8c" stroke-width="1.3" />
<line x1="623.0" y1="279.5" x2="628.5" y2="279.5" stroke="#e0e0e0" stroke-width="1.9" />
<text x="623" y="284.8" font-size="15.2" fill="#dcdcdc" text-anchor="end" >-1</text>
<line x1="628.5" y1="234.5" x2="779.5" y2="234.5" stroke="#8c8c8c" stroke-width="1.3" />
<line x1="623.0" y1="234.5" x2="628.5" y2="234.5" stroke="#e0e0e0" stroke-width="1.9" />
<text x="623" y="239.8" font-size="15.2" fill="#dcdcdc" text-anchor="end" >0</text>
<line x1="628.5" y1="188.5" x2="779.5" y2="188.5" stroke="#8c8c8c" stroke-width="1.3" />
<line x1="623.0" y1="188.5" x2="628.5" y2="188.5" stroke="#e0e0e0" stroke-width="1.9" />
<text x="623" y="193.8" font-size="15.2" fill="#dcdcdc" text-anchor="end" >1</text>
<line x1="628.5" y1="142.5" x2="779.5" y2="142.5" stroke="#8c8c8c" stroke-width="1.3" />
<line x1="623.0" y1="142.5" x2="628.5" y2="142.5" stroke="#e0e0e0" stroke-width="1.9" />
<text x="623" y="147.8" font-size="15.2" fill="#dcdcdc" text-anchor="end" >2</text>
<line x1="628.5" y1="96.5" x2="779.5" y2="96.5" stroke="#8c8c8c" stroke-width="1.3" />
<line x1="623.0" y1="96.5" x2="628.5" y2="96.5" stroke="#e0e0e0" stroke-width="1.9" />
<text x="623" y="101.8" font-size="15.2" fill="#dcdcdc" text-anchor="end" >3</text>
<line x1="623.0" y1="50.5" x2="628.5" y2="50.5" stroke="#e0e0e0" stroke-width="1.9" />
<text x="623" y="55.8" font-size="15.2" fill="#dcdcdc" text-anchor="end" >4</text>
<rect x="643.5" y="233.0" width="120.5" height="62.1" fill="#000000" />
<rect x="644.7" y="234.2" width="118.1" height="59.7" fill="url(#cyanbar)" />
<line x1="628.5" y1="96.2" x2="780.5" y2="96.2" stroke="#1f7a1f" stroke-width="1.8" stroke-opacity="0.82"/>
<line x1="628.5" y1="370.8" x2="780.5" y2="370.8" stroke="#1f7a1f" stroke-width="1.8" stroke-opacity="0.82"/>
<rect x="628.5" y="50.5" width="151.0" height="366.0" fill="none" stroke="#9a9a9a" stroke-width="1.3"/>
</g>
<g id="deltaH">
<text x="897.5" y="45.3" font-size="15.2" fill="#dcdcdc" text-anchor="middle" >DeltaH</text>
<rect x="833.5" y="50.5" width="156.0" height="366.0" fill="#262626" />
<line x1="828.0" y1="416.5" x2="833.5" y2="416.5" stroke="#e0e0e0" stroke-width="1.9" />
<text x="828" y="421.8" font-size="15.2" fill="#dcdcdc" text-anchor="end" >-20</text>
<line x1="833.5" y1="371.5" x2="989.5" y2="371.5" stroke="#8c8c8c" stroke-width="1.3" />
<line x1="828.0" y1="371.5" x2="833.5" y2="371.5" stroke="#e0e0e0" stroke-width="1.9" />
<text x="828" y="376.8" font-size="15.2" fill="#dcdcdc" text-anchor="end" >-15</text>
<line x1="833.5" y1="325.5" x2="989.5" y2="325.5" stroke="#8c8c8c" stroke-width="1.3" />
<line x1="828.0" y1="325.5" x2="833.5" y2="325.5" stroke="#e0e0e0" stroke-width="1.9" />
<text x="828" y="330.8" font-size="15.2" fill="#dcdcdc" text-anchor="end" >-10</text>
<line x1="833.5" y1="279.5" x2="989.5" y2="279.5" stroke="#8c8c8c" stroke-width="1.3" />
<line x1="828.0" y1="279.5" x2="833.5" y2="279.5" stroke="#e0e0e0" stroke-width="1.9" />
<text x="828" y="284.8" font-size="15.2" fill="#dcdcdc" text-anchor="end" >-5</text>
<line x1="833.5" y1="234.5" x2="989.5" y2="234.5" stroke="#8c8c8c" stroke-width="1.3" />
<line x1="828.0" y1="234.5" x2="833.5" y2="234.5" stroke="#e0e0e0" stroke-width="1.9" />
<text x="828" y="239.8" font-size="15.2" fill="#dcdcdc" text-anchor="end" >0</text>
<line x1="833.5" y1="188.5" x2="989.5" y2="188.5" stroke="#8c8c8c" stroke-width="1.3" />
<line x1="828.0" y1="188.5" x2="833.5" y2="188.5" stroke="#e0e0e0" stroke-width="1.9" />
<text x="828" y="193.8" font-size="15.2" fill="#dcdcdc" text-anchor="end" >5</text>
<line x1="833.5" y1="142.5" x2="989.5" y2="142.5" stroke="#8c8c8c" stroke-width="1.3" />
<line x1="828.0" y1="142.5" x2="833.5" y2="142.5" stroke="#e0e0e0" stroke-width="1.9" />
<text x="828" y="147.8" font-size="15.2" fill="#dcdcdc" text-anchor="end" >10</text>
<line x1="833.5" y1="96.5" x2="989.5" y2="96.5" stroke="#8c8c8c" stroke-width="1.3" />
<line x1="828.0" y1="96.5" x2="833.5" y2="96.5" stroke="#e0e0e0" stroke-width="1.9" />
<text x="828" y="101.8" font-size="15.2" fill="#dcdcdc" text-anchor="end" >15</text>
<line x1="828.0" y1="50.5" x2="833.5" y2="50.5" stroke="#e0e0e0" stroke-width="1.9" />
<text x="828" y="55.8" font-size="15.2" fill="#dcdcdc" text-anchor="end" >20</text>
<rect x="848.5" y="136.9" width="124.5" height="97.6" fill="#000000" />
<rect x="849.7" y="138.1" width="122.1" height="95.2" fill="url(#cyanbar)" />
<line x1="833.5" y1="142.0" x2="990.5" y2="142.0" stroke="#e02a2a" stroke-width="2" stroke-opacity="0.82"/>
<line x1="833.5" y1="325.0" x2="990.5" y2="325.0" stroke="#e02a2a" stroke-width="2" stroke-opacity="0.82"/>
<line x1="833.5" y1="187.8" x2="990.5" y2="187.8" stroke="#e8e83c" stroke-width="2.2" stroke-opacity="0.82"/>
<line x1="833.5" y1="279.2" x2="990.5" y2="279.2" stroke="#e8e83c" stroke-width="2.2" stroke-opacity="0.82"/>
<line x1="833.5" y1="206.1" x2="990.5" y2="206.1" stroke="#1f7a1f" stroke-width="1.6" stroke-opacity="0.82"/>
<line x1="833.5" y1="260.9" x2="990.5" y2="260.9" stroke="#1f7a1f" stroke-width="1.6" stroke-opacity="0.82"/>
<rect x="833.5" y="50.5" width="156.0" height="366.0" fill="none" stroke="#9a9a9a" stroke-width="1.3"/>
</g>
<g id="swatches">
<rect x="414" y="423" width="589" height="197.5" fill="#000000" />
<clipPath id="swclip"><rect x="414" y="423" width="589" height="198"/></clipPath>
<g clip-path="url(#swclip)">
<rect x="432.8" y="431.8" width="58.4" height="64" fill="#030308" stroke="#f2f2f2" stroke-width="1.6"/>
<rect x="432.8" y="514.8" width="58.4" height="64" fill="#000000" stroke="#f2f2f2" stroke-width="1.6"/>
<text transform="translate(462,596) scale(0.93,1)" font-size="13.2" fill="#f4f4f4" text-anchor="middle" stroke="#f4f4f4" stroke-width="0.35">Black</text>
<rect x="502.8" y="431.8" width="58.4" height="64" fill="#a2a2a4" stroke="#f2f2f2" stroke-width="1.6"/>
<rect x="502.8" y="514.8" width="58.4" height="64" fill="#a0a0a0" stroke="#f2f2f2" stroke-width="1.6"/>
<text transform="translate(532,596) scale(0.93,1)" font-size="13.2" fill="#f4f4f4" text-anchor="middle" stroke="#f4f4f4" stroke-width="0.35">Gray 35</text>
<rect x="572.8" y="431.8" width="58.4" height="64" fill="#bebec2" stroke="#f2f2f2" stroke-width="1.6"/>
<rect x="572.8" y="514.8" width="58.4" height="64" fill="#bababa" stroke="#f2f2f2" stroke-width="1.6"/>
<text transform="translate(602,596) scale(0.93,1)" font-size="13.2" fill="#f4f4f4" text-anchor="middle" stroke="#f4f4f4" stroke-width="0.35">Gray 50</text>
<rect x="642.8" y="431.8" width="58.4" height="64" fill="#d2d2d6" stroke="#f2f2f2" stroke-width="1.6"/>
<rect x="642.8" y="514.8" width="58.4" height="64" fill="#d0d0d0" stroke="#f2f2f2" stroke-width="1.6"/>
<text transform="translate(672,596) scale(0.93,1)" font-size="13.2" fill="#f4f4f4" text-anchor="middle" stroke="#f4f4f4" stroke-width="0.35">Gray 65</text>
<rect x="712.8" y="431.8" width="58.4" height="64" fill="#e3e3e7" stroke="#f2f2f2" stroke-width="1.6"/>
<rect x="712.8" y="514.8" width="58.4" height="64" fill="#e4e4e4" stroke="#f2f2f2" stroke-width="1.6"/>
<text transform="translate(742,596) scale(0.93,1)" font-size="13.2" fill="#f4f4f4" text-anchor="middle" stroke="#f4f4f4" stroke-width="0.35">Gray 80</text>
<rect x="782.8" y="431.8" width="58.4" height="64" fill="#f4f4fc" stroke="#f2f2f2" stroke-width="1.6"/>
<rect x="782.8" y="514.8" width="58.4" height="64" fill="#f5f5f5" stroke="#f2f2f2" stroke-width="1.6"/>
<text transform="translate(812,596) scale(0.93,1)" font-size="13.2" fill="#f4f4f4" text-anchor="middle" stroke="#f4f4f4" stroke-width="0.35">White</text>
<rect x="852.8" y="431.8" width="58.4" height="64" fill="#735645" stroke="#f2f2f2" stroke-width="1.6"/>
<rect x="852.8" y="514.8" width="58.4" height="64" fill="#755343" stroke="#f2f2f2" stroke-width="1.6"/>
<text transform="translate(882,596) scale(0.93,1)" font-size="13.2" fill="#f4f4f4" text-anchor="middle" stroke="#f4f4f4" stroke-width="0.35">Dark Skin</text>
<rect x="922.8" y="431.8" width="58.4" height="64" fill="#c19a85" stroke="#f2f2f2" stroke-width="1.6"/>
<rect x="922.8" y="514.8" width="58.4" height="64" fill="#c69886" stroke="#f2f2f2" stroke-width="1.6"/>
<text transform="translate(952,596) scale(0.93,1)" font-size="13.2" fill="#f4f4f4" text-anchor="middle" stroke="#f4f4f4" stroke-width="0.35">Light Skin</text>
<rect x="992.8" y="431.8" width="58.4" height="64" fill="#6479a4" stroke="#f2f2f2" stroke-width="1.6"/>
<rect x="992.8" y="514.8" width="58.4" height="64" fill="#5a7ba0" stroke="#f2f2f2" stroke-width="1.6"/>
<text transform="translate(1022,596) scale(0.93,1)" font-size="13.2" fill="#f4f4f4" text-anchor="middle" stroke="#f4f4f4" stroke-width="0.35">Blue Sky</text>
</g>
<text x="0" y="0" font-size="13.2" fill="#f4f4f4" text-anchor="middle" transform="translate(427.5,464) rotate(-90)" stroke="#f4f4f4" stroke-width="0.35">Actual</text>
<text x="0" y="0" font-size="13.2" fill="#f4f4f4" text-anchor="middle" transform="translate(427.5,547) rotate(-90)" stroke="#f4f4f4" stroke-width="0.35">Target</text>
<rect x="414" y="620.5" width="589" height="17.5" fill="#686868" />
<rect x="432" y="622" width="190" height="14.5" rx="7" fill="#4e4e4e"/>
<rect x="415" y="621.5" width="15" height="15.5" rx="3" fill="#7c7c7c"/>
<rect x="986" y="621.5" width="15" height="15.5" rx="3" fill="#7c7c7c"/>
<path d="M426 624.5 L419 629.2 L426 634 Z" fill="#3c3c3c"/>
<path d="M990.5 624.5 L997.5 629.2 L990.5 634 Z" fill="#3c3c3c"/>
</g>
<g id="cie">
<rect x="1020.75" y="27" width="693.5" height="592.5" fill="#333333" stroke="#000000" stroke-width="7.5"/>
<text x="1367.5" y="51" font-size="15.2" fill="#dcdcdc" text-anchor="middle" textLength="79" lengthAdjust="spacingAndGlyphs" >CIE 1931 xy</text>
<rect x="1054.5" y="56" width="653.0" height="528.5" fill="#262626" />
<g clip-path="url(#hs)"><g filter="url(#vblur)">
<rect x="1104.7" y="59.1" width="30.8" height="5.6" fill="url(#ho0)"/>
<rect x="1104.7" y="64.1" width="30.8" height="5.6" fill="url(#ho1)"/>
<rect x="1090.4" y="69.1" width="69.2" height="5.6" fill="url(#ho2)"/>
<rect x="1082.5" y="74.1" width="92.9" height="5.6" fill="url(#ho3)"/>
<rect x="1077.3" y="79.1" width="111.4" height="5.6" fill="url(#ho4)"/>
<rect x="1073.4" y="84.1" width="126.8" height="5.6" fill="url(#ho5)"/>
<rect x="1070.1" y="89.1" width="139.7" height="5.6" fill="url(#ho6)"/>
<rect x="1067.3" y="94.1" width="151.5" height="5.6" fill="url(#ho7)"/>
<rect x="1065.0" y="99.1" width="162.6" height="5.6" fill="url(#ho8)"/>
<rect x="1062.8" y="104.1" width="173.2" height="5.6" fill="url(#ho9)"/>
<rect x="1060.7" y="109.1" width="183.3" height="5.6" fill="url(#ho10)"/>
<rect x="1058.9" y="114.1" width="192.8" height="5.6" fill="url(#ho11)"/>
<rect x="1057.3" y="119.1" width="201.7" height="5.6" fill="url(#ho12)"/>
<rect x="1056.0" y="124.1" width="210.2" height="5.6" fill="url(#ho13)"/>
<rect x="1055.1" y="129.1" width="218.5" height="5.6" fill="url(#ho14)"/>
<rect x="1054.2" y="134.1" width="226.6" height="5.6" fill="url(#ho15)"/>
<rect x="1053.4" y="139.1" width="234.6" height="5.6" fill="url(#ho16)"/>
<rect x="1052.6" y="144.1" width="242.6" height="5.6" fill="url(#ho17)"/>
<rect x="1052.0" y="149.1" width="250.4" height="5.6" fill="url(#ho18)"/>
<rect x="1051.4" y="154.1" width="258.1" height="5.6" fill="url(#ho19)"/>
<rect x="1051.0" y="159.1" width="265.5" height="5.6" fill="url(#ho20)"/>
<rect x="1050.8" y="164.1" width="272.8" height="5.6" fill="url(#ho21)"/>
<rect x="1050.6" y="169.1" width="279.9" height="5.6" fill="url(#ho22)"/>
<rect x="1050.5" y="174.1" width="286.9" height="5.6" fill="url(#ho23)"/>
<rect x="1050.5" y="179.1" width="293.8" height="5.6" fill="url(#ho24)"/>
<rect x="1050.4" y="184.1" width="300.5" height="5.6" fill="url(#ho25)"/>
<rect x="1050.4" y="189.1" width="307.3" height="5.6" fill="url(#ho26)"/>
<rect x="1050.4" y="194.1" width="313.9" height="5.6" fill="url(#ho27)"/>
<rect x="1050.5" y="199.1" width="320.5" height="5.6" fill="url(#ho28)"/>
<rect x="1050.6" y="204.1" width="327.0" height="5.6" fill="url(#ho29)"/>
<rect x="1050.7" y="209.1" width="333.3" height="5.6" fill="url(#ho30)"/>
<rect x="1051.0" y="214.1" width="339.6" height="5.6" fill="url(#ho31)"/>
<rect x="1051.3" y="219.1" width="345.8" height="5.6" fill="url(#ho32)"/>
<rect x="1051.7" y="224.1" width="351.8" height="5.6" fill="url(#ho33)"/>
<rect x="1052.2" y="229.1" width="357.7" height="5.6" fill="url(#ho34)"/>
<rect x="1052.7" y="234.1" width="363.6" height="5.6" fill="url(#ho35)"/>
<rect x="1053.2" y="239.1" width="369.4" height="5.6" fill="url(#ho36)"/>
<rect x="1053.8" y="244.1" width="375.1" height="5.6" fill="url(#ho37)"/>
<rect x="1054.3" y="249.1" width="380.8" height="5.6" fill="url(#ho38)"/>
<rect x="1054.9" y="254.1" width="386.5" height="5.6" fill="url(#ho39)"/>
<rect x="1055.5" y="259.1" width="392.1" height="5.6" fill="url(#ho40)"/>
<rect x="1056.1" y="264.1" width="397.6" height="5.6" fill="url(#ho41)"/>
<rect x="1056.8" y="269.1" width="403.1" height="5.6" fill="url(#ho42)"/>
<rect x="1057.4" y="274.1" width="408.6" height="5.6" fill="url(#ho43)"/>
<rect x="1058.1" y="279.1" width="414.0" height="5.6" fill="url(#ho44)"/>
<rect x="1058.8" y="284.1" width="419.4" height="5.6" fill="url(#ho45)"/>
<rect x="1059.4" y="289.1" width="424.8" height="5.6" fill="url(#ho46)"/>
<rect x="1060.2" y="294.1" width="430.2" height="5.6" fill="url(#ho47)"/>
<rect x="1060.9" y="299.1" width="435.4" height="5.6" fill="url(#ho48)"/>
<rect x="1061.8" y="304.1" width="440.6" height="5.6" fill="url(#ho49)"/>
<rect x="1062.7" y="309.1" width="445.7" height="5.6" fill="url(#ho50)"/>
<rect x="1063.8" y="314.1" width="450.5" height="5.6" fill="url(#ho51)"/>
<rect x="1065.0" y="319.1" width="455.3" height="5.6" fill="url(#ho52)"/>
<rect x="1066.2" y="324.1" width="459.9" height="5.6" fill="url(#ho53)"/>
<rect x="1067.6" y="329.1" width="464.4" height="5.6" fill="url(#ho54)"/>
<rect x="1068.9" y="334.1" width="469.0" height="5.6" fill="url(#ho55)"/>
<rect x="1070.3" y="339.1" width="473.5" height="5.6" fill="url(#ho56)"/>
<rect x="1071.7" y="344.1" width="478.0" height="5.6" fill="url(#ho57)"/>
<rect x="1073.1" y="349.1" width="482.5" height="5.6" fill="url(#ho58)"/>
<rect x="1074.4" y="354.1" width="487.0" height="5.6" fill="url(#ho59)"/>
<rect x="1075.8" y="359.1" width="491.5" height="5.6" fill="url(#ho60)"/>
<rect x="1077.1" y="364.1" width="496.0" height="5.6" fill="url(#ho61)"/>
<rect x="1078.5" y="369.1" width="500.5" height="5.6" fill="url(#ho62)"/>
<rect x="1079.9" y="374.1" width="504.8" height="5.6" fill="url(#ho63)"/>
<rect x="1081.4" y="379.1" width="509.2" height="5.6" fill="url(#ho64)"/>
<rect x="1082.8" y="384.1" width="513.5" height="5.6" fill="url(#ho65)"/>
<rect x="1084.4" y="389.1" width="518.2" height="5.6" fill="url(#ho66)"/>
<rect x="1085.9" y="394.1" width="522.9" height="5.6" fill="url(#ho67)"/>
<rect x="1087.5" y="399.1" width="527.5" height="5.6" fill="url(#ho68)"/>
<rect x="1089.1" y="404.1" width="529.3" height="5.6" fill="url(#ho69)"/>
<rect x="1090.7" y="409.1" width="523.7" height="5.6" fill="url(#ho70)"/>
<rect x="1092.4" y="414.1" width="509.8" height="5.6" fill="url(#ho71)"/>
<rect x="1094.1" y="419.1" width="495.7" height="5.6" fill="url(#ho72)"/>
<rect x="1095.8" y="424.1" width="481.6" height="5.6" fill="url(#ho73)"/>
<rect x="1097.7" y="429.1" width="467.4" height="5.6" fill="url(#ho74)"/>
<rect x="1099.7" y="434.1" width="453.1" height="5.6" fill="url(#ho75)"/>
<rect x="1101.7" y="439.1" width="438.7" height="5.6" fill="url(#ho76)"/>
<rect x="1103.8" y="444.1" width="424.3" height="5.6" fill="url(#ho77)"/>
<rect x="1105.9" y="449.1" width="409.9" height="5.6" fill="url(#ho78)"/>
<rect x="1108.0" y="454.1" width="395.5" height="5.6" fill="url(#ho79)"/>
<rect x="1110.2" y="459.1" width="381.0" height="5.6" fill="url(#ho80)"/>
<rect x="1112.4" y="464.1" width="366.5" height="5.6" fill="url(#ho81)"/>
<rect x="1114.5" y="469.1" width="352.0" height="5.6" fill="url(#ho82)"/>
<rect x="1116.6" y="474.1" width="337.6" height="5.6" fill="url(#ho83)"/>
<rect x="1118.7" y="479.1" width="323.2" height="5.6" fill="url(#ho84)"/>
<rect x="1120.8" y="484.1" width="308.8" height="5.6" fill="url(#ho85)"/>
<rect x="1122.9" y="489.1" width="294.3" height="5.6" fill="url(#ho86)"/>
<rect x="1125.0" y="494.1" width="279.9" height="5.6" fill="url(#ho87)"/>
<rect x="1127.3" y="499.1" width="265.3" height="5.6" fill="url(#ho88)"/>
<rect x="1129.6" y="504.1" width="250.6" height="5.6" fill="url(#ho89)"/>
<rect x="1132.1" y="509.1" width="235.8" height="5.6" fill="url(#ho90)"/>
<rect x="1134.6" y="514.1" width="221.0" height="5.6" fill="url(#ho91)"/>
<rect x="1137.2" y="519.1" width="206.1" height="5.6" fill="url(#ho92)"/>
<rect x="1139.8" y="524.1" width="191.1" height="5.6" fill="url(#ho93)"/>
<rect x="1142.4" y="529.1" width="176.2" height="5.6" fill="url(#ho94)"/>
<rect x="1145.0" y="534.1" width="161.2" height="5.6" fill="url(#ho95)"/>
<rect x="1147.8" y="539.1" width="146.1" height="5.6" fill="url(#ho96)"/>
<rect x="1150.7" y="544.1" width="130.9" height="5.6" fill="url(#ho97)"/>
<rect x="1153.8" y="549.1" width="115.5" height="5.6" fill="url(#ho98)"/>
<rect x="1157.0" y="554.1" width="100.0" height="5.6" fill="url(#ho99)"/>
<rect x="1160.5" y="559.1" width="84.1" height="5.6" fill="url(#ho100)"/>
<rect x="1164.5" y="564.1" width="67.6" height="5.6" fill="url(#ho101)"/>
<rect x="1169.7" y="569.1" width="49.2" height="5.6" fill="url(#ho102)"/>
<rect x="1178.9" y="574.1" width="24.6" height="5.6" fill="url(#ho103)"/>
<rect x="1178.9" y="579.1" width="24.6" height="5.6" fill="url(#ho104)"/>
<rect x="1178.9" y="584.1" width="24.6" height="5.6" fill="url(#ho105)"/>
</g></g>
<g clip-path="url(#tri)"><g filter="url(#vblur)">
<rect x="1279.7" y="199.8" width="15.0" height="4.6" fill="url(#hi0)"/>
<rect x="1279.7" y="203.8" width="15.0" height="4.6" fill="url(#hi1)"/>
<rect x="1278.5" y="207.8" width="21.6" height="4.6" fill="url(#hi2)"/>
<rect x="1277.2" y="211.8" width="29.2" height="4.6" fill="url(#hi3)"/>
<rect x="1275.8" y="215.8" width="36.9" height="4.6" fill="url(#hi4)"/>
<rect x="1274.4" y="219.8" width="44.5" height="4.6" fill="url(#hi5)"/>
<rect x="1273.0" y="223.8" width="52.1" height="4.6" fill="url(#hi6)"/>
<rect x="1271.7" y="227.8" width="59.7" height="4.6" fill="url(#hi7)"/>
<rect x="1270.3" y="231.8" width="67.4" height="4.6" fill="url(#hi8)"/>
<rect x="1268.9" y="235.8" width="75.0" height="4.6" fill="url(#hi9)"/>
<rect x="1267.5" y="239.8" width="82.6" height="4.6" fill="url(#hi10)"/>
<rect x="1266.1" y="243.8" width="90.2" height="4.6" fill="url(#hi11)"/>
<rect x="1264.8" y="247.8" width="97.9" height="4.6" fill="url(#hi12)"/>
<rect x="1263.4" y="251.8" width="105.5" height="4.6" fill="url(#hi13)"/>
<rect x="1262.0" y="255.8" width="113.1" height="4.6" fill="url(#hi14)"/>
<rect x="1260.6" y="259.8" width="120.7" height="4.6" fill="url(#hi15)"/>
<rect x="1259.3" y="263.8" width="128.3" height="4.6" fill="url(#hi16)"/>
<rect x="1257.9" y="267.8" width="136.0" height="4.6" fill="url(#hi17)"/>
<rect x="1256.5" y="271.8" width="143.6" height="4.6" fill="url(#hi18)"/>
<rect x="1255.1" y="275.8" width="151.2" height="4.6" fill="url(#hi19)"/>
<rect x="1253.7" y="279.8" width="158.8" height="4.6" fill="url(#hi20)"/>
<rect x="1252.4" y="283.8" width="166.5" height="4.6" fill="url(#hi21)"/>
<rect x="1251.0" y="287.8" width="174.1" height="4.6" fill="url(#hi22)"/>
<rect x="1249.6" y="291.8" width="181.7" height="4.6" fill="url(#hi23)"/>
<rect x="1248.2" y="295.8" width="189.3" height="4.6" fill="url(#hi24)"/>
<rect x="1246.9" y="299.8" width="197.0" height="4.6" fill="url(#hi25)"/>
<rect x="1245.5" y="303.8" width="204.6" height="4.6" fill="url(#hi26)"/>
<rect x="1244.1" y="307.8" width="212.2" height="4.6" fill="url(#hi27)"/>
<rect x="1242.7" y="311.8" width="219.8" height="4.6" fill="url(#hi28)"/>
<rect x="1241.3" y="315.8" width="227.4" height="4.6" fill="url(#hi29)"/>
<rect x="1240.0" y="319.8" width="235.1" height="4.6" fill="url(#hi30)"/>
<rect x="1238.6" y="323.8" width="242.7" height="4.6" fill="url(#hi31)"/>
<rect x="1237.2" y="327.8" width="250.3" height="4.6" fill="url(#hi32)"/>
<rect x="1235.8" y="331.8" width="257.9" height="4.6" fill="url(#hi33)"/>
<rect x="1234.5" y="335.8" width="265.6" height="4.6" fill="url(#hi34)"/>
<rect x="1233.1" y="339.8" width="273.2" height="4.6" fill="url(#hi35)"/>
<rect x="1231.7" y="343.8" width="280.8" height="4.6" fill="url(#hi36)"/>
<rect x="1230.3" y="347.8" width="288.4" height="4.6" fill="url(#hi37)"/>
<rect x="1228.9" y="351.8" width="296.0" height="4.6" fill="url(#hi38)"/>
<rect x="1227.6" y="355.8" width="303.7" height="4.6" fill="url(#hi39)"/>
<rect x="1226.2" y="359.8" width="311.3" height="4.6" fill="url(#hi40)"/>
<rect x="1224.8" y="363.8" width="318.9" height="4.6" fill="url(#hi41)"/>
<rect x="1223.4" y="367.8" width="326.5" height="4.6" fill="url(#hi42)"/>
<rect x="1222.1" y="371.8" width="334.2" height="4.6" fill="url(#hi43)"/>
<rect x="1220.7" y="375.8" width="336.0" height="4.6" fill="url(#hi44)"/>
<rect x="1219.3" y="379.8" width="332.8" height="4.6" fill="url(#hi45)"/>
<rect x="1217.9" y="383.8" width="325.2" height="4.6" fill="url(#hi46)"/>
<rect x="1216.5" y="387.8" width="317.6" height="4.6" fill="url(#hi47)"/>
<rect x="1215.2" y="391.8" width="310.0" height="4.6" fill="url(#hi48)"/>
<rect x="1213.8" y="395.8" width="302.3" height="4.6" fill="url(#hi49)"/>
<rect x="1212.4" y="399.8" width="294.7" height="4.6" fill="url(#hi50)"/>
<rect x="1211.0" y="403.8" width="287.1" height="4.6" fill="url(#hi51)"/>
<rect x="1209.7" y="407.8" width="279.5" height="4.6" fill="url(#hi52)"/>
<rect x="1208.3" y="411.8" width="271.9" height="4.6" fill="url(#hi53)"/>
<rect x="1206.9" y="415.8" width="264.2" height="4.6" fill="url(#hi54)"/>
<rect x="1205.5" y="419.8" width="256.6" height="4.6" fill="url(#hi55)"/>
<rect x="1204.2" y="423.8" width="249.0" height="4.6" fill="url(#hi56)"/>
<rect x="1202.8" y="427.8" width="241.4" height="4.6" fill="url(#hi57)"/>
<rect x="1201.4" y="431.8" width="233.7" height="4.6" fill="url(#hi58)"/>
<rect x="1200.0" y="435.8" width="226.1" height="4.6" fill="url(#hi59)"/>
<rect x="1198.6" y="439.8" width="218.5" height="4.6" fill="url(#hi60)"/>
<rect x="1197.3" y="443.8" width="210.9" height="4.6" fill="url(#hi61)"/>
<rect x="1195.9" y="447.8" width="203.2" height="4.6" fill="url(#hi62)"/>
<rect x="1194.5" y="451.8" width="195.6" height="4.6" fill="url(#hi63)"/>
<rect x="1193.1" y="455.8" width="188.0" height="4.6" fill="url(#hi64)"/>
<rect x="1191.8" y="459.8" width="180.4" height="4.6" fill="url(#hi65)"/>
<rect x="1190.4" y="463.8" width="172.8" height="4.6" fill="url(#hi66)"/>
<rect x="1189.0" y="467.8" width="165.1" height="4.6" fill="url(#hi67)"/>
<rect x="1187.6" y="471.8" width="157.5" height="4.6" fill="url(#hi68)"/>
<rect x="1186.2" y="475.8" width="149.9" height="4.6" fill="url(#hi69)"/>
<rect x="1184.9" y="479.8" width="142.3" height="4.6" fill="url(#hi70)"/>
<rect x="1183.5" y="483.8" width="134.6" height="4.6" fill="url(#hi71)"/>
<rect x="1182.1" y="487.8" width="127.0" height="4.6" fill="url(#hi72)"/>
<rect x="1180.7" y="491.8" width="119.4" height="4.6" fill="url(#hi73)"/>
<rect x="1179.4" y="495.8" width="111.8" height="4.6" fill="url(#hi74)"/>
<rect x="1178.0" y="499.8" width="104.1" height="4.6" fill="url(#hi75)"/>
<rect x="1176.6" y="503.8" width="96.5" height="4.6" fill="url(#hi76)"/>
<rect x="1175.2" y="507.8" width="88.9" height="4.6" fill="url(#hi77)"/>
<rect x="1173.8" y="511.8" width="81.3" height="4.6" fill="url(#hi78)"/>
<rect x="1172.5" y="515.8" width="73.7" height="4.6" fill="url(#hi79)"/>
<rect x="1171.1" y="519.8" width="66.0" height="4.6" fill="url(#hi80)"/>
<rect x="1169.7" y="523.8" width="58.4" height="4.6" fill="url(#hi81)"/>
<rect x="1168.3" y="527.8" width="50.8" height="4.6" fill="url(#hi82)"/>
<rect x="1167.0" y="531.8" width="43.2" height="4.6" fill="url(#hi83)"/>
<rect x="1165.6" y="535.8" width="35.5" height="4.6" fill="url(#hi84)"/>
<rect x="1164.2" y="539.8" width="27.9" height="4.6" fill="url(#hi85)"/>
<rect x="1163.5" y="543.8" width="19.6" height="4.6" fill="url(#hi86)"/>
<rect x="1163.5" y="547.8" width="15.0" height="4.6" fill="url(#hi87)"/>
<rect x="1163.5" y="551.8" width="15.0" height="4.6" fill="url(#hi88)"/>
</g></g>
<rect x="1054.5" y="56" width="653.0" height="528.5" fill="none" stroke="#9a9a9a" stroke-width="1.4"/>
<line x1="1053.7" y1="584.5" x2="1053.7" y2="591.0" stroke="#d0d0d0" stroke-width="1.4" />
<text x="1053.7" y="607.7" font-size="15.2" fill="#dcdcdc" text-anchor="middle" >0</text>
<line x1="1049.0" y1="584.0" x2="1054.5" y2="584.0" stroke="#d0d0d0" stroke-width="1.4" />
<text x="1047.5" y="591.7" font-size="15.2" fill="#dcdcdc" text-anchor="end" >0</text>
<line x1="1131.4" y1="584.5" x2="1131.4" y2="591.0" stroke="#d0d0d0" stroke-width="1.4" />
<text x="1131.4" y="607.7" font-size="15.2" fill="#dcdcdc" text-anchor="middle" >0.1</text>
<line x1="1049.0" y1="521.3" x2="1054.5" y2="521.3" stroke="#d0d0d0" stroke-width="1.4" />
<text x="1047.5" y="527.5" font-size="15.2" fill="#dcdcdc" text-anchor="end" >0.1</text>
<line x1="1209.2" y1="584.5" x2="1209.2" y2="591.0" stroke="#d0d0d0" stroke-width="1.4" />
<text x="1209.2" y="607.7" font-size="15.2" fill="#dcdcdc" text-anchor="middle" >0.2</text>
<line x1="1049.0" y1="458.6" x2="1054.5" y2="458.6" stroke="#d0d0d0" stroke-width="1.4" />
<text x="1047.5" y="464.8" font-size="15.2" fill="#dcdcdc" text-anchor="end" >0.2</text>
<line x1="1286.9" y1="584.5" x2="1286.9" y2="591.0" stroke="#d0d0d0" stroke-width="1.4" />
<text x="1286.9" y="607.7" font-size="15.2" fill="#dcdcdc" text-anchor="middle" >0.3</text>
<line x1="1049.0" y1="395.9" x2="1054.5" y2="395.9" stroke="#d0d0d0" stroke-width="1.4" />
<text x="1047.5" y="402.1" font-size="15.2" fill="#dcdcdc" text-anchor="end" >0.3</text>
<line x1="1364.7" y1="584.5" x2="1364.7" y2="591.0" stroke="#d0d0d0" stroke-width="1.4" />
<text x="1364.7" y="607.7" font-size="15.2" fill="#dcdcdc" text-anchor="middle" >0.4</text>
<line x1="1049.0" y1="333.2" x2="1054.5" y2="333.2" stroke="#d0d0d0" stroke-width="1.4" />
<text x="1047.5" y="339.4" font-size="15.2" fill="#dcdcdc" text-anchor="end" >0.4</text>
<line x1="1442.4" y1="584.5" x2="1442.4" y2="591.0" stroke="#d0d0d0" stroke-width="1.4" />
<text x="1442.4" y="607.7" font-size="15.2" fill="#dcdcdc" text-anchor="middle" >0.5</text>
<line x1="1049.0" y1="270.5" x2="1054.5" y2="270.5" stroke="#d0d0d0" stroke-width="1.4" />
<text x="1047.5" y="276.7" font-size="15.2" fill="#dcdcdc" text-anchor="end" >0.5</text>
<line x1="1520.1" y1="584.5" x2="1520.1" y2="591.0" stroke="#d0d0d0" stroke-width="1.4" />
<text x="1520.1" y="607.7" font-size="15.2" fill="#dcdcdc" text-anchor="middle" >0.6</text>
<line x1="1049.0" y1="207.8" x2="1054.5" y2="207.8" stroke="#d0d0d0" stroke-width="1.4" />
<text x="1047.5" y="214.0" font-size="15.2" fill="#dcdcdc" text-anchor="end" >0.6</text>
<line x1="1597.9" y1="584.5" x2="1597.9" y2="591.0" stroke="#d0d0d0" stroke-width="1.4" />
<text x="1597.9" y="607.7" font-size="15.2" fill="#dcdcdc" text-anchor="middle" >0.7</text>
<line x1="1049.0" y1="145.1" x2="1054.5" y2="145.1" stroke="#d0d0d0" stroke-width="1.4" />
<text x="1047.5" y="151.3" font-size="15.2" fill="#dcdcdc" text-anchor="end" >0.7</text>
<line x1="1675.6" y1="584.5" x2="1675.6" y2="591.0" stroke="#d0d0d0" stroke-width="1.4" />
<text x="1675.6" y="607.7" font-size="15.2" fill="#dcdcdc" text-anchor="middle" >0.8</text>
<line x1="1049.0" y1="82.4" x2="1054.5" y2="82.4" stroke="#d0d0d0" stroke-width="1.4" />
<text x="1047.5" y="88.6" font-size="15.2" fill="#dcdcdc" text-anchor="end" >0.8</text>
<rect x="1289.3" y="370.2" width="15" height="15" fill="none" stroke="#000" stroke-width="2.6"/>
<rect x="1357.0" y="346.8" width="15.4" height="15.4" fill="none" stroke="#ffffff" stroke-opacity="0.86" stroke-width="1.9"/>
<rect x="1339.9" y="351.2" width="15.4" height="15.4" fill="none" stroke="#ffffff" stroke-opacity="0.86" stroke-width="1.9"/>
<rect x="1239.3" y="408.6" width="15.4" height="15.4" fill="none" stroke="#ffffff" stroke-opacity="0.86" stroke-width="1.9"/>
<rect x="1309.7" y="306.4" width="15.4" height="15.4" fill="none" stroke="#ffffff" stroke-opacity="0.86" stroke-width="1.9"/>
<rect x="1255.2" y="416.0" width="15.4" height="15.4" fill="none" stroke="#ffffff" stroke-opacity="0.86" stroke-width="1.9"/>
<rect x="1250.8" y="348.1" width="15.4" height="15.4" fill="none" stroke="#ffffff" stroke-opacity="0.86" stroke-width="1.9"/>
<rect x="1443.5" y="319.5" width="15.4" height="15.4" fill="none" stroke="#ffffff" stroke-opacity="0.86" stroke-width="1.9"/>
<rect x="1213.7" y="454.9" width="15.4" height="15.4" fill="none" stroke="#ffffff" stroke-opacity="0.86" stroke-width="1.9"/>
<rect x="1405.0" y="379.4" width="15.4" height="15.4" fill="none" stroke="#ffffff" stroke-opacity="0.86" stroke-width="1.9"/>
<rect x="1271.8" y="436.9" width="15.4" height="15.4" fill="none" stroke="#ffffff" stroke-opacity="0.86" stroke-width="1.9"/>
<rect x="1337.9" y="265.0" width="15.4" height="15.4" fill="none" stroke="#ffffff" stroke-opacity="0.86" stroke-width="1.9"/>
<rect x="1414.7" y="299.2" width="15.4" height="15.4" fill="none" stroke="#ffffff" stroke-opacity="0.86" stroke-width="1.9"/>
<rect x="1195.7" y="487.1" width="15.4" height="15.4" fill="none" stroke="#ffffff" stroke-opacity="0.86" stroke-width="1.9"/>
<rect x="1282.9" y="267.8" width="15.4" height="15.4" fill="none" stroke="#ffffff" stroke-opacity="0.86" stroke-width="1.9"/>
<rect x="1464.0" y="376.3" width="15.4" height="15.4" fill="none" stroke="#ffffff" stroke-opacity="0.86" stroke-width="1.9"/>
<rect x="1393.7" y="278.8" width="15.4" height="15.4" fill="none" stroke="#ffffff" stroke-opacity="0.86" stroke-width="1.9"/>
<rect x="1335.8" y="421.1" width="15.4" height="15.4" fill="none" stroke="#ffffff" stroke-opacity="0.86" stroke-width="1.9"/>
<rect x="1206.7" y="405.9" width="15.4" height="15.4" fill="none" stroke="#ffffff" stroke-opacity="0.86" stroke-width="1.9"/>
<circle cx="1256.4" cy="437.2" r="5.1" fill="#000000" stroke="#0a0a0a" stroke-width="1.1"/>
<circle cx="1295.0" cy="378.8" r="5.1" fill="#b4b4b4" stroke="#0a0a0a" stroke-width="1.1"/>
<circle cx="1294.5" cy="379.5" r="5.1" fill="#cfcfcf" stroke="#0a0a0a" stroke-width="1.1"/>
<circle cx="1291.9" cy="383.2" r="5.1" fill="#ffffff" stroke="#0a0a0a" stroke-width="1.1"/>
<circle cx="1359.4" cy="351.8" r="5.1" fill="#6e5040" stroke="#0a0a0a" stroke-width="1.1"/>
<circle cx="1342.3" cy="357.4" r="5.1" fill="#c0907c" stroke="#0a0a0a" stroke-width="1.1"/>
<circle cx="1249.4" cy="423.7" r="5.1" fill="#5c7898" stroke="#0a0a0a" stroke-width="1.1"/>
<circle cx="1324.2" cy="310.0" r="5.1" fill="#52683e" stroke="#0a0a0a" stroke-width="1.1"/>
<circle cx="1259.6" cy="431.6" r="5.1" fill="#8480a8" stroke="#0a0a0a" stroke-width="1.1"/>
<circle cx="1266.4" cy="360.3" r="5.1" fill="#74b4a2" stroke="#0a0a0a" stroke-width="1.1"/>
<circle cx="1450.5" cy="307.0" r="5.1" fill="#d8883a" stroke="#0a0a0a" stroke-width="1.1"/>
<circle cx="1223.3" cy="471.6" r="5.1" fill="#5a66a8" stroke="#0a0a0a" stroke-width="1.1"/>
<circle cx="1394.3" cy="387.0" r="5.1" fill="#c2565e" stroke="#0a0a0a" stroke-width="1.1"/>
<circle cx="1269.5" cy="456.5" r="5.1" fill="#5e3e68" stroke="#0a0a0a" stroke-width="1.1"/>
<circle cx="1355.0" cy="259.9" r="5.1" fill="#a0b450" stroke="#0a0a0a" stroke-width="1.1"/>
<circle cx="1422.4" cy="285.0" r="5.1" fill="#e6a84a" stroke="#0a0a0a" stroke-width="1.1"/>
<circle cx="1200.4" cy="508.6" r="5.1" fill="#3e4690" stroke="#0a0a0a" stroke-width="1.1"/>
<circle cx="1304.3" cy="268.9" r="5.1" fill="#4c8c4e" stroke="#0a0a0a" stroke-width="1.1"/>
<circle cx="1464.4" cy="382.9" r="5.1" fill="#b03a42" stroke="#0a0a0a" stroke-width="1.1"/>
<circle cx="1405.4" cy="260.8" r="5.1" fill="#eec848" stroke="#0a0a0a" stroke-width="1.1"/>
<circle cx="1326.8" cy="434.8" r="5.1" fill="#b8588e" stroke="#0a0a0a" stroke-width="1.1"/>
<circle cx="1223.3" cy="423.7" r="5.1" fill="#0e8aa4" stroke="#0a0a0a" stroke-width="1.1"/>
<rect x="1423.5" y="542.5" width="280.5" height="28.5" fill="#333333" />
<text x="1454.5" y="565.3" font-size="19.5" fill="#f0f0f0" textLength="218" lengthAdjust="spacingAndGlyphs" stroke="#f0f0f0" stroke-width="0.3">RGB Triplet: 0, 133, 163</text>
<rect x="1510.5" y="63.5" width="190.5" height="156" fill="url(#insd)" />
<path d="M1631.3 63.5 H1701 V219.5 H1580 Z" fill="url(#insb)"/>
<rect x="1510.5" y="63.5" width="190.5" height="156" fill="none" stroke="#8e8e8e" stroke-width="1.5"/>
<rect x="1597.7" y="134" width="15.6" height="16" fill="none" stroke="#e8f4ff" stroke-width="1.6"/>
<circle cx="1639.5" cy="194" r="4.9" fill="#0e86a4" stroke="#0a1420" stroke-width="1"/>
</g>
<g id="table">
<rect x="331" y="640.5" width="1240.5" height="29.5" fill="url(#thead)" />
<rect x="331" y="670" width="9" height="197.5" fill="url(#tstrip)" />
<rect x="331" y="640.5" width="9" height="29.5" fill="#000000" />
<text transform="translate(422.8,661.3) scale(0.64,1)" font-size="16" fill="#ececec" >Black</text>
<text transform="translate(454,661.3) scale(0.64,1)" font-size="16" fill="#ececec" >Gray 35</text>
<text transform="translate(496.5,661.3) scale(0.64,1)" font-size="16" fill="#ececec" >Gray 50</text>
<text transform="translate(539,661.3) scale(0.64,1)" font-size="16" fill="#ececec" >Gray 65</text>
<text transform="translate(581.4,661.3) scale(0.64,1)" font-size="16" fill="#ececec" >Gray 80</text>
<text transform="translate(624.2,661.3) scale(0.64,1)" font-size="16" fill="#ececec" >White</text>
<text transform="translate(665.5,661.3) scale(0.64,1)" font-size="16" fill="#ececec" >Dark Skin</text>
<text transform="translate(715.8,661.3) scale(0.64,1)" font-size="16" fill="#ececec" >Light Skin</text>
<text transform="translate(767.1,661.3) scale(0.64,1)" font-size="16" fill="#ececec" >Blue Sky</text>
<text transform="translate(812.9,661.3) scale(0.64,1)" font-size="16" fill="#ececec" >Foliage</text>
<text transform="translate(852.8,661.3) scale(0.64,1)" font-size="16" fill="#ececec" >Blue Flower</text>
<text transform="translate(914.9,661.3) scale(0.64,1)" font-size="16" fill="#ececec" >Bluish Green</text>
<text transform="translate(981.7,661.3) scale(0.64,1)" font-size="16" fill="#ececec" >Orange</text>
<text transform="translate(1022.3,661.3) scale(0.64,1)" font-size="16" fill="#ececec" >Purplish Blue</text>
<text transform="translate(1090.8,661.3) scale(0.64,1)" font-size="16" fill="#ececec" >Moderate Red</text>
<text transform="translate(1164.9,661.3) scale(0.64,1)" font-size="16" fill="#ececec" >Purple</text>
<text transform="translate(1202.1,661.3) scale(0.64,1)" font-size="16" fill="#ececec" >Yellow Green</text>
<text transform="translate(1270.6,661.3) scale(0.64,1)" font-size="16" fill="#ececec" >Orange Yellow</text>
<text transform="translate(1344.7,661.3) scale(0.64,1)" font-size="16" fill="#ececec" >Blue</text>
<text transform="translate(1379.3,661.3) scale(0.64,1)" font-size="16" fill="#ececec" >Green</text>
<text transform="translate(1414.7,661.3) scale(0.64,1)" font-size="16" fill="#ececec" >Red</text>
<text transform="translate(1449.7,661.3) scale(0.64,1)" font-size="16" fill="#ececec" >Yellow</text>
<text transform="translate(1490.6,661.3) scale(0.64,1)" font-size="16" fill="#ececec" >Magenta</text>
<text transform="translate(1539,661.3) scale(0.64,1)" font-size="16" fill="#ececec" >Cyan</text>
<rect x="340" y="669.8" width="1231.5" height="28" fill="#404040" />
<text x="343" y="690.8" font-size="16.5" fill="#ececec" textLength="40.2" lengthAdjust="spacingAndGlyphs" >x: CIE31</text>
<text transform="translate(422.8,690.8) scale(0.675,1)" font-size="16.5" fill="#ececec" >0.26</text>
<text transform="translate(454,690.8) scale(0.675,1)" font-size="16.5" fill="#ececec" >0.31</text>
<text transform="translate(496.5,690.8) scale(0.675,1)" font-size="16.5" fill="#ececec" >0.31</text>
<text transform="translate(539,690.8) scale(0.675,1)" font-size="16.5" fill="#ececec" >0.31</text>
<text transform="translate(581.4,690.8) scale(0.675,1)" font-size="16.5" fill="#ececec" >0.31</text>
<text transform="translate(624.2,690.8) scale(0.675,1)" font-size="16.5" fill="#ececec" >0.31</text>
<text transform="translate(665.5,690.8) scale(0.675,1)" font-size="16.5" fill="#ececec" >0.39</text>
<text transform="translate(715.8,690.8) scale(0.675,1)" font-size="16.5" fill="#ececec" >0.37</text>
<text transform="translate(767.1,690.8) scale(0.675,1)" font-size="16.5" fill="#ececec" >0.25</text>
<text transform="translate(812.9,690.8) scale(0.675,1)" font-size="16.5" fill="#ececec" >0.35</text>
<text transform="translate(852.8,690.8) scale(0.675,1)" font-size="16.5" fill="#ececec" >0.26</text>
<text transform="translate(914.9,690.8) scale(0.675,1)" font-size="16.5" fill="#ececec" >0.27</text>
<text transform="translate(981.7,690.8) scale(0.675,1)" font-size="16.5" fill="#ececec" >0.51</text>
<text transform="translate(1022.3,690.8) scale(0.675,1)" font-size="16.5" fill="#ececec" >0.22</text>
<text transform="translate(1090.8,690.8) scale(0.675,1)" font-size="16.5" fill="#ececec" >0.44</text>
<text transform="translate(1164.9,690.8) scale(0.675,1)" font-size="16.5" fill="#ececec" >0.28</text>
<text transform="translate(1202.1,690.8) scale(0.675,1)" font-size="16.5" fill="#ececec" >0.39</text>
<text transform="translate(1270.6,690.8) scale(0.675,1)" font-size="16.5" fill="#ececec" >0.47</text>
<text transform="translate(1344.7,690.8) scale(0.675,1)" font-size="16.5" fill="#ececec" >0.19</text>
<text transform="translate(1379.3,690.8) scale(0.675,1)" font-size="16.5" fill="#ececec" >0.32</text>
<text transform="translate(1414.7,690.8) scale(0.675,1)" font-size="16.5" fill="#ececec" >0.53</text>
<text transform="translate(1449.7,690.8) scale(0.675,1)" font-size="16.5" fill="#ececec" >0.45</text>
<text transform="translate(1490.6,690.8) scale(0.675,1)" font-size="16.5" fill="#ececec" >0.35</text>
<text transform="translate(1539,690.8) scale(0.675,1)" font-size="16.5" fill="#ececec" >0.22</text>
<rect x="340" y="697.8" width="1231.5" height="28" fill="#808080" />
<text x="343" y="718.8" font-size="16.5" fill="#ececec" textLength="40.2" lengthAdjust="spacingAndGlyphs" >y: CIE31</text>
<text transform="translate(422.8,718.8) scale(0.675,1)" font-size="16.5" fill="#ececec" >0.23</text>
<text transform="translate(454,718.8) scale(0.675,1)" font-size="16.5" fill="#ececec" >0.32</text>
<text transform="translate(496.5,718.8) scale(0.675,1)" font-size="16.5" fill="#ececec" >0.32</text>
<text transform="translate(539,718.8) scale(0.675,1)" font-size="16.5" fill="#ececec" >0.32</text>
<text transform="translate(581.4,718.8) scale(0.675,1)" font-size="16.5" fill="#ececec" >0.32</text>
<text transform="translate(624.2,718.8) scale(0.675,1)" font-size="16.5" fill="#ececec" >0.32</text>
<text transform="translate(665.5,718.8) scale(0.675,1)" font-size="16.5" fill="#ececec" >0.37</text>
<text transform="translate(715.8,718.8) scale(0.675,1)" font-size="16.5" fill="#ececec" >0.36</text>
<text transform="translate(767.1,718.8) scale(0.675,1)" font-size="16.5" fill="#ececec" >0.25</text>
<text transform="translate(812.9,718.8) scale(0.675,1)" font-size="16.5" fill="#ececec" >0.43</text>
<text transform="translate(852.8,718.8) scale(0.675,1)" font-size="16.5" fill="#ececec" >0.24</text>
<text transform="translate(914.9,718.8) scale(0.675,1)" font-size="16.5" fill="#ececec" >0.36</text>
<text transform="translate(981.7,718.8) scale(0.675,1)" font-size="16.5" fill="#ececec" >0.44</text>
<text transform="translate(1022.3,718.8) scale(0.675,1)" font-size="16.5" fill="#ececec" >0.18</text>
<text transform="translate(1090.8,718.8) scale(0.675,1)" font-size="16.5" fill="#ececec" >0.31</text>
<text transform="translate(1164.9,718.8) scale(0.675,1)" font-size="16.5" fill="#ececec" >0.20</text>
<text transform="translate(1202.1,718.8) scale(0.675,1)" font-size="16.5" fill="#ececec" >0.52</text>
<text transform="translate(1270.6,718.8) scale(0.675,1)" font-size="16.5" fill="#ececec" >0.48</text>
<text transform="translate(1344.7,718.8) scale(0.675,1)" font-size="16.5" fill="#ececec" >0.12</text>
<text transform="translate(1379.3,718.8) scale(0.675,1)" font-size="16.5" fill="#ececec" >0.50</text>
<text transform="translate(1414.7,718.8) scale(0.675,1)" font-size="16.5" fill="#ececec" >0.32</text>
<text transform="translate(1449.7,718.8) scale(0.675,1)" font-size="16.5" fill="#ececec" >0.51</text>
<text transform="translate(1490.6,718.8) scale(0.675,1)" font-size="16.5" fill="#ececec" >0.24</text>
<text transform="translate(1539,718.8) scale(0.675,1)" font-size="16.5" fill="#ececec" >0.25</text>
<rect x="340" y="725.8" width="1231.5" height="28" fill="#404040" />
<text x="343" y="746.8" font-size="16.5" fill="#ececec" textLength="6" lengthAdjust="spacingAndGlyphs" >Y</text>
<text transform="translate(422.8,746.8) scale(0.675,1)" font-size="16.5" fill="#ececec" >0.33</text>
<text transform="translate(454,746.8) scale(0.675,1)" font-size="16.5" fill="#ececec" >123.67</text>
<text transform="translate(496.5,746.8) scale(0.675,1)" font-size="16.5" fill="#ececec" >175.55</text>
<text transform="translate(539,746.8) scale(0.675,1)" font-size="16.5" fill="#ececec" >222.58</text>
<text transform="translate(581.4,746.8) scale(0.675,1)" font-size="16.5" fill="#ececec" >270.06</text>
<text transform="translate(624.2,746.8) scale(0.675,1)" font-size="16.5" fill="#ececec" >344.69</text>
<text transform="translate(665.5,746.8) scale(0.675,1)" font-size="16.5" fill="#ececec" >35.69</text>
<text transform="translate(715.8,746.8) scale(0.675,1)" font-size="16.5" fill="#ececec" >123.70</text>
<text transform="translate(767.1,746.8) scale(0.675,1)" font-size="16.5" fill="#ececec" >67.57</text>
<text transform="translate(812.9,746.8) scale(0.675,1)" font-size="16.5" fill="#ececec" >47.40</text>
<text transform="translate(852.8,746.8) scale(0.675,1)" font-size="16.5" fill="#ececec" >82.95</text>
<text transform="translate(914.9,746.8) scale(0.675,1)" font-size="16.5" fill="#ececec" >151.96</text>
<text transform="translate(981.7,746.8) scale(0.675,1)" font-size="16.5" fill="#ececec" >96.39</text>
<text transform="translate(1022.3,746.8) scale(0.675,1)" font-size="16.5" fill="#ececec" >42.26</text>
<text transform="translate(1090.8,746.8) scale(0.675,1)" font-size="16.5" fill="#ececec" >64.22</text>
<text transform="translate(1164.9,746.8) scale(0.675,1)" font-size="16.5" fill="#ececec" >22.72</text>
<text transform="translate(1202.1,746.8) scale(0.675,1)" font-size="16.5" fill="#ececec" >154.08</text>
<text transform="translate(1270.6,746.8) scale(0.675,1)" font-size="16.5" fill="#ececec" >147.60</text>
<text transform="translate(1344.7,746.8) scale(0.675,1)" font-size="16.5" fill="#ececec" >20.25</text>
<text transform="translate(1379.3,746.8) scale(0.675,1)" font-size="16.5" fill="#ececec" >83.35</text>
<text transform="translate(1414.7,746.8) scale(0.675,1)" font-size="16.5" fill="#ececec" >37.01</text>
<text transform="translate(1449.7,746.8) scale(0.675,1)" font-size="16.5" fill="#ececec" >204.91</text>
<text transform="translate(1490.6,746.8) scale(0.675,1)" font-size="16.5" fill="#ececec" >64.90</text>
<text transform="translate(1539,746.8) scale(0.675,1)" font-size="16.5" fill="#ececec" >67.65</text>
<rect x="340" y="753.8" width="1231.5" height="28" fill="#808080" />
<text x="343" y="774.8" font-size="16.5" fill="#ececec" textLength="72.2" lengthAdjust="spacingAndGlyphs" >Target x:CIE31</text>
<text transform="translate(422.8,774.8) scale(0.675,1)" font-size="16.5" fill="#ececec" >0.31</text>
<text transform="translate(454,774.8) scale(0.675,1)" font-size="16.5" fill="#ececec" >0.31</text>
<text transform="translate(496.5,774.8) scale(0.675,1)" font-size="16.5" fill="#ececec" >0.31</text>
<text transform="translate(539,774.8) scale(0.675,1)" font-size="16.5" fill="#ececec" >0.31</text>
<text transform="translate(581.4,774.8) scale(0.675,1)" font-size="16.5" fill="#ececec" >0.31</text>
<text transform="translate(624.2,774.8) scale(0.675,1)" font-size="16.5" fill="#ececec" >0.31</text>
<text transform="translate(665.5,774.8) scale(0.675,1)" font-size="16.5" fill="#ececec" >0.40</text>
<text transform="translate(715.8,774.8) scale(0.675,1)" font-size="16.5" fill="#ececec" >0.38</text>
<text transform="translate(767.1,774.8) scale(0.675,1)" font-size="16.5" fill="#ececec" >0.25</text>
<text transform="translate(812.9,774.8) scale(0.675,1)" font-size="16.5" fill="#ececec" >0.34</text>
<text transform="translate(852.8,774.8) scale(0.675,1)" font-size="16.5" fill="#ececec" >0.27</text>
<text transform="translate(914.9,774.8) scale(0.675,1)" font-size="16.5" fill="#ececec" >0.26</text>
<text transform="translate(981.7,774.8) scale(0.675,1)" font-size="16.5" fill="#ececec" >0.51</text>
<text transform="translate(1022.3,774.8) scale(0.675,1)" font-size="16.5" fill="#ececec" >0.22</text>
<text transform="translate(1090.8,774.8) scale(0.675,1)" font-size="16.5" fill="#ececec" >0.46</text>
<text transform="translate(1164.9,774.8) scale(0.675,1)" font-size="16.5" fill="#ececec" >0.29</text>
<text transform="translate(1202.1,774.8) scale(0.675,1)" font-size="16.5" fill="#ececec" >0.38</text>
<text transform="translate(1270.6,774.8) scale(0.675,1)" font-size="16.5" fill="#ececec" >0.47</text>
<text transform="translate(1344.7,774.8) scale(0.675,1)" font-size="16.5" fill="#ececec" >0.19</text>
<text transform="translate(1379.3,774.8) scale(0.675,1)" font-size="16.5" fill="#ececec" >0.31</text>
<text transform="translate(1414.7,774.8) scale(0.675,1)" font-size="16.5" fill="#ececec" >0.54</text>
<text transform="translate(1449.7,774.8) scale(0.675,1)" font-size="16.5" fill="#ececec" >0.45</text>
<text transform="translate(1490.6,774.8) scale(0.675,1)" font-size="16.5" fill="#ececec" >0.37</text>
<text transform="translate(1539,774.8) scale(0.675,1)" font-size="16.5" fill="#ececec" >0.21</text>
<rect x="340" y="781.8" width="1231.5" height="28" fill="#404040" />
<text x="343" y="802.8" font-size="16.5" fill="#ececec" textLength="72.2" lengthAdjust="spacingAndGlyphs" >Target y:CIE31</text>
<text transform="translate(422.8,802.8) scale(0.675,1)" font-size="16.5" fill="#ececec" >0.33</text>
<text transform="translate(454,802.8) scale(0.675,1)" font-size="16.5" fill="#ececec" >0.33</text>
<text transform="translate(496.5,802.8) scale(0.675,1)" font-size="16.5" fill="#ececec" >0.33</text>
<text transform="translate(539,802.8) scale(0.675,1)" font-size="16.5" fill="#ececec" >0.33</text>
<text transform="translate(581.4,802.8) scale(0.675,1)" font-size="16.5" fill="#ececec" >0.33</text>
<text transform="translate(624.2,802.8) scale(0.675,1)" font-size="16.5" fill="#ececec" >0.33</text>
<text transform="translate(665.5,802.8) scale(0.675,1)" font-size="16.5" fill="#ececec" >0.36</text>
<text transform="translate(715.8,802.8) scale(0.675,1)" font-size="16.5" fill="#ececec" >0.36</text>
<text transform="translate(767.1,802.8) scale(0.675,1)" font-size="16.5" fill="#ececec" >0.27</text>
<text transform="translate(812.9,802.8) scale(0.675,1)" font-size="16.5" fill="#ececec" >0.43</text>
<text transform="translate(852.8,802.8) scale(0.675,1)" font-size="16.5" fill="#ececec" >0.25</text>
<text transform="translate(914.9,802.8) scale(0.675,1)" font-size="16.5" fill="#ececec" >0.36</text>
<text transform="translate(981.7,802.8) scale(0.675,1)" font-size="16.5" fill="#ececec" >0.41</text>
<text transform="translate(1022.3,802.8) scale(0.675,1)" font-size="16.5" fill="#ececec" >0.19</text>
<text transform="translate(1090.8,802.8) scale(0.675,1)" font-size="16.5" fill="#ececec" >0.31</text>
<text transform="translate(1164.9,802.8) scale(0.675,1)" font-size="16.5" fill="#ececec" >0.22</text>
<text transform="translate(1202.1,802.8) scale(0.675,1)" font-size="16.5" fill="#ececec" >0.49</text>
<text transform="translate(1270.6,802.8) scale(0.675,1)" font-size="16.5" fill="#ececec" >0.44</text>
<text transform="translate(1344.7,802.8) scale(0.675,1)" font-size="16.5" fill="#ececec" >0.14</text>
<text transform="translate(1379.3,802.8) scale(0.675,1)" font-size="16.5" fill="#ececec" >0.49</text>
<text transform="translate(1414.7,802.8) scale(0.675,1)" font-size="16.5" fill="#ececec" >0.32</text>
<text transform="translate(1449.7,802.8) scale(0.675,1)" font-size="16.5" fill="#ececec" >0.47</text>
<text transform="translate(1490.6,802.8) scale(0.675,1)" font-size="16.5" fill="#ececec" >0.25</text>
<text transform="translate(1539,802.8) scale(0.675,1)" font-size="16.5" fill="#ececec" >0.27</text>
<rect x="340" y="809.8" width="1231.5" height="28" fill="#808080" />
<text x="343" y="830.8" font-size="16.5" fill="#ececec" textLength="42" lengthAdjust="spacingAndGlyphs" >Target Y</text>
<text transform="translate(422.8,830.8) scale(0.675,1)" font-size="16.5" fill="#ececec" >0.00</text>
<text transform="translate(454,830.8) scale(0.675,1)" font-size="16.5" fill="#ececec" >117.85</text>
<text transform="translate(496.5,830.8) scale(0.675,1)" font-size="16.5" fill="#ececec" >169.25</text>
<text transform="translate(539,830.8) scale(0.675,1)" font-size="16.5" fill="#ececec" >219.77</text>
<text transform="translate(581.4,830.8) scale(0.675,1)" font-size="16.5" fill="#ececec" >272.75</text>
<text transform="translate(624.2,830.8) scale(0.675,1)" font-size="16.5" fill="#ececec" >344.69</text>
<text transform="translate(665.5,830.8) scale(0.675,1)" font-size="16.5" fill="#ececec" >34.72</text>
<text transform="translate(715.8,830.8) scale(0.675,1)" font-size="16.5" fill="#ececec" >120.28</text>
<text transform="translate(767.1,830.8) scale(0.675,1)" font-size="16.5" fill="#ececec" >64.45</text>
<text transform="translate(812.9,830.8) scale(0.675,1)" font-size="16.5" fill="#ececec" >44.92</text>
<text transform="translate(852.8,830.8) scale(0.675,1)" font-size="16.5" fill="#ececec" >80.38</text>
<text transform="translate(914.9,830.8) scale(0.675,1)" font-size="16.5" fill="#ececec" >144.33</text>
<text transform="translate(981.7,830.8) scale(0.675,1)" font-size="16.5" fill="#ececec" >97.71</text>
<text transform="translate(1022.3,830.8) scale(0.675,1)" font-size="16.5" fill="#ececec" >40.51</text>
<text transform="translate(1090.8,830.8) scale(0.675,1)" font-size="16.5" fill="#ececec" >64.37</text>
<text transform="translate(1164.9,830.8) scale(0.675,1)" font-size="16.5" fill="#ececec" >23.01</text>
<text transform="translate(1202.1,830.8) scale(0.675,1)" font-size="16.5" fill="#ececec" >147.38</text>
<text transform="translate(1270.6,830.8) scale(0.675,1)" font-size="16.5" fill="#ececec" >146.54</text>
<text transform="translate(1344.7,830.8) scale(0.675,1)" font-size="16.5" fill="#ececec" >21.52</text>
<text transform="translate(1379.3,830.8) scale(0.675,1)" font-size="16.5" fill="#ececec" >79.19</text>
<text transform="translate(1414.7,830.8) scale(0.675,1)" font-size="16.5" fill="#ececec" >40.20</text>
<text transform="translate(1449.7,830.8) scale(0.675,1)" font-size="16.5" fill="#ececec" >203.24</text>
<text transform="translate(1490.6,830.8) scale(0.675,1)" font-size="16.5" fill="#ececec" >64.89</text>
<text transform="translate(1539,830.8) scale(0.675,1)" font-size="16.5" fill="#ececec" >66.93</text>
<rect x="340" y="837.8" width="1231.5" height="28" fill="#404040" />
<text x="343" y="858.8" font-size="16.5" fill="#ececec" textLength="42.8" lengthAdjust="spacingAndGlyphs" >ΔE 2000</text>
<text transform="translate(422.8,858.8) scale(0.675,1)" font-size="16.5" fill="#ececec" >1.79</text>
<text transform="translate(454,858.8) scale(0.675,1)" font-size="16.5" fill="#ececec" >2.30</text>
<text transform="translate(496.5,858.8) scale(0.675,1)" font-size="16.5" fill="#ececec" >2.09</text>
<text transform="translate(539,858.8) scale(0.675,1)" font-size="16.5" fill="#ececec" >2.08</text>
<text transform="translate(581.4,858.8) scale(0.675,1)" font-size="16.5" fill="#ececec" >2.49</text>
<text transform="translate(624.2,858.8) scale(0.675,1)" font-size="16.5" fill="#ececec" >4.55</text>
<text transform="translate(665.5,858.8) scale(0.675,1)" font-size="16.5" fill="#ececec" >2.27</text>
<text transform="translate(715.8,858.8) scale(0.675,1)" font-size="16.5" fill="#ececec" >3.30</text>
<text transform="translate(767.1,858.8) scale(0.675,1)" font-size="16.5" fill="#ececec" >5.65</text>
<text transform="translate(812.9,858.8) scale(0.675,1)" font-size="16.5" fill="#ececec" >1.79</text>
<text transform="translate(852.8,858.8) scale(0.675,1)" font-size="16.5" fill="#ececec" >2.83</text>
<text transform="translate(914.9,858.8) scale(0.675,1)" font-size="16.5" fill="#ececec" >2.99</text>
<text transform="translate(981.7,858.8) scale(0.675,1)" font-size="16.5" fill="#ececec" >8.97</text>
<text transform="translate(1022.3,858.8) scale(0.675,1)" font-size="16.5" fill="#ececec" >4.60</text>
<text transform="translate(1090.8,858.8) scale(0.675,1)" font-size="16.5" fill="#ececec" >2.38</text>
<text transform="translate(1164.9,858.8) scale(0.675,1)" font-size="16.5" fill="#ececec" >2.77</text>
<text transform="translate(1202.1,858.8) scale(0.675,1)" font-size="16.5" fill="#ececec" >3.38</text>
<text transform="translate(1270.6,858.8) scale(0.675,1)" font-size="16.5" fill="#ececec" >8.30</text>
<text transform="translate(1344.7,858.8) scale(0.675,1)" font-size="16.5" fill="#ececec" >5.00</text>
<text transform="translate(1379.3,858.8) scale(0.675,1)" font-size="16.5" fill="#ececec" >3.09</text>
<text transform="translate(1414.7,858.8) scale(0.675,1)" font-size="16.5" fill="#ececec" >1.79</text>
<text transform="translate(1449.7,858.8) scale(0.675,1)" font-size="16.5" fill="#ececec" >6.23</text>
<text transform="translate(1490.6,858.8) scale(0.675,1)" font-size="16.5" fill="#ececec" >2.73</text>
<text transform="translate(1539,858.8) scale(0.675,1)" font-size="16.5" fill="#ececec" >6.40</text>
</g>
<g id="reading">
<text x="14.5" y="687.5" font-size="30.5" fill="#f2f2f2" textLength="225" lengthAdjust="spacingAndGlyphs" stroke="#f2f2f2" stroke-width="0.55">Current Reading</text>
<text x="14.5" y="733.8" font-size="27.5" fill="#f2f2f2" textLength="106" lengthAdjust="spacingAndGlyphs" stroke="#f2f2f2" stroke-width="0.55">x: 0.2174</text>
<text x="14.5" y="777.5" font-size="27.5" fill="#f2f2f2" textLength="106.5" lengthAdjust="spacingAndGlyphs" stroke="#f2f2f2" stroke-width="0.55">y: 0.2528</text>
<text x="14.5" y="822" font-size="27.5" fill="#f2f2f2" textLength="113.5" lengthAdjust="spacingAndGlyphs" stroke="#f2f2f2" stroke-width="0.55">fL: 19.744</text>
<text x="14.5" y="866.3" font-size="27.5" fill="#f2f2f2" textLength="164" lengthAdjust="spacingAndGlyphs" stroke="#f2f2f2" stroke-width="0.55">cd/m²: 67.649</text>
</g>
<g id="toolbar">
<path d="M0.0 951 V894 a4 4 0 0 1 4 -4 H52.0 a4 4 0 0 1 4 4 V951 Z" fill="url(#btn)"/>
<rect x="4.7" y="894.8" width="46.6" height="24.4" rx="3.5" fill="#000000" stroke="#acacac" stroke-width="1"/>
<text transform="translate(28.0,934) scale(0.9,1)" font-size="10.8" fill="#3e3e3e" text-anchor="middle" font-weight="bold" >Black</text>
<path d="M58.1 951 V894 a4 4 0 0 1 4 -4 H110.1 a4 4 0 0 1 4 4 V951 Z" fill="url(#btn)"/>
<rect x="62.8" y="894.8" width="46.6" height="24.4" rx="3.5" fill="#5a5a5a" stroke="#acacac" stroke-width="1"/>
<text transform="translate(86.1,934) scale(0.9,1)" font-size="10.8" fill="#3e3e3e" text-anchor="middle" font-weight="bold" >Gray 35</text>
<path d="M116.2 951 V894 a4 4 0 0 1 4 -4 H168.2 a4 4 0 0 1 4 4 V951 Z" fill="url(#btn)"/>
<rect x="120.9" y="894.8" width="46.6" height="24.4" rx="3.5" fill="#808080" stroke="#acacac" stroke-width="1"/>
<text transform="translate(144.2,934) scale(0.9,1)" font-size="10.8" fill="#3e3e3e" text-anchor="middle" font-weight="bold" >Gray 50</text>
<path d="M174.3 951 V894 a4 4 0 0 1 4 -4 H226.3 a4 4 0 0 1 4 4 V951 Z" fill="url(#btn)"/>
<rect x="179.0" y="894.8" width="46.6" height="24.4" rx="3.5" fill="#a6a6a6" stroke="#acacac" stroke-width="1"/>
<text transform="translate(202.3,934) scale(0.9,1)" font-size="10.8" fill="#3e3e3e" text-anchor="middle" font-weight="bold" >Gray 65</text>
<path d="M232.4 951 V894 a4 4 0 0 1 4 -4 H284.4 a4 4 0 0 1 4 4 V951 Z" fill="url(#btn)"/>
<rect x="237.1" y="894.8" width="46.6" height="24.4" rx="3.5" fill="#cccccc" stroke="#acacac" stroke-width="1"/>
<text transform="translate(260.4,934) scale(0.9,1)" font-size="10.8" fill="#3e3e3e" text-anchor="middle" font-weight="bold" >Gray 80</text>
<path d="M290.5 951 V894 a4 4 0 0 1 4 -4 H342.5 a4 4 0 0 1 4 4 V951 Z" fill="url(#btn)"/>
<rect x="295.2" y="894.8" width="46.6" height="24.4" rx="3.5" fill="#ffffff" stroke="#acacac" stroke-width="1"/>
<text transform="translate(318.5,934) scale(0.9,1)" font-size="10.8" fill="#3e3e3e" text-anchor="middle" font-weight="bold" >White</text>
<path d="M348.6 951 V894 a4 4 0 0 1 4 -4 H400.6 a4 4 0 0 1 4 4 V951 Z" fill="url(#btn)"/>
<rect x="353.3" y="894.8" width="46.6" height="24.4" rx="3.5" fill="#7a5442" stroke="#acacac" stroke-width="1"/>
<text transform="translate(376.6,934) scale(0.9,1)" font-size="10.8" fill="#3e3e3e" text-anchor="middle" font-weight="bold" >Dark Skin</text>
<path d="M406.7 951 V894 a4 4 0 0 1 4 -4 H458.7 a4 4 0 0 1 4 4 V951 Z" fill="url(#btn)"/>
<rect x="411.4" y="894.8" width="46.6" height="24.4" rx="3.5" fill="#cf9a84" stroke="#acacac" stroke-width="1"/>
<text transform="translate(434.7,934) scale(0.9,1)" font-size="10.8" fill="#3e3e3e" text-anchor="middle" font-weight="bold" >Light Skin</text>
<path d="M464.8 951 V894 a4 4 0 0 1 4 -4 H516.8 a4 4 0 0 1 4 4 V951 Z" fill="url(#btn)"/>
<rect x="469.5" y="894.8" width="46.6" height="24.4" rx="3.5" fill="#5b7ea8" stroke="#acacac" stroke-width="1"/>
<text transform="translate(492.8,934) scale(0.9,1)" font-size="10.8" fill="#3e3e3e" text-anchor="middle" font-weight="bold" >Blue Sky</text>
<path d="M522.9 951 V894 a4 4 0 0 1 4 -4 H574.9 a4 4 0 0 1 4 4 V951 Z" fill="url(#btn)"/>
<rect x="527.6" y="894.8" width="46.6" height="24.4" rx="3.5" fill="#5a7040" stroke="#acacac" stroke-width="1"/>
<text transform="translate(550.9,934) scale(0.9,1)" font-size="10.8" fill="#3e3e3e" text-anchor="middle" font-weight="bold" >Foliage</text>
<path d="M581.0 951 V894 a4 4 0 0 1 4 -4 H633.0 a4 4 0 0 1 4 4 V951 Z" fill="url(#btn)"/>
<rect x="585.7" y="894.8" width="46.6" height="24.4" rx="3.5" fill="#8683b8" stroke="#acacac" stroke-width="1"/>
<text transform="translate(593.3,934) scale(0.9,1)" font-size="10.8" fill="#3e3e3e" font-weight="bold" >Blue</text>
<text transform="translate(593.3,946) scale(0.9,1)" font-size="10.8" fill="#3e3e3e" font-weight="bold" >Flower</text>
<path d="M639.1 951 V894 a4 4 0 0 1 4 -4 H691.1 a4 4 0 0 1 4 4 V951 Z" fill="url(#btn)"/>
<rect x="643.8" y="894.8" width="46.6" height="24.4" rx="3.5" fill="#62c0ac" stroke="#acacac" stroke-width="1"/>
<text transform="translate(652.2,934) scale(0.9,1)" font-size="10.8" fill="#3e3e3e" font-weight="bold" >Bluish</text>
<text transform="translate(652.2,946) scale(0.9,1)" font-size="10.8" fill="#3e3e3e" font-weight="bold" >Green</text>
<path d="M697.2 951 V894 a4 4 0 0 1 4 -4 H749.2 a4 4 0 0 1 4 4 V951 Z" fill="url(#btn)"/>
<rect x="701.9" y="894.8" width="46.6" height="24.4" rx="3.5" fill="#e27f2a" stroke="#acacac" stroke-width="1"/>
<text transform="translate(725.2,934) scale(0.9,1)" font-size="10.8" fill="#3e3e3e" text-anchor="middle" font-weight="bold" >Orange</text>
<path d="M755.3 951 V894 a4 4 0 0 1 4 -4 H807.3 a4 4 0 0 1 4 4 V951 Z" fill="url(#btn)"/>
<rect x="760.0" y="894.8" width="46.6" height="24.4" rx="3.5" fill="#475fb0" stroke="#acacac" stroke-width="1"/>
<text transform="translate(763.9,934) scale(0.9,1)" font-size="10.8" fill="#3e3e3e" font-weight="bold" >Purplish</text>
<text transform="translate(763.9,946) scale(0.9,1)" font-size="10.8" fill="#3e3e3e" font-weight="bold" >Blue</text>
<path d="M813.4 951 V894 a4 4 0 0 1 4 -4 H865.4 a4 4 0 0 1 4 4 V951 Z" fill="url(#btn)"/>
<rect x="818.1" y="894.8" width="46.6" height="24.4" rx="3.5" fill="#cc5565" stroke="#acacac" stroke-width="1"/>
<text transform="translate(819.8,934) scale(0.9,1)" font-size="10.8" fill="#3e3e3e" font-weight="bold" >Moderate</text>
<text transform="translate(819.8,946) scale(0.9,1)" font-size="10.8" fill="#3e3e3e" font-weight="bold" >Red</text>
<path d="M871.5 951 V894 a4 4 0 0 1 4 -4 H923.5 a4 4 0 0 1 4 4 V951 Z" fill="url(#btn)"/>
<rect x="876.2" y="894.8" width="46.6" height="24.4" rx="3.5" fill="#5c3a6e" stroke="#acacac" stroke-width="1"/>
<text transform="translate(899.5,934) scale(0.9,1)" font-size="10.8" fill="#3e3e3e" text-anchor="middle" font-weight="bold" >Purple</text>
<path d="M929.6 951 V894 a4 4 0 0 1 4 -4 H981.6 a4 4 0 0 1 4 4 V951 Z" fill="url(#btn)"/>
<rect x="934.3" y="894.8" width="46.6" height="24.4" rx="3.5" fill="#a7c441" stroke="#acacac" stroke-width="1"/>
<text transform="translate(942.5,934) scale(0.9,1)" font-size="10.8" fill="#3e3e3e" font-weight="bold" >Yellow</text>
<text transform="translate(942.5,946) scale(0.9,1)" font-size="10.8" fill="#3e3e3e" font-weight="bold" >Green</text>
<path d="M987.7 951 V894 a4 4 0 0 1 4 -4 H1039.7 a4 4 0 0 1 4 4 V951 Z" fill="url(#btn)"/>
<rect x="992.4" y="894.8" width="46.6" height="24.4" rx="3.5" fill="#eda62f" stroke="#acacac" stroke-width="1"/>
<text transform="translate(998.7,934) scale(0.9,1)" font-size="10.8" fill="#3e3e3e" font-weight="bold" >Orange</text>
<text transform="translate(998.7,946) scale(0.9,1)" font-size="10.8" fill="#3e3e3e" font-weight="bold" >Yellow</text>
<path d="M1045.8 951 V894 a4 4 0 0 1 4 -4 H1097.8 a4 4 0 0 1 4 4 V951 Z" fill="url(#btn)"/>
<rect x="1050.5" y="894.8" width="46.6" height="24.4" rx="3.5" fill="#2a3b9e" stroke="#acacac" stroke-width="1"/>
<text transform="translate(1073.8,934) scale(0.9,1)" font-size="10.8" fill="#3e3e3e" text-anchor="middle" font-weight="bold" >Blue</text>
<path d="M1103.9 951 V894 a4 4 0 0 1 4 -4 H1155.9 a4 4 0 0 1 4 4 V951 Z" fill="url(#btn)"/>
<rect x="1108.6" y="894.8" width="46.6" height="24.4" rx="3.5" fill="#449c49" stroke="#acacac" stroke-width="1"/>
<text transform="translate(1131.9,934) scale(0.9,1)" font-size="10.8" fill="#3e3e3e" text-anchor="middle" font-weight="bold" >Green</text>
<path d="M1162.0 951 V894 a4 4 0 0 1 4 -4 H1214.0 a4 4 0 0 1 4 4 V951 Z" fill="url(#btn)"/>
<rect x="1166.7" y="894.8" width="46.6" height="24.4" rx="3.5" fill="#b82c3a" stroke="#acacac" stroke-width="1"/>
<text transform="translate(1190.0,934) scale(0.9,1)" font-size="10.8" fill="#3e3e3e" text-anchor="middle" font-weight="bold" >Red</text>
<path d="M1220.1 951 V894 a4 4 0 0 1 4 -4 H1272.1 a4 4 0 0 1 4 4 V951 Z" fill="url(#btn)"/>
<rect x="1224.8" y="894.8" width="46.6" height="24.4" rx="3.5" fill="#f2cb1f" stroke="#acacac" stroke-width="1"/>
<text transform="translate(1248.1,934) scale(0.9,1)" font-size="10.8" fill="#3e3e3e" text-anchor="middle" font-weight="bold" >Yellow</text>
<path d="M1278.2 951 V894 a4 4 0 0 1 4 -4 H1330.2 a4 4 0 0 1 4 4 V951 Z" fill="url(#btn)"/>
<rect x="1282.9" y="894.8" width="46.6" height="24.4" rx="3.5" fill="#c4579c" stroke="#acacac" stroke-width="1"/>
<text transform="translate(1306.2,934) scale(0.9,1)" font-size="10.8" fill="#3e3e3e" text-anchor="middle" font-weight="bold" >Magenta</text>
<path d="M1336.3 951 V894 a4 4 0 0 1 4 -4 H1388.3 a4 4 0 0 1 4 4 V951 Z" fill="url(#btnsel)"/>
<rect x="1341.0" y="894.8" width="46.6" height="24.4" rx="3.5" fill="#008bab" stroke="#8fd0e0" stroke-width="1"/>
<text transform="translate(1364.3,934) scale(0.9,1)" font-size="10.8" fill="#f4f4f4" text-anchor="middle" font-weight="bold" >Cyan</text>
<path d="M1396 908 V894 a4 4 0 0 1 4 -4 H1440 a4 4 0 0 1 4 4 V908 Z" fill="url(#btn)"/>
<circle cx="1420" cy="898.5" r="7" fill="url(#knob)"/>
<path d="M1415.5 901 L1420 896 L1424.5 901 Z" fill="#3a3a3a"/>
<rect x="1396" y="909.5" width="48" height="42" fill="url(#btn)" />
<rect x="1403.5" y="914" width="32.5" height="32.5" rx="5" fill="url(#sqic)" stroke="#2a2a2a" stroke-width="2.2"/>
<rect x="1405.5" y="916" width="28.5" height="28.5" rx="3.5" fill="none" stroke="#c4c4c4" stroke-width="1"/>
<rect x="1413" y="923" width="14.5" height="14.5" fill="#000000" />
<rect x="1445.5" y="890" width="45.299999999999955" height="30" fill="url(#btn)" />
<circle cx="1468.15" cy="905" r="10" fill="url(#knob)"/>
<rect x="1491.8" y="890" width="44.0" height="30" fill="url(#btn)" />
<circle cx="1513.8" cy="905" r="10" fill="url(#knob)"/>
<rect x="1536.8" y="890" width="43.5" height="30" fill="url(#btn)" />
<circle cx="1558.55" cy="905" r="10" fill="url(#knob)"/>
<rect x="1581.3" y="890" width="44.5" height="30" fill="url(#btn)" />
<circle cx="1603.55" cy="905" r="10" fill="url(#knob)"/>
<rect x="1626.8" y="890" width="44.0" height="30" fill="url(#btndark)" />
<circle cx="1648.8" cy="905" r="10" fill="#2c2c2c"/>
<rect x="1671.8" y="890" width="46.200000000000045" height="30" fill="url(#btndark)" />
<circle cx="1694.9" cy="905" r="10" fill="#2c2c2c"/>
<rect x="1464.3" y="901" width="8" height="8" fill="#333333" />
<path d="M1510.5 899.5 L1520.5 905 L1510.5 910.5 Z" fill="#333333"/>
<path d="M1555.5 900.5 H1553 V909.5 H1555.5 M1562.5 900.5 H1565 V909.5 H1562.5" fill="none" stroke="#333" stroke-width="1.6"/>
<path d="M1556.3 905 h1.4 M1558.6 905 h1.4 M1560.9 905 h1.4" stroke="#333" stroke-width="1.6" fill="none"/>
<text x="1603.5" y="910" font-size="16" fill="#333333" text-anchor="middle" font-weight="bold" >∞</text>
<path d="M1643.5 903.5 a5.2 5.2 0 0 1 9.5 -1.5 M1653.8 906.5 a5.2 5.2 0 0 1 -9.5 1.5" fill="none" stroke="#1a1a1a" stroke-width="2.2"/>
<path d="M1654.8 899 v4.6 h-4.6 Z M1642.5 911 v-4.6 h4.6 Z" fill="#1a1a1a"/>
<path d="M1445.5 951 V925 a4 4 0 0 1 4 -4 H1581 V951 Z" fill="url(#btn)"/>
<path d="M1582.5 951 V921 H1713.5 a4 4 0 0 1 4 4 V951 Z" fill="url(#btn)"/>
<circle cx="1476" cy="936.5" r="9.5" fill="url(#knob)"/>
<circle cx="1690" cy="936.5" r="9.5" fill="url(#knob)"/>
<path d="M1475.5 932 l-4 4.5 l4 4.5 M1480.5 932 l-4 4.5 l4 4.5" fill="none" stroke="#3a3a3a" stroke-width="1.5"/>
<path d="M1686 932 l4 4.5 l-4 4.5 M1691 932 l4 4.5 l-4 4.5" fill="none" stroke="#3a3a3a" stroke-width="1.5"/>
<text x="1503" y="942.8" font-size="20.5" fill="#333333" textLength="50" lengthAdjust="spacingAndGlyphs" stroke="#333333" stroke-width="0.75">Back</text>
<text x="1609.5" y="942.8" font-size="20.5" fill="#333333" textLength="51" lengthAdjust="spacingAndGlyphs" stroke="#333333" stroke-width="0.75">Next</text>
</g>
</svg>
</body>
</html>
